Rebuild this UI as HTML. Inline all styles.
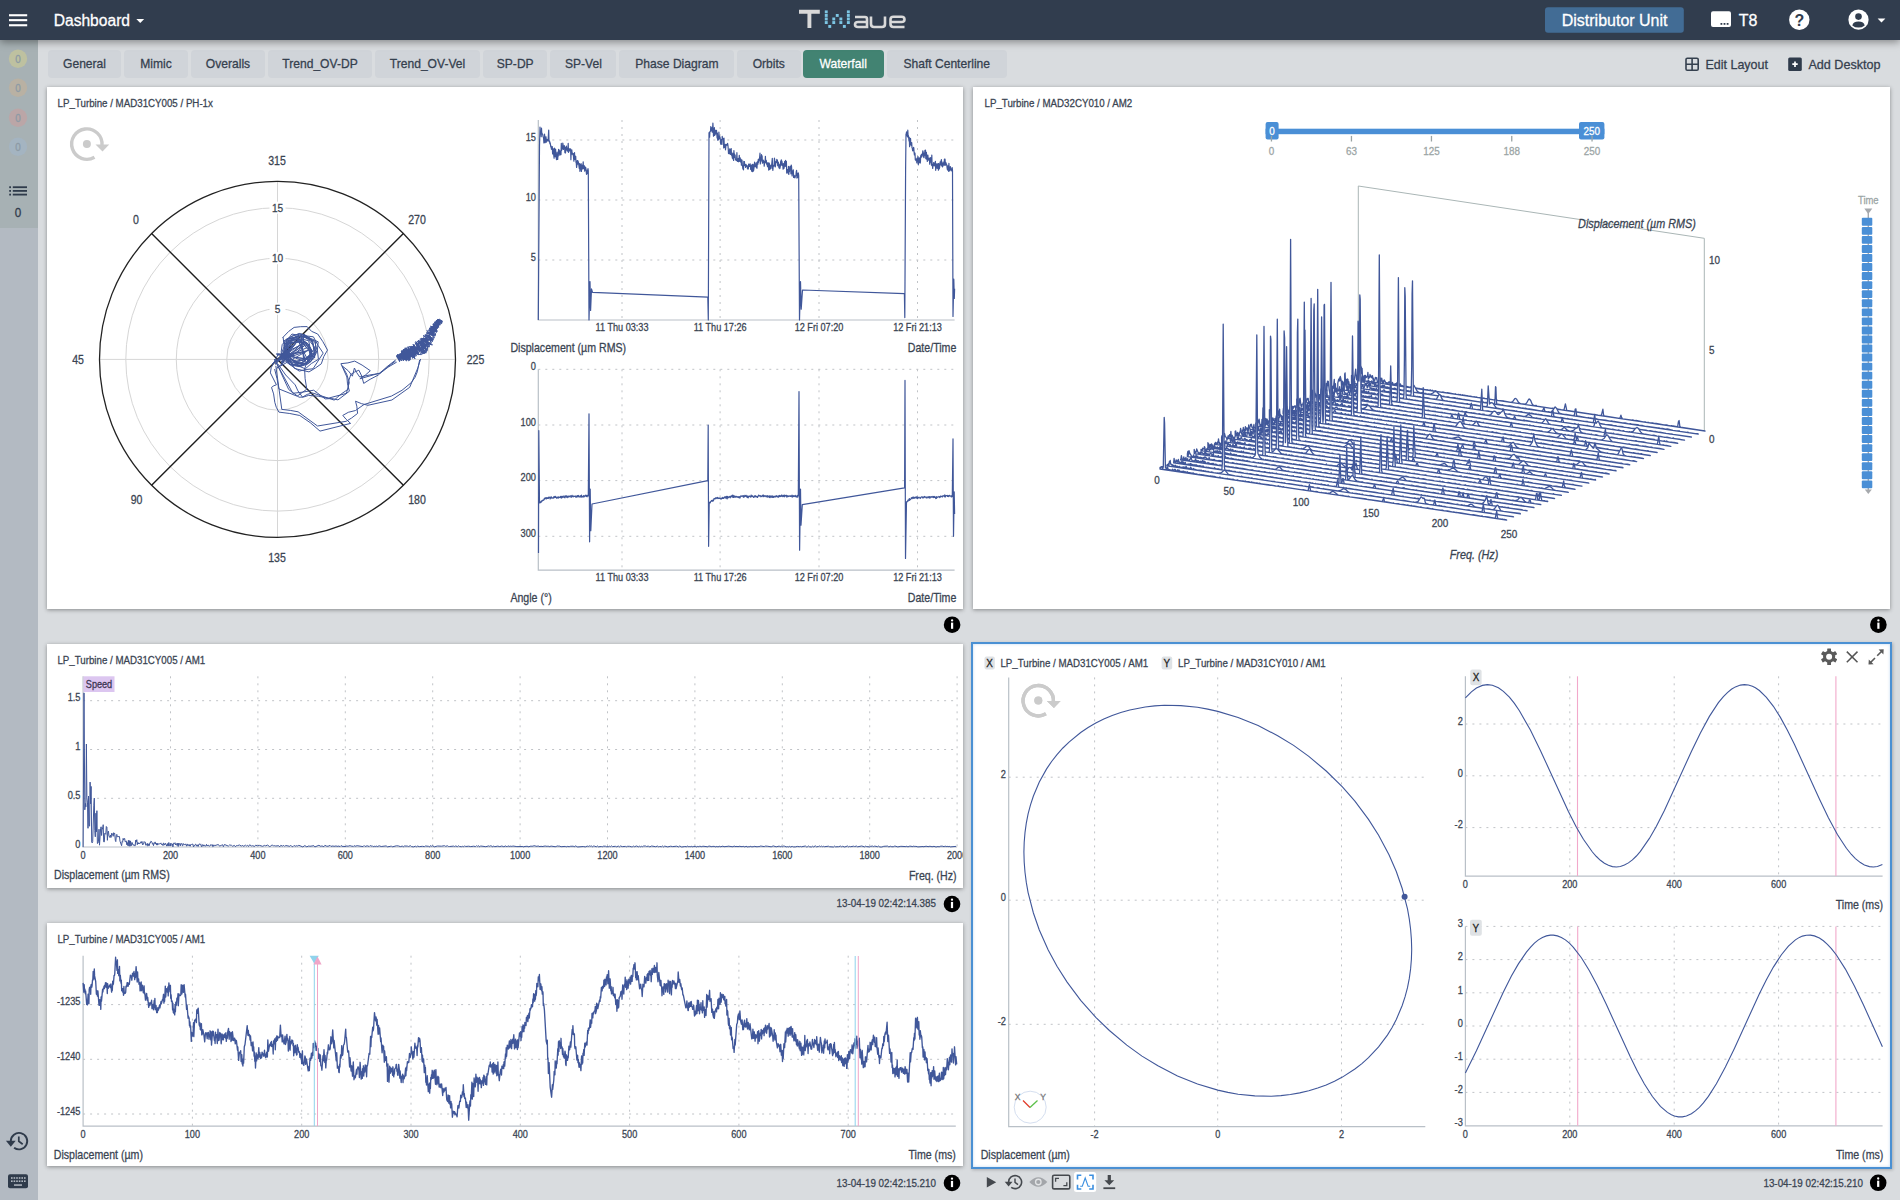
<!DOCTYPE html><html><head><meta charset="utf-8"><style>
html,body{margin:0;padding:0;}
body{width:1900px;height:1200px;overflow:hidden;position:relative;background:#d9dcdf;font-family:"Liberation Sans", sans-serif;}
.a{position:absolute;}
.hdr{left:0;top:0;width:1900px;height:40px;background:#313d4e;box-shadow:0 2px 8px rgba(0,0,0,.4);z-index:3}
.side{left:0;top:40px;width:38px;height:1160px;background:#b3bac2;z-index:2}
.sidetop{left:0;top:40px;width:38px;height:188px;background:#a7b1b4;z-index:2}
.tab{top:50px;height:27.5px;background:#d0d4d9;border-radius:4px;}
.panel{background:#fff;box-shadow:0 1px 4px rgba(0,0,0,.38);}
svg text{font-family:"Liberation Sans", sans-serif;}
</style></head><body>
<div class="a hdr"></div>
<div class="a side"></div>
<div class="a sidetop"></div>

<div class="a tab" style="left:48px;width:73.0px;background:#d0d4d9"></div>
<div class="a tab" style="left:124px;width:64.0px;background:#d0d4d9"></div>
<div class="a tab" style="left:191px;width:74.0px;background:#d0d4d9"></div>
<div class="a tab" style="left:268px;width:104.0px;background:#d0d4d9"></div>
<div class="a tab" style="left:375px;width:105.0px;background:#d0d4d9"></div>
<div class="a tab" style="left:483px;width:64.4px;background:#d0d4d9"></div>
<div class="a tab" style="left:550.2px;width:66.3px;background:#d0d4d9"></div>
<div class="a tab" style="left:619.2px;width:115.3px;background:#d0d4d9"></div>
<div class="a tab" style="left:737px;width:63.5px;background:#d0d4d9"></div>
<div class="a tab" style="left:803px;width:80.5px;background:#428372"></div>
<div class="a tab" style="left:886.7px;width:120.0px;background:#d0d4d9"></div>
<div class="a panel" style="left:47px;top:87px;width:916.0px;height:521.7px"></div>
<div class="a panel" style="left:973px;top:87px;width:917.4px;height:521.7px"></div>
<div class="a panel" style="left:47px;top:643.7px;width:916.0px;height:244.3px"></div>
<div class="a panel" style="left:47px;top:923px;width:916.0px;height:243.3px"></div>
<div class="a" style="left:971px;top:642px;width:917px;height:522.5px;background:#fff;border:2px solid #4a90d3;box-shadow:1px 1px 3px rgba(0,0,0,.22), inset 0 0 3px rgba(74,144,211,.35);"></div>
<svg class="a" style="left:0;top:0;z-index:4" width="1900" height="1200" viewBox="0 0 1900 1200">
<g fill="#fff">
<rect x="9" y="14.2" width="18.2" height="2.1"/>
<rect x="9" y="19.1" width="18.2" height="2.1"/>
<rect x="9" y="24.2" width="18.2" height="2.1"/>
</g>
<text transform="translate(53.7,26.1) scale(0.975,1)" font-size="16" text-anchor="start" fill="#fff" stroke="#fff" stroke-width="0.28" font-weight="normal" font-style="normal">Dashboard</text>
<path d="M136.3 19 L144.2 19 L140.25 23 Z" fill="#fff"/>
<g>
<path d="M799 11.8 H819.8 M809.4 11.8 V28" stroke="#d9d9d9" stroke-width="3.9" fill="none"/>
<rect x="824.8" y="10.4" width="2.9" height="2.9" fill="#7cc6e4"/>
<rect x="824.8" y="14.0" width="2.9" height="2.9" fill="#7cc6e4"/>
<rect x="824.8" y="17.5" width="2.9" height="2.9" fill="#7cc6e4"/>
<rect x="824.8" y="21.1" width="2.9" height="2.9" fill="#7cc6e4"/>
<rect x="828.3" y="25.0" width="2.9" height="2.9" fill="#7cc6e4"/>
<rect x="832.3" y="17.5" width="2.9" height="2.9" fill="#7cc6e4"/>
<rect x="832.3" y="21.1" width="2.9" height="2.9" fill="#7cc6e4"/>
<rect x="835.8" y="14.0" width="2.9" height="2.9" fill="#7cc6e4"/>
<rect x="839.4" y="17.5" width="2.9" height="2.9" fill="#7cc6e4"/>
<rect x="839.4" y="21.1" width="2.9" height="2.9" fill="#7cc6e4"/>
<rect x="842.9" y="25.0" width="2.9" height="2.9" fill="#7cc6e4"/>
<rect x="846.9" y="10.4" width="2.9" height="2.9" fill="#7cc6e4"/>
<rect x="846.9" y="14.0" width="2.9" height="2.9" fill="#7cc6e4"/>
<rect x="846.9" y="17.5" width="2.9" height="2.9" fill="#7cc6e4"/>
<rect x="846.9" y="21.1" width="2.9" height="2.9" fill="#7cc6e4"/>
<path d="M855 17 H865 Q867 17 867 19 V27 H858 Q855 27 855 24.5 Q855 22 858 22 H867" stroke="#d9d9d9" stroke-width="2.6" fill="none"/>
<path d="M871 16.5 V24 Q871 27 874 27 H882 Q885 27 885 24 V16.5" stroke="#d9d9d9" stroke-width="2.6" fill="none"/>
<path d="M904.5 27 H893.5 Q890.5 27 890.5 24 V19.5 Q890.5 16.8 893.5 16.8 H901.5 Q904.5 16.8 904.5 19.5 Q904.5 22 901.5 22 H891" stroke="#d9d9d9" stroke-width="2.6" fill="none"/>
</g>
<rect x="1545" y="7.2" width="138.8" height="25.5" rx="3" fill="#426c95"/>
<text transform="translate(1561.7,26.3) scale(1.0,1)" font-size="16" text-anchor="start" fill="#fff" stroke="#fff" stroke-width="0.28" font-weight="normal" font-style="normal">Distributor Unit</text>
<rect x="1711" y="11.3" width="20" height="15.6" rx="2" fill="#fff"/>
<g fill="#313d4e"><rect x="1720.5" y="23" width="1.8" height="1.8"/><rect x="1723.6" y="23" width="1.8" height="1.8"/><rect x="1726.7" y="23" width="1.8" height="1.8"/></g>
<text transform="translate(1738.8,26.3) scale(1.0,1)" font-size="16" text-anchor="start" fill="#fff" stroke="#fff" stroke-width="0.28" font-weight="normal" font-style="normal">T8</text>
<circle cx="1799.3" cy="19.7" r="10.2" fill="#fff"/>
<text x="1799.3" y="25.6" font-size="16" font-weight="bold" text-anchor="middle" fill="#313d4e">?</text>
<circle cx="1858.5" cy="19.7" r="10.1" fill="#fff"/>
<circle cx="1858.5" cy="16.6" r="3.3" fill="#313d4e"/>
<path d="M1852.3 25.4 Q1853 21.6 1858.5 21.6 Q1864 21.6 1864.7 25.4 Q1862 27.6 1858.5 27.6 Q1855 27.6 1852.3 25.4 Z" fill="#313d4e"/>
<path d="M1877.6 18.5 L1885.4 18.5 L1881.5 22.6 Z" fill="#fff"/>
<circle cx="18" cy="58.7" r="9.2" fill="#bec1a0"/>
<text transform="translate(18.0,62.7) scale(0.9,1)" font-size="11" text-anchor="middle" fill="#8c9aa5" stroke="#8c9aa5" stroke-width="0.28" font-weight="normal" font-style="normal">0</text>
<circle cx="18" cy="87.8" r="9.2" fill="#b9b1a3"/>
<text transform="translate(18.0,91.8) scale(0.9,1)" font-size="11" text-anchor="middle" fill="#8c9aa5" stroke="#8c9aa5" stroke-width="0.28" font-weight="normal" font-style="normal">0</text>
<circle cx="18" cy="117.8" r="9.2" fill="#bba6a7"/>
<text transform="translate(18.0,121.8) scale(0.9,1)" font-size="11" text-anchor="middle" fill="#8c9aa5" stroke="#8c9aa5" stroke-width="0.28" font-weight="normal" font-style="normal">0</text>
<circle cx="18" cy="146.7" r="9.2" fill="#a4b4c1"/>
<text transform="translate(18.0,150.7) scale(0.9,1)" font-size="11" text-anchor="middle" fill="#8c9aa5" stroke="#8c9aa5" stroke-width="0.28" font-weight="normal" font-style="normal">0</text>
<g fill="#2f3b4b">
<rect x="9.2" y="186.29999999999998" width="1.8" height="1.8"/><rect x="12.8" y="186.29999999999998" width="14.2" height="1.8"/>
<rect x="9.2" y="190.0" width="1.8" height="1.8"/><rect x="12.8" y="190.0" width="14.2" height="1.8"/>
<rect x="9.2" y="193.7" width="1.8" height="1.8"/><rect x="12.8" y="193.7" width="14.2" height="1.8"/>
</g>
<text transform="translate(18.0,217.2) scale(0.9,1)" font-size="13" text-anchor="middle" fill="#2f3b4b" stroke="#2f3b4b" stroke-width="0.28" font-weight="normal" font-style="normal">0</text>
<path d="M10.8 1141.0 A8.2 8.2 0 1 1 14.1 1147.7" stroke="#2f3b4b" stroke-width="1.9" fill="none"/><path d="M5.9 1140.8 L15.7 1140.8 L10.8 1146.7 Z" fill="#2f3b4b"/><path d="M18.8 1136.5 V1141.3 L22.7 1144.3" stroke="#2f3b4b" stroke-width="1.71" fill="none"/>
<rect x="8" y="1174.2" width="20" height="14" rx="2" fill="#2f3b4b"/>
<g fill="#b3bac2">
<rect x="11.0" y="1177.2" width="1.6" height="1.6"/>
<rect x="13.6" y="1177.2" width="1.6" height="1.6"/>
<rect x="16.2" y="1177.2" width="1.6" height="1.6"/>
<rect x="18.8" y="1177.2" width="1.6" height="1.6"/>
<rect x="21.4" y="1177.2" width="1.6" height="1.6"/>
<rect x="24.0" y="1177.2" width="1.6" height="1.6"/>
<rect x="11.0" y="1180.4" width="1.6" height="1.6"/>
<rect x="13.6" y="1180.4" width="1.6" height="1.6"/>
<rect x="16.2" y="1180.4" width="1.6" height="1.6"/>
<rect x="18.8" y="1180.4" width="1.6" height="1.6"/>
<rect x="21.4" y="1180.4" width="1.6" height="1.6"/>
<rect x="24.0" y="1180.4" width="1.6" height="1.6"/>
<rect x="14" y="1184.3" width="8" height="1.5"/>
</g>
<text transform="translate(84.5,67.9) scale(0.93,1)" font-size="13" text-anchor="middle" fill="#35404e" stroke="#35404e" stroke-width="0.28" font-weight="normal" font-style="normal">General</text>
<text transform="translate(156.0,67.9) scale(0.93,1)" font-size="13" text-anchor="middle" fill="#35404e" stroke="#35404e" stroke-width="0.28" font-weight="normal" font-style="normal">Mimic</text>
<text transform="translate(228.0,67.9) scale(0.93,1)" font-size="13" text-anchor="middle" fill="#35404e" stroke="#35404e" stroke-width="0.28" font-weight="normal" font-style="normal">Overalls</text>
<text transform="translate(320.0,67.9) scale(0.93,1)" font-size="13" text-anchor="middle" fill="#35404e" stroke="#35404e" stroke-width="0.28" font-weight="normal" font-style="normal">Trend_OV-DP</text>
<text transform="translate(427.5,67.9) scale(0.93,1)" font-size="13" text-anchor="middle" fill="#35404e" stroke="#35404e" stroke-width="0.28" font-weight="normal" font-style="normal">Trend_OV-Vel</text>
<text transform="translate(515.2,67.9) scale(0.93,1)" font-size="13" text-anchor="middle" fill="#35404e" stroke="#35404e" stroke-width="0.28" font-weight="normal" font-style="normal">SP-DP</text>
<text transform="translate(583.4,67.9) scale(0.93,1)" font-size="13" text-anchor="middle" fill="#35404e" stroke="#35404e" stroke-width="0.28" font-weight="normal" font-style="normal">SP-Vel</text>
<text transform="translate(676.9,67.9) scale(0.93,1)" font-size="13" text-anchor="middle" fill="#35404e" stroke="#35404e" stroke-width="0.28" font-weight="normal" font-style="normal">Phase Diagram</text>
<text transform="translate(768.8,67.9) scale(0.93,1)" font-size="13" text-anchor="middle" fill="#35404e" stroke="#35404e" stroke-width="0.28" font-weight="normal" font-style="normal">Orbits</text>
<text transform="translate(843.2,67.9) scale(0.93,1)" font-size="13" text-anchor="middle" fill="#fff" stroke="#fff" stroke-width="0.28" font-weight="normal" font-style="normal">Waterfall</text>
<text transform="translate(946.7,67.9) scale(0.93,1)" font-size="13" text-anchor="middle" fill="#35404e" stroke="#35404e" stroke-width="0.28" font-weight="normal" font-style="normal">Shaft Centerline</text>
<rect x="1686" y="58.3" width="12.2" height="12" rx="1.3" fill="none" stroke="#35404e" stroke-width="1.6"/>
<path d="M1692.1 58.3 V70.3 M1686 64.3 H1698.2" stroke="#35404e" stroke-width="1.6"/>
<text transform="translate(1705.5,68.9) scale(0.96,1)" font-size="13" text-anchor="start" fill="#35404e" stroke="#35404e" stroke-width="0.28" font-weight="normal" font-style="normal">Edit Layout</text>
<rect x="1788.2" y="57.6" width="13.6" height="13.3" rx="1.5" fill="#2f3b4b"/>
<path d="M1795 61.5 V67 M1792.3 64.2 H1797.7" stroke="#fff" stroke-width="1.7"/>
<text transform="translate(1808.4,68.9) scale(0.97,1)" font-size="13" text-anchor="start" fill="#35404e" stroke="#35404e" stroke-width="0.28" font-weight="normal" font-style="normal">Add Desktop</text>
<circle cx="952.1" cy="624.7" r="8.3" fill="#000"/><rect x="951.0" y="622.6" width="2.2" height="6.2" fill="#fff"/><circle cx="952.1" cy="620.4" r="1.15" fill="#fff"/>
<circle cx="1878.4" cy="624.7" r="8.3" fill="#000"/><rect x="1877.3" y="622.6" width="2.2" height="6.2" fill="#fff"/><circle cx="1878.4" cy="620.4" r="1.15" fill="#fff"/>
<circle cx="952" cy="904" r="8.3" fill="#000"/><rect x="950.9" y="901.9" width="2.2" height="6.2" fill="#fff"/><circle cx="952" cy="899.7" r="1.15" fill="#fff"/>
<circle cx="952" cy="1183" r="8.3" fill="#000"/><rect x="950.9" y="1180.9" width="2.2" height="6.2" fill="#fff"/><circle cx="952" cy="1178.7" r="1.15" fill="#fff"/>
<circle cx="1878.2" cy="1182.8" r="8.3" fill="#000"/><rect x="1877.1" y="1180.7" width="2.2" height="6.2" fill="#fff"/><circle cx="1878.2" cy="1178.5" r="1.15" fill="#fff"/>
<text transform="translate(936.0,907.4) scale(0.895,1)" font-size="11" text-anchor="end" fill="#3a4452" stroke="#3a4452" stroke-width="0.28" font-weight="normal" font-style="normal">13-04-19 02:42:14.385</text>
<text transform="translate(936.0,1186.8) scale(0.895,1)" font-size="11" text-anchor="end" fill="#3a4452" stroke="#3a4452" stroke-width="0.28" font-weight="normal" font-style="normal">13-04-19 02:42:15.210</text>
<text transform="translate(1862.9,1186.8) scale(0.895,1)" font-size="11" text-anchor="end" fill="#3a4452" stroke="#3a4452" stroke-width="0.28" font-weight="normal" font-style="normal">13-04-19 02:42:15.210</text>
<text transform="translate(57.6,107.0) scale(0.885,1)" font-size="11" text-anchor="start" fill="#3a4452" stroke="#3a4452" stroke-width="0.28" font-weight="normal" font-style="normal">LP_Turbine / MAD31CY005 / PH-1x</text>
<text transform="translate(984.5,107.0) scale(0.885,1)" font-size="11" text-anchor="start" fill="#3a4452" stroke="#3a4452" stroke-width="0.28" font-weight="normal" font-style="normal">LP_Turbine / MAD32CY010 / AM2</text>
<text transform="translate(57.4,664.4) scale(0.885,1)" font-size="11" text-anchor="start" fill="#3a4452" stroke="#3a4452" stroke-width="0.28" font-weight="normal" font-style="normal">LP_Turbine / MAD31CY005 / AM1</text>
<text transform="translate(57.4,942.7) scale(0.885,1)" font-size="11" text-anchor="start" fill="#3a4452" stroke="#3a4452" stroke-width="0.28" font-weight="normal" font-style="normal">LP_Turbine / MAD31CY005 / AM1</text>
<path d="M102.0 145.3 A15.2 15.2 0 1 0 94.5 157.2" stroke="#cbcbcb" stroke-width="3.4" fill="none"/><circle cx="86.9" cy="144" r="4" fill="#cbcbcb"/><path d="M95.5 144.4 L109.2 144.4 L102.5 151.5 Z" fill="#cbcbcb"/>
<path d="M1053.4 701.9 A15.2 15.2 0 1 0 1045.9 713.8" stroke="#cbcbcb" stroke-width="3.4" fill="none"/><circle cx="1038.3" cy="700.6" r="4" fill="#cbcbcb"/><path d="M1046.9 701.0 L1060.6 701.0 L1053.9 708.1 Z" fill="#cbcbcb"/>
<g fill="none" stroke="#d6d6d6" stroke-width="1">
<circle cx="277.5" cy="359.4" r="50.7"/>
<circle cx="277.5" cy="359.4" r="101.2"/>
<circle cx="277.5" cy="359.4" r="151.7"/>
<path d="M99.5 359.4 H455.5 M277.5 181.39999999999998 V537.4"/>
</g>
<circle cx="277.5" cy="359.4" r="178" fill="none" stroke="#222" stroke-width="1.3"/>
<path d="M151.6 233.5 L403.4 485.3 M403.4 233.5 L151.6 485.3" stroke="#1e1e1e" stroke-width="1.4"/>
<rect x="269.5" y="201.7" width="16" height="12" fill="#fff"/>
<text transform="translate(277.5,211.9) scale(0.88,1)" font-size="11.5" text-anchor="middle" fill="#3a4452" stroke="#3a4452" stroke-width="0.28" font-weight="normal" font-style="normal">15</text>
<rect x="269.5" y="252.2" width="16" height="12" fill="#fff"/>
<text transform="translate(277.5,262.4) scale(0.88,1)" font-size="11.5" text-anchor="middle" fill="#3a4452" stroke="#3a4452" stroke-width="0.28" font-weight="normal" font-style="normal">10</text>
<rect x="269.5" y="302.7" width="16" height="12" fill="#fff"/>
<text transform="translate(277.5,312.9) scale(0.88,1)" font-size="11.5" text-anchor="middle" fill="#3a4452" stroke="#3a4452" stroke-width="0.28" font-weight="normal" font-style="normal">5</text>
<text transform="translate(277.0,165.4) scale(0.88,1)" font-size="12" text-anchor="middle" fill="#3a4452" stroke="#3a4452" stroke-width="0.28" font-weight="normal" font-style="normal">315</text>
<text transform="translate(136.0,223.9) scale(0.88,1)" font-size="12" text-anchor="middle" fill="#3a4452" stroke="#3a4452" stroke-width="0.28" font-weight="normal" font-style="normal">0</text>
<text transform="translate(417.0,223.9) scale(0.88,1)" font-size="12" text-anchor="middle" fill="#3a4452" stroke="#3a4452" stroke-width="0.28" font-weight="normal" font-style="normal">270</text>
<text transform="translate(78.0,363.9) scale(0.88,1)" font-size="12" text-anchor="middle" fill="#3a4452" stroke="#3a4452" stroke-width="0.28" font-weight="normal" font-style="normal">45</text>
<text transform="translate(475.5,363.9) scale(0.88,1)" font-size="12" text-anchor="middle" fill="#3a4452" stroke="#3a4452" stroke-width="0.28" font-weight="normal" font-style="normal">225</text>
<text transform="translate(136.5,504.4) scale(0.88,1)" font-size="12" text-anchor="middle" fill="#3a4452" stroke="#3a4452" stroke-width="0.28" font-weight="normal" font-style="normal">90</text>
<text transform="translate(417.0,504.4) scale(0.88,1)" font-size="12" text-anchor="middle" fill="#3a4452" stroke="#3a4452" stroke-width="0.28" font-weight="normal" font-style="normal">180</text>
<text transform="translate(277.0,562.4) scale(0.88,1)" font-size="12" text-anchor="middle" fill="#3a4452" stroke="#3a4452" stroke-width="0.28" font-weight="normal" font-style="normal">135</text>
<g fill="none" stroke="#40579a" stroke-width="1" stroke-linejoin="round">
<path d="M301.4 342.6 308.1 346.6 310.1 354.8 303.1 359.8 296 361.1 288.7 359.1 286.2 352.2 287.1 344.7 294.5 342 302.2 340.9 284.2 343.5 292 334 304.2 336.8 315.4 341.4 315.9 353.2 310.3 362.3 300.1 366.2 289.2 363.6 281 354.9 285 343.9 296 336.6 303 336.4 308.9 339.9 312.9 345.2 314.7 351.8 311 357.6 306.8 363.4 299.4 363 293.3 361.1 288.8 357 284.2 351.7 290.5 340.4 296.1 336.9 307.2 358.7 300.2 363.5 292.7 359.7 287 354.6 289 347.4 292.6 340.4 301.3 339 308.3 344 312.1 351.7 306.9 358.4 311.6 356.4 307.5 362.1 300.7 366.2 293.6 362.7 286 359.9 284.8 352.3 285.1 344.8 290 338.6 297.8 336.8 306 337.1 312.9 341.8 314.7 357.8 300.5 340.5 306.9 342.7 310.8 348.4 311.8 356 298 361.9 290.9 359.3 285.9 353.2 287 345.3 292.6 339.3 300.6 339.9 304.7 361.4 298 363.6 291.1 361.5 286 356.2 285.6 348.6 291.2 343.5 298.1 342.3 305.4 343 309.7 349 310.4 356.4 306.5 363.8 297.8 337 305.1 336.5 311.4 340.3 314.1 346.9 314.1 353.5 311 359.2 306.1 363.4 299.8 365.6 293.3 364.3 288.5 360.2 282.4 355.9 284 349 291.1 338.3 297.9 338.3 314.3 355.2 310.6 361.2 304.4 363.8 298.4 365.3 292.2 364 287.5 359.8 284.7 347.1 288.8 341.1 296.1 339.9 302.8 340.1 307.5 344.3 310.8 349.1 312.2 354.9 304.1 361 296 358.3 289.5 354 287.7 346 293.1 339.4 301.1 338.9 308.7 340.7 310.1 347.9 311 355.7 303.6 359.4 301 333.8 307.9 337.2 314.8 342 317.1 350.3 313.9 358.4 307.6 364.2 299.2 366.7 290.6 365 285.4 358.7 281.1 352.2 282.2 344.6 287.2 339 293.5 335.4 300.9 334 304.1 342.1 308 346.5 312.8 350.9 305.9 360.1 301.5 363.4 295.9 362.4 291 359.7 286.6 354.9 288.7 348.9 293.8 346 297.7 340.7 303.5 343.4 303.6 334 310.2 338.3 313.2 344.7 316 351.7 311 357.6 305.5 363.1 297.1 364.2 290.9 359 286.8 353.1 284.2 345.6 288.7 338.9 296.1 336.6 303.1 336.3"/>
<path d="M282.6 337.7 288.8 331.3 294.1 327.4 300.6 326.7 307.2 326.6 311.5 331.3 317.7 334 322.9 341.7 327.5 350.1 323.8 356.5 321.3 363.8 315.6 367.9 309 371.9 294.5 368.5 290.5 362 285.9 355.8 284.2 346.5 283.1 337.1"/>
<path d="M283.4 341.2 291 336.8 299.2 333.4 306 335.9 313.4 336.8 318.1 345.5 323.2 353.1 313 368.8 306.1 369.5 299.2 371.1 286.3 362.1 285.5 351.6 284.2 341.2"/>
<path d="M286.3 339.1 304.6 335.7 318.2 341.8 317.4 350 318.4 359.3 311.4 363.5 305.3 368.8 297.8 365.7 289.7 364.4 287.2 352.3 286.2 339.2"/>
<path d="M281.7 357 308.1 350.4 276.7 368.2 305.3 345 276.2 361.3 294 345.7 275 364.3 286.7 353.9 276.3 354 293.8 355.5 277 354.7 308.8 359.3 281.8 355.3 292.3 342.2 279.8 357.7 289.2 350.9 281.2 365.7 292.2 344.7 281.2 362.1 302.3 343.3 272.3 363.8 296 342.9 281.4 363 304.6 343.2 280.6 354.7 306 351.6 275.2 361.8 307.5 347.4"/>
<path d="M278.4 353.8 271.2 367.7 270.4 372.9 276.4 384.8 273.9 385.7 271.5 387.4 273.6 393.9 274.8 402.3 276.3 407.3 278.9 412.1 289.8 413.5 299.8 415.5 310.4 422.8 320 431.1 350.6 423.4 346.1 419.3 342.8 415.4 348.3 412.3 355.5 410.5 364 404.5 391.4 396.1 402 390.3 411.3 382.6 415 377.4 417.3 371.8 419.6 360"/>
<path d="M275.8 365.8 281.8 409.4 290.3 410.4 298.1 411.8 317.5 426 346.2 421.3 351.6 418 357.6 413.4 356.8 406.2 355.5 401.2 361.4 403.6 367.9 405.3 391.9 400 409.7 387.3 417.9 367.8 420.6 359"/>
<path d="M274.2 359 292.8 393.3 302.2 392.2 313.7 390.2 325.2 398.9 331.7 398.5 338 399.9 349.4 391.2 347.5 383.9 346.9 377 340.9 363.7 347.9 362.9 354.7 361.1 362.1 365.1 370.3 370.7 365.7 374.8 359.9 378.8 379.5 373.1 395.6 361"/>
<path d="M277.5 363.5 285.7 375 295.2 384.9 297.9 390.8 302.5 397.1 307.2 394.4 312.3 392.9 334.2 400.1 341.2 394 348.3 389.1 348.6 381.2 350.8 374.5 354.7 372 358.9 370.2 361.7 376 363.7 383.4 370.1 379.3 378.2 375.1 386.5 367.1 395.6 360"/>
<path d="M274.6 369 277 378.6 278.9 388.9 297.1 396.2 306.8 389.2 305.1 378.6 304.6 368.9 309.2 355.8"/>
<path d="M276.4 362.7 288.7 389.5 299 397.2 303.3 397.1 308.6 395.4 318.3 396.2 328.3 398.2 346.4 393.4 349.3 382.5 346.7 374.1 342.1 365.8 348.4 370.9 352.4 376.2 354.4 368 356.7 372.6 359.7 377 369.5 375 380 373.4 388.1 367.2 396.7 362.1"/>
<path d="M398.3 358.5 398.4 355.8 399.6 361.7 398.8 359.8 399.6 358.1 396 356 398.8 355 401.1 360.3 399 359.4 400.6 358.1 400.1 356.5 397 358.1 398.3 354.9 397.3 357.1 398.3 358.5 399.7 357.4 399.6 356.8 399.5 360.6 397.5 354.3 398.7 359.9 397.5 356.2 401.5 358.1 399.2 356.3 400.4 359.4 398.8 354.4 401.1 357.1 399.1 357.5 400.7 360 400.2 358.2 400.1 358.8 398.6 356.7 399.2 355.8 401.8 358.2 399.6 354.5 398.6 355 399.5 357.5 401.8 360.9 401.7 357.5 402.6 358.8 400.4 356 401 358.5 401.3 357.7 400.2 357.5 403 356.5 399.4 354.2 399.8 354.7 399.8 356.9 400.3 353.7 402.8 356.4 402.3 357 402.6 359.4 403.5 355.9 402.9 358.3 401.3 353.2 401.5 356.9 403.3 358.7 402.2 359.1 403.3 357 406 360 402.5 354 400.5 355.8 402.5 357 403.6 355.1 404.5 355.7 403.6 353 400.3 353.8 403.5 357.1 403.3 359.4 404.5 358.8 403.4 360.9 402.8 356.9 401.4 351.7 405.4 360.2 400.5 353.8 403.1 358.3 401.9 351.2 405.2 359.8 405.9 357.2 406.9 359.8 402.7 351.7 402.4 355.5 404.1 360 403.4 356.1 401.6 350.6 403.6 356.5 404 355.4 403.5 351.4 406.4 359.1 405.2 359.8 402.4 350.9 406.8 359.8 404.8 352.6 402.5 350.6 402.6 352.7 405.7 354.7 403.6 349.1 404.4 358.8 407.2 360.2 406.3 361 404.2 352.4 406.9 360.1 405.4 353 405.7 355.7 406 355.8 407.1 358.4 407.2 359.8 408.8 356.7 406.1 357.2 404.1 352 404.5 350.8 406.3 356.6 402.9 350.6 405.3 349.3 403.7 349.5 405.7 356.2 409.1 358.7 405.4 352.4 406.6 358.1 405.9 356.2 409.1 359.8 403.4 349.5 407.6 357.6 408.6 360.8 410.4 359.6 408.4 358 409.8 359.6 408.1 355.2 410.3 359.2 405.1 351.4 408.1 351.8 407 355.2 409.3 360.1 409.9 358.4 405.7 350.3 410.4 356.1 407.1 349.7 404.9 347.9 405.5 351.3 406 350.7 409.3 355.8 406.5 350.7 409 359 405.2 348.4 408.8 351 406 350.2 409.8 356.6 406.6 355.6 408.8 354.2 406.7 348.9 408.6 353.7 410.2 354 407.7 349.8 410.1 355.5 408.7 349.1 410.3 358.2 409.3 350.2 407.9 349.5 408.6 348.5 409.8 356.7 412.6 354.7 406.2 347.6 409.5 356.2 410.9 352 411.5 356.6 410.6 354.9 408.4 353.1 409.3 354.2 412 353.6 412.4 358.4 413.2 357.2 408.1 346.5 408.3 348.4 407.8 352.5 412.3 357.4 410.2 352 410.5 348 410.6 350.5 410.2 347.3 410.4 353.3 411.2 352 407.8 347.1 413.8 357.3 408.3 348.2 409.4 349.1 410 352.4 410.5 350.5 413.8 357.3 411.1 351.5 415 358.6 412.2 354.7 411.5 349 414.3 358.2 414.5 351.9 411.5 346.2 414.5 358.4 410.8 346.6 412.4 349 413.3 348.4 410.5 349.6 410.7 348.7 413.3 353 409.8 346.4 415.9 352.5 409.8 346.2 415 356.7 414.3 352.6 415.6 354.9 413.6 350.1 415.3 352.7 416.3 356.1 410.8 348.3 412.7 349.1 410.3 347.5 413 351 414.4 357.4 411.8 346.8 413.6 346.4 414.3 353.7 413.3 347 412.7 347.5 415.8 353.2 419 354.9 413.8 348.3 416.3 354.4 414.1 347.4 413.5 348.6 418.3 354.8 414.8 348.9 415.6 348.6 414.4 347.4 415.9 349.4 411.9 346.5 415.5 349.5 415.7 352.1 415.3 348.4 415.5 352.8 414.5 350.8 414.5 345.2 414.3 347 414.6 345 412.8 346 418.2 352.7 418.1 350.7 416.8 348.2 415.6 349.4 413.8 344.5 417.9 350.3 415.5 346.8 419.3 354.9 412.9 346 418.1 354.2 413.1 344.4 419.1 354.5 421.5 354.6 416.4 347 416.7 349.6 420.1 349.7 418.6 348 420 351.6 415.3 342.6 418.1 349.8 415.9 343.1 418.5 348.5 419.5 347 417.5 349.2 417.3 346.8 420.9 350 415.8 341.5 421.5 352.5 422.3 351.7 418.1 347.4 422.4 351.1 422.3 354.2 418.1 343 420.6 349.9 423.5 352.6 424.7 352 416.9 344.9 421.3 348.4 422.8 347.3 420.6 350.7 421.4 349.8 418.3 345.9 423.3 353.2 422.8 350.5 424 353.8 416.2 342.2 417.8 346.5 416.7 343.7 419.9 345 424.2 350.6 422.9 349.2 423.6 353.5 425.5 353 419.8 343.3 422.6 350.2 423.8 350.4 421.2 347 423.6 349.6 421.2 343.8 419.3 342.6 419.7 342.4 418.5 343 420.6 341.3 417.2 341.4 420.3 343.8 423.6 347.4 424.5 349.1 418.3 340.2 423.1 347.2 420 343.9 426.1 353.1 425.1 347.4 420.8 341.5 424 352.6 426.8 351.4 425.2 345.7 428.2 347 421 340 422.3 344.1 424.7 345 426.2 345 417.7 342.4 421.6 343 425.5 350.2 426.5 349.3 424.4 343.8 419.4 342.5 426.4 349.9 424.4 347.7 419.9 340.5 427.3 350.6 427.7 345.5 423.8 345 424.3 344.9 422.2 341.6 423.7 346.7 423 343.3 423.2 343.7 419.7 343 425.3 346.1 423.9 343.1 420.5 343.5 426.1 345.4 426.7 343.1 429.6 345.1 424.3 342.1 423.6 340.8 423.1 343.9 428.8 345.3 429.5 346.9 419.5 342.8 425 340.8 421.9 339.1 426.1 346.4 428.1 342.8 420.1 339.7 420.2 338.7 423.9 340.6 428.2 344.3 428.6 344.8 425.4 343.4 424.1 339.8 424.9 341.1 422.7 339.4 424.8 342 427.2 341.6 429.4 345.4 429.2 344.4 427.4 341.5 427.8 344.4 427.5 342.7 430.9 344.3 421.8 338.1 421.4 338.7 423 339.2 424.1 338.7 422.1 339 432.5 344.8 431 344.8 427.4 342.1 424.6 340.6 428.3 343.6 422.6 338.9 428.4 339.8 423.4 337.7 431.2 344.1 421.2 338.9 425.2 339.3 428 341.7 424.6 341.4 426.4 337 427.2 339 422.9 339.2 428.2 340 427.9 341 426.4 340.1 430.6 340 432.7 341.5 430.5 340.1 431.2 343.2 428.6 337.1 425 338 430.5 339.8 427.2 339.8 426.6 337.6 423 335.7 426.4 336.6 426.2 334.7 430 339.5 431.8 340 425.3 335.2 430.2 337.8 426.7 335.1 429.8 336.1 431.3 338.4 427.6 339.2 432.9 339 428.8 335.5 427.7 335.7 431.3 339.9 427.2 335.2 428.5 335.5 424.8 335.1 429.1 335.2 431.9 339.3 427.9 335.3 431.7 338.3 428.8 337.1 431.6 339.2 432.9 339.6 428.3 335 429.4 337.9 431.2 338.3 434.4 337 432.6 340.9 429.1 335.6 429.3 334.8 430.9 334.8 429.5 334.8 433.5 333.4 433.2 335.3 434 336.3 428.6 333 434 334.9 427.9 333.5 429.6 333.1 433.1 336.7 430.9 332.1 434.5 335.6 433.4 333.5 430.1 333.3 430.4 334.8 430 331 434.3 336.1 426.2 333 431.8 332.5 434.8 334.4 431.5 331.7 427.4 332.6 431.9 333 435.4 335.7 435.6 333.3 434.4 333.4 430.4 332.6 430.1 333.6 426.8 330.7 427.1 331.1 429.9 330.5 434.8 331.7 432.6 331.7 432 332.5 429.7 330.9 435 331.9 434.7 332.3 431.7 332.9 432.8 332.7 429.8 327.8 428.9 330.2 434.6 330.3 433.8 330.2 431.8 331.3 436.9 330.8 435.7 331.5 431 328.8 432.6 328.4 431.5 328.5 433.7 329.2 436.9 332.3 429.9 329.2 434.3 329.8 431.2 327.4 429.5 328.9 437.5 331.2 432 330.8 432.3 329.9 429.4 328.9 436.3 329.2 435.2 330 431.1 328.8 434.2 330.2 430.8 329.6 432.3 327.9 435.5 328 436.8 330.6 434.8 328.8 431.6 330.1 431.5 327.6 435.5 330.7 430.8 328.3 437 331 435.7 329.4 433.6 328.8 437.9 327.8 431.2 326.6 432.6 329.4 430.9 329.7 436.6 330.4 432.2 326.2 435.5 329.1 434.9 327.8 435.6 330.9 432.4 328.2 434.9 327 430.3 327 434.1 327.3 431.7 328.3 433.5 326.5 435.8 330.3 433.1 326.4 432.8 328.2 436.6 329.5 432.8 327 435.9 326.4 434.3 327.9 432 327.3 430.7 326.2 436.5 328.6 435.4 326.6 436.9 327.6 432.9 324.1 434 327.6 436.6 327.6 435.1 324.4 436.9 327.9 436.8 327.2 435.7 325.6 435.4 327 435.3 325 436.2 326.4 436.3 327.3 437.7 327.7 433.6 325.7 437.3 326.7 434 325.1 434 324.5 439 326.8 435.8 327.6 438 327.2 436.8 325.6 434.6 326.7 433.9 323.4 434.1 324.6 437.4 328.5 436 325.2 437.3 327.2 435 323.8 435.4 323.7 436.3 327.1 433.2 325 434.6 322.6 437.6 328 436.8 326.9 437.8 326.7 435.6 325.4 436.6 324.9 437 325.9 436 324.5 439.1 325.8 436.4 326.6 436.9 326.3 438.8 327.2 435.5 322.5 438 325.7 435.9 321.9 436.1 322.2 436.5 321.6 438.8 324.8 435.3 323.3 436.7 324.3 436.8 324.9 435 322.3 436.3 322.4 435.6 323.5 438.1 325.9 434.4 322 435.3 322 438.2 326.7 437.4 325 438.2 324.6 435.7 323.3 436.7 324.3 438.5 324 437.2 322 438.4 322.7 438 321.2 439.6 325.3 436.5 321.6 437.2 322.2 438.2 324.9 437.6 321.9 436 321.3 440 324.3 437.8 322.8 438.4 323.3 436.4 320.4 436 321.9 440.2 324.6 438.6 322.8 439.5 322.5 435.9 321.9 436.5 320.4 438.1 323.7 438.9 321.8 437.5 321.6 438.8 322.7 441.3 322.4 438.9 321 441.8 322.7 440.5 324.3 437.1 320.5 439.4 324.1 439.4 322.6 438 319.2 438.1 320.6 440.1 324 439.6 322.2 438.5 320.6 439 321.9 439.2 321.5 440.4 321.7 437 320.1 441.6 323.4 438.5 319.6 439.4 319.1 438.3 321.4 440.8 321.5 438.4 319.4 438.9 320.9 439.7 320.3 437.4 321.5 440.6 320.9 442.7 321.4 439.8 319.6 440.4 320 439.9 321.9 438.8 319.8 440.5 320.9 441.5 321.1 439.1 321.2 441.9 321.4 437.7 319.9 437.4 319.4 439.2 320.6 438.7 322.1 442.1 322.8 440.9 321"/>
</g>
<g stroke="#c0c3c7" stroke-width="1" stroke-dasharray="2 5" fill="none"><path d="M538.3 140.0 H954.6"/><path d="M538.3 200.0 H954.6"/><path d="M538.3 260.0 H954.6"/><path d="M622.0 120.0 V320.0"/><path d="M720.1 120.0 V320.0"/><path d="M819.0 120.0 V320.0"/><path d="M917.5 120.0 V320.0"/></g>
<path d="M538.3 120.0 V320.0 H954.6" stroke="#b9c0c7" stroke-width="1.2" fill="none"/>
<text transform="translate(536.0,140.5) scale(0.88,1)" font-size="10.5" text-anchor="end" fill="#3a4452" stroke="#3a4452" stroke-width="0.28" font-weight="normal" font-style="normal">15</text>
<text transform="translate(536.0,200.5) scale(0.88,1)" font-size="10.5" text-anchor="end" fill="#3a4452" stroke="#3a4452" stroke-width="0.28" font-weight="normal" font-style="normal">10</text>
<text transform="translate(536.0,260.5) scale(0.88,1)" font-size="10.5" text-anchor="end" fill="#3a4452" stroke="#3a4452" stroke-width="0.28" font-weight="normal" font-style="normal">5</text>
<text transform="translate(622.0,331.0) scale(0.87,1)" font-size="10.5" text-anchor="middle" fill="#3a4452" stroke="#3a4452" stroke-width="0.28" font-weight="normal" font-style="normal">11 Thu 03:33</text>
<text transform="translate(720.1,331.0) scale(0.87,1)" font-size="10.5" text-anchor="middle" fill="#3a4452" stroke="#3a4452" stroke-width="0.28" font-weight="normal" font-style="normal">11 Thu 17:26</text>
<text transform="translate(819.0,331.0) scale(0.87,1)" font-size="10.5" text-anchor="middle" fill="#3a4452" stroke="#3a4452" stroke-width="0.28" font-weight="normal" font-style="normal">12 Fri 07:20</text>
<text transform="translate(917.5,331.0) scale(0.87,1)" font-size="10.5" text-anchor="middle" fill="#3a4452" stroke="#3a4452" stroke-width="0.28" font-weight="normal" font-style="normal">12 Fri 21:13</text>
<text transform="translate(510.4,351.9) scale(0.87,1)" font-size="12.2" text-anchor="start" fill="#3a4452" stroke="#3a4452" stroke-width="0.28" font-weight="normal" font-style="normal">Displacement (µm RMS)</text>
<text transform="translate(956.3,351.9) scale(0.87,1)" font-size="12.2" text-anchor="end" fill="#3a4452" stroke="#3a4452" stroke-width="0.28" font-weight="normal" font-style="normal">Date/Time</text>
<path d="M538.3 320 539.5 146 540 127 540.3 133.2 540.6 132.4 540.9 132.4 541.2 136.7 541.5 128.2 541.8 133.9 542.1 133.1 542.4 133.9 542.7 134.5 543 136.4 543.3 137 543.6 138.5 543.9 142.9 544.2 142.3 544.5 134 544.8 136.3 545.1 142.6 545.4 138 545.7 137.6 546 136.8 546.3 142.1 546.6 139.4 546.9 139.4 547.5 139.9 547.8 141.1 548.1 140 548.7 130.1 549 140.7 549.3 141.9 549.6 141.1 549.9 143.7 550.2 142.9 550.8 146.8 551.1 146 551.4 149.2 551.7 147.2 552 149.3 552.3 146.7 552.6 153.9 552.9 150.8 553.2 148.8 553.8 155.8 554.1 158.2 554.4 148 554.7 154.8 555 156.5 555.3 155.1 555.6 149.1 555.9 157.3 556.2 157.5 556.5 159.6 557.1 152.2 557.4 159.4 557.7 159.4 558 154.2 558.3 156 558.6 149.3 558.9 150.6 559.2 150.1 559.8 155.2 560.1 151.2 560.4 151.5 560.7 150.8 561 154.6 561.3 143.4 561.6 150.5 561.9 146.6 562.2 146.3 562.5 148.8 562.8 143.1 563.1 145.1 563.4 149.5 563.7 146.3 564 147.4 564.3 145.7 564.6 147.6 564.9 152.7 565.2 151.2 565.5 152.9 565.8 147 566.1 148.2 566.4 146.2 567 150.4 567.3 151.1 567.6 148.2 567.9 150.2 568.2 143.3 568.5 152.4 568.8 151.3 569.1 148.5 569.4 151 569.7 149.2 570 149.7 570.3 150.6 570.6 148.9 570.9 159.7 571.2 152.2 571.5 154.2 571.8 149.9 572.1 153.5 572.4 153.1 572.7 154.4 573 154.8 573.3 153.5 573.6 158.4 573.9 161.1 574.2 155.5 574.5 152.6 574.8 159.5 575.1 155.9 575.4 157.8 575.7 156.3 576 162.4 576.3 163.1 576.6 167.5 576.9 165.1 577.2 160.7 577.5 164.2 577.8 160.6 578.4 162.1 579.3 168.3 579.6 163.5 579.9 171.3 580.2 168.7 580.5 164.6 580.8 166.7 581.1 163.7 581.4 171.5 582 165.2 582.3 168.5 582.6 168.8 582.9 166.5 583.2 161.9 583.5 168.7 583.8 165.7 584.1 168.2 584.4 165.8 584.7 171.2 585 169.6 585.3 168.9 585.6 167 585.9 168.5 586.5 174.3 586.8 171.2 587.1 173.7 587.4 169.8 587.7 173.6 588 168.5 588.3 170.9 589 320 590 281.6 590.6 310.4 591.5 288.8 592.5 292.4 707.8 297.2 708.3 320 709 132.9 709.3 132.3 709.6 137.2 709.9 131.9 710.2 131.3 710.5 131.4 710.8 126.5 711.1 129.2 711.4 128.5 711.7 130.9 712 127.7 712.3 132.1 712.6 128.7 712.9 123 713.5 136.1 713.8 132 714.1 130.8 714.4 127.7 714.7 135.5 715 130.2 715.6 134.1 715.9 130.4 716.2 133.4 716.5 130.3 717.1 137.9 717.4 133.1 717.7 140.2 718 136.2 718.3 140 718.6 139.3 718.9 132.1 719.2 138.8 719.5 135.9 720.1 137.5 720.4 140 720.7 144.1 721 142.3 721.3 142 721.6 139.3 721.9 144.5 722.2 136.4 722.5 138.3 722.8 139.2 723.1 138.5 723.4 139.7 723.7 147.9 724 138.1 724.3 147.4 724.6 144.7 724.9 146.4 725.2 144.4 725.5 149.8 726.1 144.5 726.4 144.8 726.7 144.8 727 145.1 727.3 143.9 727.6 143.4 727.9 145 728.2 148.4 728.5 153.4 728.8 150.1 729.1 153.8 729.4 153.7 729.7 148.8 730 153.8 730.3 151.8 730.6 154.4 730.9 149.6 731.2 148.5 731.5 155.2 731.8 154.4 732.4 158.1 732.7 153.2 733 159 733.3 154 733.6 160.5 733.9 150.5 734.2 155.7 734.5 153.9 734.8 157.4 735.1 155 735.4 159.3 735.7 159.6 736 160.4 736.3 159.7 736.6 159.9 736.9 152.7 737.2 161 737.5 161.3 737.8 160.3 738.1 158.6 738.4 161.8 738.7 159.2 739 159.5 739.3 155.3 739.6 161.3 739.9 161 740.2 157.8 740.5 161.9 740.8 161.9 741.1 159.4 741.4 165.2 741.7 160.4 742 160.2 742.3 164.4 742.9 169 743.2 167.3 743.5 169.8 743.8 161.4 744.1 163.8 744.4 161.5 744.7 165.5 745 164.6 745.3 165.3 745.6 167.5 745.9 164.3 746.8 166.5 747.1 165.5 747.4 168.4 747.7 168.9 748 169.2 748.3 168.9 748.6 164.2 748.9 166 749.2 164.6 749.5 166.4 749.8 164.2 750.1 163.8 750.7 169.4 751 165.3 751.6 171.1 751.9 165.7 752.2 164.3 752.5 171.6 753.1 164.3 753.4 171.1 753.7 170 754.3 166.1 754.6 162.1 754.9 166.4 755.2 163.1 755.5 165.8 756.1 166.9 756.4 167.7 756.7 162.7 757 168.1 757.3 161.8 757.6 162.4 757.9 164.2 758.2 159.5 758.5 162.3 759.1 158.6 759.4 160.1 760 153.2 760.3 164 760.6 159.2 760.9 159 761.2 159.7 761.5 154.7 761.8 161.2 762.1 155.8 762.4 163.2 762.7 160.4 763 160.4 763.3 160.1 763.6 162.8 763.9 161.1 764.2 166.2 764.5 163.7 764.8 163.1 765.1 162.1 765.4 156.3 765.7 162.7 766 161.1 766.3 160.5 766.6 163.7 766.9 164.8 767.2 162.8 767.5 166.7 767.8 163.2 768.1 166.8 768.4 162.8 768.7 170.1 769.3 163.2 769.6 165.7 769.9 169.5 770.2 165.2 770.5 167.6 770.8 168.4 771.1 168.2 771.4 165.5 771.7 164.7 772.3 158.3 772.6 168.3 772.9 170.3 773.2 165.6 773.5 165.7 773.8 165.1 774.1 166.1 774.4 158.2 774.7 159.9 775 164.6 775.3 166.8 775.6 164.8 775.9 161.8 776.2 161.4 776.5 162.3 776.8 159.3 777.1 162.7 777.4 160.2 777.7 165.8 778 165.9 778.3 162.1 778.6 163.6 778.9 167.8 779.2 164.3 779.5 167.7 779.8 168.6 780.4 165.8 780.7 161.3 781 160.9 781.3 159.9 781.6 165.1 781.9 161 782.5 165.4 782.8 165.1 783.1 169.2 783.4 163.7 783.7 164.9 784 168.4 784.3 166.5 784.6 161.6 785.2 166.2 785.5 160.4 785.8 166.3 786.1 161.3 786.4 161.4 786.7 173.1 787 172.1 787.6 169.5 788.2 173.3 788.5 166.3 788.8 174.5 789.1 168.9 789.4 171.7 789.7 168.1 790 166.3 790.3 169.3 790.6 167.7 790.9 173.8 791.2 165 791.5 166.1 792.1 175.9 792.4 171 792.7 172.7 793 171.9 793.3 169.8 793.6 177.5 793.9 177.4 794.2 175.4 794.5 176.9 794.8 177.9 795.1 177.5 795.4 176 795.7 175.5 796 174.4 796.3 171.5 796.6 170.4 796.9 178.1 797.2 176.6 797.5 177.6 797.8 174 798.1 172.8 798.4 173.3 798.7 175.8 799.5 320 800.5 281.6 801.2 309.2 802.5 290 904.4 293.6 904.8 317.6 905.6 170 906 134.1 906.3 133.2 906.6 131.9 906.9 135.2 907.2 135.3 907.5 136.9 907.8 130.2 908.1 135.7 908.4 135.5 909 141 909.3 137.4 909.6 146.7 909.9 140.1 910.2 144.2 910.5 138.3 910.8 144.4 911.1 145.3 911.4 143.7 911.7 142.6 912 147.8 912.3 148.3 912.6 150.8 912.9 150.9 913.2 150 913.5 147.4 913.8 147.8 914.1 152.5 914.4 154.8 914.7 152.8 915 153.4 915.3 159.7 915.6 159.2 915.9 160.6 916.2 159.1 916.5 158.9 916.8 162.8 917.1 158.1 917.4 161.5 918 156.5 918.3 164.8 918.9 158 919.2 162.8 919.5 162 919.8 161.5 920.1 157.4 920.4 162.9 920.7 155.5 921 157.8 921.3 154.6 921.6 156.8 921.9 155.9 922.2 153.6 922.5 154.9 922.8 150.8 923.1 151.7 923.4 156.9 923.7 153 924 157.7 924.3 155.3 924.6 155.1 924.9 150.4 925.2 155.3 925.5 150.1 925.8 158.7 926.1 153.3 926.4 152.4 926.7 159.3 927 156.3 927.3 161.4 927.6 155.2 927.9 155.2 928.2 159.3 928.5 160 928.8 160.2 929.1 158.3 929.4 158.1 929.7 164.1 930 160.7 930.3 162.3 930.6 157.6 930.9 160.1 931.2 159.3 931.5 165.2 931.8 155 932.1 165.6 932.4 165.9 932.7 168.4 933 164.4 933.3 164.8 933.6 162.5 933.9 165.7 934.2 163.1 934.5 165.8 935.4 161.3 935.7 170.3 936 166.4 936.3 166.7 936.6 164 936.9 163.8 937.2 168.4 937.5 167.4 938.1 163.7 938.4 170.1 938.7 163.7 939 169 939.3 168.9 939.6 167.6 939.9 164 940.2 161.8 940.5 164.9 940.8 164.2 941.1 160.9 941.4 159.6 941.7 165.9 942 161.9 942.6 166.9 942.9 165.5 943.2 163 943.5 164.1 943.8 161.9 944.1 165.2 944.4 159.2 944.7 165.1 945 159 945.3 162.9 945.6 165.2 945.9 162.6 946.2 164.5 946.5 164.1 946.8 165.2 947.1 168 947.4 169.6 947.7 166 948 170.3 948.3 165.7 948.6 171.3 948.9 163.4 949.2 168.7 949.5 166.8 949.8 170.9 950.4 166.5 951 170 951.3 169.1 951.6 170.4 951.9 171 952.2 167.6 952.5 170.7 953 316.4 953.8 279.2 954.3 298.4 954.6 288.8" stroke="#40579a" stroke-width="1.2" fill="none" stroke-linejoin="round"/>
<g stroke="#c0c3c7" stroke-width="1" stroke-dasharray="2 5" fill="none"><path d="M538.3 369.3 H954.6"/><path d="M538.3 425.0 H954.6"/><path d="M538.3 480.6 H954.6"/><path d="M538.3 536.3 H954.6"/><path d="M622.0 369.3 V570.2"/><path d="M720.1 369.3 V570.2"/><path d="M819.0 369.3 V570.2"/><path d="M917.5 369.3 V570.2"/></g>
<path d="M538.3 369.3 V570.2 H954.6" stroke="#b9c0c7" stroke-width="1.2" fill="none"/>
<text transform="translate(536.0,369.8) scale(0.88,1)" font-size="10.5" text-anchor="end" fill="#3a4452" stroke="#3a4452" stroke-width="0.28" font-weight="normal" font-style="normal">0</text>
<text transform="translate(536.0,425.5) scale(0.88,1)" font-size="10.5" text-anchor="end" fill="#3a4452" stroke="#3a4452" stroke-width="0.28" font-weight="normal" font-style="normal">100</text>
<text transform="translate(536.0,481.2) scale(0.88,1)" font-size="10.5" text-anchor="end" fill="#3a4452" stroke="#3a4452" stroke-width="0.28" font-weight="normal" font-style="normal">200</text>
<text transform="translate(536.0,536.8) scale(0.88,1)" font-size="10.5" text-anchor="end" fill="#3a4452" stroke="#3a4452" stroke-width="0.28" font-weight="normal" font-style="normal">300</text>
<text transform="translate(622.0,580.8) scale(0.87,1)" font-size="10.5" text-anchor="middle" fill="#3a4452" stroke="#3a4452" stroke-width="0.28" font-weight="normal" font-style="normal">11 Thu 03:33</text>
<text transform="translate(720.1,580.8) scale(0.87,1)" font-size="10.5" text-anchor="middle" fill="#3a4452" stroke="#3a4452" stroke-width="0.28" font-weight="normal" font-style="normal">11 Thu 17:26</text>
<text transform="translate(819.0,580.8) scale(0.87,1)" font-size="10.5" text-anchor="middle" fill="#3a4452" stroke="#3a4452" stroke-width="0.28" font-weight="normal" font-style="normal">12 Fri 07:20</text>
<text transform="translate(917.5,580.8) scale(0.87,1)" font-size="10.5" text-anchor="middle" fill="#3a4452" stroke="#3a4452" stroke-width="0.28" font-weight="normal" font-style="normal">12 Fri 21:13</text>
<text transform="translate(510.4,602.4) scale(0.87,1)" font-size="12.2" text-anchor="start" fill="#3a4452" stroke="#3a4452" stroke-width="0.28" font-weight="normal" font-style="normal">Angle (°)</text>
<text transform="translate(956.3,602.4) scale(0.87,1)" font-size="12.2" text-anchor="end" fill="#3a4452" stroke="#3a4452" stroke-width="0.28" font-weight="normal" font-style="normal">Date/Time</text>
<path d="M538.5 553 538.8 430.5 539.5 502.9 540 502.3 540.3 502.7 540.6 502.6 540.9 501.3 541.2 501.2 541.5 501.9 541.8 501.4 542.1 500.4 542.4 500.7 543 500.2 543.3 500.3 543.6 499.8 543.9 500 544.2 498.5 544.5 499.1 544.8 498.2 545.1 497.8 545.4 497.8 545.7 498.7 546 497.8 546.3 498.9 546.6 498.4 546.9 497.5 547.2 498.4 547.5 497.7 547.8 498.4 548.1 498.1 548.4 498.4 548.7 497.2 549 497.8 549.3 497.1 549.9 497.6 550.2 499 550.5 497 550.8 497.5 551.1 497.8 551.4 496.8 551.7 498.1 552 498 552.3 498.1 552.9 498 553.2 497.3 553.5 498.1 553.8 497 554.1 496.5 554.4 497.7 554.7 496.7 555 496.8 555.3 497.3 555.6 496.3 555.9 497.5 556.2 497.6 556.5 497.4 556.8 498.4 557.1 498.3 557.4 497.4 558 496.8 558.3 496.9 558.6 498.2 558.9 497.2 559.2 497.1 559.5 497.4 559.8 497.3 560.1 497.4 560.4 496.7 560.7 496.3 561 497.5 561.3 498.2 561.6 496.3 561.9 497.3 562.2 496.9 562.5 496.3 562.8 497.6 563.1 497 563.7 496.6 564 495.8 564.3 497.5 564.6 496.9 564.9 497.9 565.2 497 565.5 496.6 565.8 495.7 566.4 497.1 566.7 495.9 567.3 497.6 567.6 496.6 567.9 496.2 568.2 496.1 568.5 496.3 568.8 497.2 569.1 496.4 569.4 496.2 569.7 496.4 570 496 570.3 495.9 570.6 495.9 570.9 497.1 571.2 497.4 571.5 495.8 571.8 496 572.1 495.3 572.4 496.6 573 496.6 573.3 496.1 573.6 496.8 573.9 496.3 574.5 496.4 574.8 496.1 575.1 496.1 575.4 496.7 575.7 496.1 576 497.3 576.6 497 576.9 495.9 577.2 496.3 577.5 495.5 577.8 496.8 578.1 496 578.4 495.5 578.7 496.6 579.3 496.9 579.6 497 579.9 496.6 580.2 495.7 580.5 496.8 580.8 496.7 581.1 497.2 581.4 495.2 581.7 496.9 582 496.2 582.6 496.9 582.9 496.6 583.2 496.8 583.5 495.7 583.8 496.5 584.1 496.8 584.4 496.5 584.7 495.8 585 495.7 585.3 495.4 585.6 496.1 585.9 495.2 586.2 496.4 586.5 495.4 587.1 496.8 587.4 495.7 587.7 495.4 588 495.9 588.3 496 589 413.8 589.6 541.8 590.2 489 590.8 530.7 592 504 707.8 480.6 708.2 425 708.6 546.3 709.2 502.9 709.5 502.2 709.8 502.9 710.1 502.9 710.4 502.4 710.7 501.4 711 501.2 711.3 501.1 711.6 500.5 711.9 501.2 712.2 500.4 712.5 500.7 712.8 501.2 713.1 500 713.4 500.8 714 498.6 714.3 498.5 714.6 498.8 714.9 498.5 715.2 498.7 715.5 497.8 715.8 498.8 716.1 498.5 716.4 497.8 716.7 497.7 717 498.2 717.6 497.5 717.9 498.6 718.2 498.5 718.5 498.1 718.8 498.3 719.1 498 719.4 498.3 719.7 498.1 720 498.6 720.3 498.8 720.6 498.2 720.9 498.9 721.2 498.3 721.5 499 722.1 497.8 722.4 498.4 722.7 497.4 723 498.4 723.3 498.3 723.6 498.3 723.9 498 724.2 497.3 724.5 497 724.8 497.7 725.4 496.8 726 498.3 726.3 496.3 726.6 497.1 726.9 496.6 727.2 499 727.5 496.4 727.8 497 728.1 496.8 728.4 497.7 728.7 497.6 729 496.8 729.3 496.7 729.6 496.8 729.9 496.5 730.2 497.9 730.5 497 730.8 497.1 731.1 495.8 731.4 496.8 731.7 496.3 732 496.3 732.3 495.2 732.6 496.7 732.9 497.4 733.2 495.4 733.5 495.8 733.8 497.5 734.1 496.6 734.4 497.1 734.7 495.8 735 496.3 735.3 497.2 735.6 497.1 735.9 496.9 736.2 496.4 736.8 496.5 737.1 497.3 737.4 497 737.7 496.9 738 496.6 738.3 497.2 738.6 497.6 738.9 497.2 739.2 496.5 739.5 497 739.8 498.1 740.1 497.7 740.4 496.5 740.7 496.6 741 495.7 741.6 496.3 741.9 496.4 742.2 496.6 742.5 495.8 742.8 495.8 743.1 495.6 743.4 495.8 743.7 497.3 744 496.4 744.3 496.9 744.9 495.3 745.5 496.3 745.8 496.4 746.1 495.4 746.4 496.9 746.7 496 747 496.8 747.3 497.3 747.6 496.4 747.9 495.8 748.2 497.8 748.5 496.8 748.8 496.6 749.4 496.5 749.7 496 750 496.5 750.3 497.1 750.6 496.9 750.9 496.3 751.2 495 751.5 496.6 751.8 496.2 752.1 496.6 752.4 495.8 752.7 496.5 753 496.2 753.6 497.4 753.9 497 754.2 497.1 754.5 496.7 754.8 495.7 755.1 496.4 755.4 495.7 756 497.1 756.3 496.4 756.6 496.4 756.9 496.7 757.2 496.6 757.5 497.5 757.8 496.3 758.4 495.6 758.7 495.1 759 496.1 759.3 495.6 759.6 495.9 759.9 496 760.2 495.6 760.5 495.9 760.8 496.8 761.1 496.4 761.4 496.5 761.7 496 762 496.6 762.3 495.7 762.6 495.9 763.2 494.9 763.5 496.7 763.8 496.4 764.1 495.8 764.4 495.7 764.7 496 765 496.6 765.3 496.1 765.9 495.7 766.2 496.3 766.5 496.4 766.8 496.9 767.1 496 767.4 495.7 767.7 497.1 768 496.1 768.3 496.3 768.6 496.6 768.9 496.1 769.2 497.4 769.5 496.2 769.8 495.8 770.1 497.7 770.4 496.7 770.7 496.1 771 496.3 771.3 497.1 771.9 496 772.2 497.5 772.5 496.5 772.8 495.9 773.1 496.9 773.4 497.4 773.7 496.5 774 496.6 774.3 497.1 774.6 496.4 774.9 496.1 775.2 496.1 775.5 497 775.8 496 776.1 496.4 776.4 496.6 776.7 495.6 777.3 496.1 777.9 497.1 778.2 496.7 778.5 497.2 778.8 495.7 779.1 496.7 779.4 495.9 779.7 495.5 780 496.3 780.3 496.5 780.6 495.9 780.9 496.4 781.5 495 781.8 496.1 782.1 495.2 782.4 495.7 782.7 496.6 783 496.5 783.6 495.4 783.9 495.9 784.2 496.9 784.5 495.1 784.8 496.4 785.4 495.5 785.7 495.7 786 495.5 786.3 496.2 786.6 495.3 786.9 497.2 787.5 496.6 787.8 495.7 788.1 496 788.4 496.5 788.7 496.2 789 496.4 789.3 496.1 789.9 495.8 790.2 495.8 790.5 496.4 790.8 495.9 791.1 496 791.7 496.5 792 495.2 792.3 497.1 792.6 496.3 792.9 496 793.2 496.5 793.5 495.7 793.8 496 794.1 496.5 794.4 495.9 794.7 496.3 795 496.2 795.3 495.4 795.6 496.7 795.9 496.5 796.2 497.1 796.5 496.3 796.8 496.7 797.1 495.4 797.7 497.2 798 495.3 798.3 495.7 799 391.6 799.6 550.2 800.5 489 801 525.1 802.3 504.6 904.6 487.9 905 380.4 905.5 558.5 906.5 501.8 907 502 907.3 501.4 907.6 501.4 907.9 500.1 908.2 501 908.5 500 909.1 499.3 909.4 498.5 909.7 500.4 910 499.5 910.6 499.5 910.9 499 911.2 497.9 911.5 497.7 911.8 498.4 912.1 498.6 912.4 498.1 912.7 497.2 913 497.4 913.3 497.1 913.6 498.4 913.9 497.2 914.2 498.1 914.5 497.8 914.8 498.2 915.1 497.3 915.7 497.2 916 497.7 916.6 496.8 916.9 498.4 917.2 496.9 917.5 498.7 917.8 497.5 918.1 497.8 918.4 497.9 918.7 497.4 919 497.1 919.3 497.8 919.6 498 919.9 498 920.2 497.9 920.5 498.3 921.1 497.1 921.4 496.8 921.7 497 922 497 922.3 497.4 922.6 496.9 922.9 498.2 923.2 497.4 923.5 497.1 923.8 496.9 924.1 497.5 924.4 496.7 924.7 496.5 925 496.9 925.3 496.8 926.2 497.9 926.5 497.6 926.8 497 927.1 498 927.4 497.1 927.7 497.2 928 496.8 928.3 496.9 928.6 497.7 929.2 496.5 929.5 496.5 929.8 498.1 930.1 498 930.4 496.9 930.7 496.8 931 497 931.3 497.1 931.6 496.7 931.9 496.8 932.2 497.1 932.5 497 932.8 496.5 933.1 497.4 933.4 496.6 933.7 497.6 934 496.4 934.3 497.4 934.6 497.3 934.9 496.7 935.2 497.5 935.5 497.4 935.8 498.7 936.1 497 936.4 498.3 936.7 496.7 937 497.6 937.3 497.2 937.6 497.2 938.2 497 938.5 497 938.8 496.5 939.1 496.9 939.4 496.6 939.7 497.6 940 496.9 940.3 497.2 940.6 496 940.9 496.3 941.2 496.1 941.8 496.6 942.4 496.9 942.7 496.4 943 495.5 943.3 495.9 943.6 495.9 944.2 495.9 944.5 496.8 944.8 494.9 945.1 496.5 945.4 496.9 945.7 495.7 946 495.8 946.3 495.7 946.6 495.5 946.9 495.6 947.2 495.3 947.5 496.5 947.8 496.3 948.1 495.7 948.7 496.6 949 495.8 949.3 495.3 949.6 495.8 950.2 496 950.5 495.9 950.8 496.1 951.1 496.6 951.4 495.9 951.7 497 952 495.7 952.3 496.4 953 438.9 953.5 536.3 954.2 491.8 954.6 514" stroke="#40579a" stroke-width="1.2" fill="none" stroke-linejoin="round"/>
<rect x="1265.6" y="128.7" width="338.8" height="5.5" fill="#4a8fd6"/>
<rect x="1265.6" y="122" width="13" height="17.6" rx="2" fill="#4a8fd6"/>
<rect x="1579" y="122" width="25.4" height="17.6" rx="2" fill="#4a8fd6"/>
<text transform="translate(1272.1,134.8) scale(0.9,1)" font-size="11" text-anchor="middle" fill="#fff" stroke="#fff" stroke-width="0.28" font-weight="normal" font-style="normal">0</text>
<text transform="translate(1591.7,134.8) scale(0.9,1)" font-size="11" text-anchor="middle" fill="#fff" stroke="#fff" stroke-width="0.28" font-weight="normal" font-style="normal">250</text>
<rect x="1270.8000000000002" y="135.9" width="1.3" height="5.6" fill="#9aa4a4"/>
<text transform="translate(1271.4,154.5) scale(0.9,1)" font-size="11" text-anchor="middle" fill="#9ba5a5" stroke="#9ba5a5" stroke-width="0.28" font-weight="normal" font-style="normal">0</text>
<rect x="1350.8000000000002" y="135.9" width="1.3" height="5.6" fill="#9aa4a4"/>
<text transform="translate(1351.4,154.5) scale(0.9,1)" font-size="11" text-anchor="middle" fill="#9ba5a5" stroke="#9ba5a5" stroke-width="0.28" font-weight="normal" font-style="normal">63</text>
<rect x="1430.8000000000002" y="135.9" width="1.3" height="5.6" fill="#9aa4a4"/>
<text transform="translate(1431.4,154.5) scale(0.9,1)" font-size="11" text-anchor="middle" fill="#9ba5a5" stroke="#9ba5a5" stroke-width="0.28" font-weight="normal" font-style="normal">125</text>
<rect x="1511.1000000000001" y="135.9" width="1.3" height="5.6" fill="#9aa4a4"/>
<text transform="translate(1511.7,154.5) scale(0.9,1)" font-size="11" text-anchor="middle" fill="#9ba5a5" stroke="#9ba5a5" stroke-width="0.28" font-weight="normal" font-style="normal">188</text>
<rect x="1591.4" y="135.9" width="1.3" height="5.6" fill="#9aa4a4"/>
<text transform="translate(1592.0,154.5) scale(0.9,1)" font-size="11" text-anchor="middle" fill="#9ba5a5" stroke="#9ba5a5" stroke-width="0.28" font-weight="normal" font-style="normal">250</text>
<text transform="translate(1868.3,203.8) scale(0.9,1)" font-size="10.5" text-anchor="middle" fill="#9ba5a5" stroke="#9ba5a5" stroke-width="0.28" font-weight="normal" font-style="normal">Time</text>
<path d="M1864.3 208.6 L1872.3 208.6 L1868.3 213.9 Z" fill="#a6a9ad"/>
<rect x="1867.6" y="212" width="1.4" height="280" fill="#a6a9ad"/>
<rect x="1861.8" y="217.8" width="10.5" height="7.9" rx="1" fill="#4a8fd6"/>
<rect x="1861.8" y="226.9" width="10.5" height="7.9" rx="1" fill="#4a8fd6"/>
<rect x="1861.8" y="235.9" width="10.5" height="7.9" rx="1" fill="#4a8fd6"/>
<rect x="1861.8" y="245.0" width="10.5" height="7.9" rx="1" fill="#4a8fd6"/>
<rect x="1861.8" y="254.0" width="10.5" height="7.9" rx="1" fill="#4a8fd6"/>
<rect x="1861.8" y="263.1" width="10.5" height="7.9" rx="1" fill="#4a8fd6"/>
<rect x="1861.8" y="272.1" width="10.5" height="7.9" rx="1" fill="#4a8fd6"/>
<rect x="1861.8" y="281.2" width="10.5" height="7.9" rx="1" fill="#4a8fd6"/>
<rect x="1861.8" y="290.2" width="10.5" height="7.9" rx="1" fill="#4a8fd6"/>
<rect x="1861.8" y="299.3" width="10.5" height="7.9" rx="1" fill="#4a8fd6"/>
<rect x="1861.8" y="308.4" width="10.5" height="7.9" rx="1" fill="#4a8fd6"/>
<rect x="1861.8" y="317.4" width="10.5" height="7.9" rx="1" fill="#4a8fd6"/>
<rect x="1861.8" y="326.5" width="10.5" height="7.9" rx="1" fill="#4a8fd6"/>
<rect x="1861.8" y="335.5" width="10.5" height="7.9" rx="1" fill="#4a8fd6"/>
<rect x="1861.8" y="344.6" width="10.5" height="7.9" rx="1" fill="#4a8fd6"/>
<rect x="1861.8" y="353.6" width="10.5" height="7.9" rx="1" fill="#4a8fd6"/>
<rect x="1861.8" y="362.7" width="10.5" height="7.9" rx="1" fill="#4a8fd6"/>
<rect x="1861.8" y="371.7" width="10.5" height="7.9" rx="1" fill="#4a8fd6"/>
<rect x="1861.8" y="380.8" width="10.5" height="7.9" rx="1" fill="#4a8fd6"/>
<rect x="1861.8" y="389.8" width="10.5" height="7.9" rx="1" fill="#4a8fd6"/>
<rect x="1861.8" y="398.9" width="10.5" height="7.9" rx="1" fill="#4a8fd6"/>
<rect x="1861.8" y="408.0" width="10.5" height="7.9" rx="1" fill="#4a8fd6"/>
<rect x="1861.8" y="417.0" width="10.5" height="7.9" rx="1" fill="#4a8fd6"/>
<rect x="1861.8" y="426.1" width="10.5" height="7.9" rx="1" fill="#4a8fd6"/>
<rect x="1861.8" y="435.1" width="10.5" height="7.9" rx="1" fill="#4a8fd6"/>
<rect x="1861.8" y="444.2" width="10.5" height="7.9" rx="1" fill="#4a8fd6"/>
<rect x="1861.8" y="453.2" width="10.5" height="7.9" rx="1" fill="#4a8fd6"/>
<rect x="1861.8" y="462.3" width="10.5" height="7.9" rx="1" fill="#4a8fd6"/>
<rect x="1861.8" y="471.3" width="10.5" height="7.9" rx="1" fill="#4a8fd6"/>
<rect x="1861.8" y="480.4" width="10.5" height="7.9" rx="1" fill="#4a8fd6"/>
<path d="M1864.8 489.5 L1871.8 489.5 L1868.3 494 Z" fill="#a6a9ad"/>
<g stroke="#aab6b6" stroke-width="1" fill="none">
<path d="M1358.3 380 V186 L1704.3 238.3 V430.7"/>
</g>
<text transform="translate(1637.0,228.4) scale(0.9,1)" font-size="12" text-anchor="middle" fill="#3a4452" stroke="#3a4452" stroke-width="0.28" font-weight="normal" font-style="italic">Displacement (µm RMS)</text>
<text transform="translate(1709.0,264.0) scale(0.9,1)" font-size="11" text-anchor="start" fill="#3a4452" stroke="#3a4452" stroke-width="0.28" font-weight="normal" font-style="normal">10</text>
<text transform="translate(1709.0,353.5) scale(0.9,1)" font-size="11" text-anchor="start" fill="#3a4452" stroke="#3a4452" stroke-width="0.28" font-weight="normal" font-style="normal">5</text>
<text transform="translate(1709.0,443.0) scale(0.9,1)" font-size="11" text-anchor="start" fill="#3a4452" stroke="#3a4452" stroke-width="0.28" font-weight="normal" font-style="normal">0</text>
<text transform="translate(1157.0,484.0) scale(0.9,1)" font-size="11" text-anchor="middle" fill="#3a4452" stroke="#3a4452" stroke-width="0.28" font-weight="normal" font-style="normal">0</text>
<text transform="translate(1229.0,495.0) scale(0.9,1)" font-size="11" text-anchor="middle" fill="#3a4452" stroke="#3a4452" stroke-width="0.28" font-weight="normal" font-style="normal">50</text>
<text transform="translate(1301.0,506.0) scale(0.9,1)" font-size="11" text-anchor="middle" fill="#3a4452" stroke="#3a4452" stroke-width="0.28" font-weight="normal" font-style="normal">100</text>
<text transform="translate(1371.0,516.5) scale(0.9,1)" font-size="11" text-anchor="middle" fill="#3a4452" stroke="#3a4452" stroke-width="0.28" font-weight="normal" font-style="normal">150</text>
<text transform="translate(1440.0,527.0) scale(0.9,1)" font-size="11" text-anchor="middle" fill="#3a4452" stroke="#3a4452" stroke-width="0.28" font-weight="normal" font-style="normal">200</text>
<text transform="translate(1509.0,537.5) scale(0.9,1)" font-size="11" text-anchor="middle" fill="#3a4452" stroke="#3a4452" stroke-width="0.28" font-weight="normal" font-style="normal">250</text>
<text transform="translate(1474.0,559.4) scale(0.9,1)" font-size="12" text-anchor="middle" fill="#3a4452" stroke="#3a4452" stroke-width="0.28" font-weight="normal" font-style="italic">Freq. (Hz)</text>
<g stroke="#40579a" stroke-width="1.3" fill="#fff" stroke-linejoin="round">
<path d="M1358.4 377.3 1359.2 365.7 1359.6 373.6 1360 358.4 1360.4 365.6 1360.9 367.3 1361.3 367.1 1361.7 373.5 1362.1 368.3 1362.5 377.7 1362.9 376.7 1363.4 380.2 1363.8 380.3 1364.2 375.3 1365 380 1365.4 375.5 1365.8 377.7 1366.7 377.1 1367.1 375.8 1367.5 376.5 1367.9 372.4 1368.3 378.9 1368.8 376.3 1369.2 377.9 1369.6 377.3 1370 374.5 1371.3 377.5 1371.7 377.7 1372.1 375.6 1372.5 375.8 1372.9 379.1 1373.3 378.2 1373.8 381.1 1374.6 380.9 1375.4 377.4 1376.2 378.7 1376.7 377.6 1377.5 382.6 1377.9 382.2 1378.3 382.7 1379.2 377.5 1379.6 377.3 1380 380.6 1380.4 378.3 1380.8 382 1381.7 378.2 1382.5 382.2 1382.9 382.5 1383.3 380.8 1383.7 382.6 1384.2 379.8 1386.2 383.4 1386.7 382.7 1387.5 382.9 1387.9 383.7 1389.1 381.7 1389.6 383.1 1390 381.8 1390.8 384.4 1391.6 383.2 1392.1 384.1 1392.5 382.5 1393.3 384.6 1394.1 384.5 1394.6 385 1395 383.6 1396.2 384.4 1396.6 382.9 1397.1 385 1397.5 384.9 1398.3 383.1 1398.7 383.3 1399.5 385.4 1400 385.5 1400.4 383.9 1400.8 386.1 1401.2 385.3 1401.6 385.3 1402.5 386.3 1402.9 385.7 1403.3 386.3 1406.6 386.4 1410.4 387.4 1410.8 386.7 1412 387.6 1412.9 387.5 1414.9 388.2 1415.4 387.9 1415.8 388.4 1416.2 387.9 1416.6 388.4 1417 388.1 1417.9 388.6 1418.7 388.4 1419.5 388.9 1419.9 388.5 1421.2 389.1 1421.6 388.8 1426.6 389.9 1427 389.6 1429.1 390.3 1430.3 389.9 1431.6 390.7 1432.4 390.2 1432.8 390.9 1433.7 391 1434.9 391 1435.3 390.6 1435.7 391.3 1436.2 391.1 1437.4 391.6 1442 392.3 1443.2 392 1444.1 392.5 1447 392.9 1447.4 392.6 1454.9 394.2 1455.3 393.8 1455.7 394.3 1458.2 394.6 1458.6 394.3 1459.9 394.9 1460.3 394.5 1461.5 395.1 1462.4 395.2 1462.8 394.7 1463.2 395.4 1464.5 395.2 1464.9 395.6 1465.7 395.4 1466.9 395.9 1467.8 395.7 1468.6 396.2 1470.3 396.1 1472.4 396.7 1473.6 396.9 1474 396.6 1474.9 397.1 1476.1 397 1476.5 397.3 1476.9 397.1 1477.3 397.4 1481.1 398 1482.8 398.3 1483.2 398 1483.6 398.4 1484 398.1 1485.3 398.6 1486.9 398.6 1493.6 399.9 1494.8 399.7 1495.2 400.1 1495.7 399.7 1498.1 400.6 1501.1 400.6 1502.3 401.1 1503.1 400.7 1504 401.4 1504.4 401.2 1511 402.3 1512.7 401.7 1514.8 398.6 1515.6 398.5 1516.5 399 1518.5 402.4 1520.6 403.7 1522.3 404.1 1522.7 403.8 1525.2 404.2 1526.6 403 1528.7 399.2 1529.4 399 1530.7 400.5 1532.1 403.9 1532.8 404.8 1534.2 405.6 1536.3 405.5 1537 406.2 1551.5 408.3 1552.2 408.1 1561.2 409.7 1564 409.9 1565.4 403.8 1566.8 410.4 1593.1 414.5 1594.5 414.3 1598 415.2 1600.8 415.4 1601.5 414.8 1602.9 409.2 1603.5 414.5 1604.2 416 1619.5 418.3 1620.2 417.4 1620.9 415.1 1621.6 417.4 1622.3 418.6 1623 418.9 1632 420.2 1632.7 419.9 1634.7 420.6 1636.1 420.5 1643.1 421.8 1645.2 421.8 1645.8 422.3 1648.6 422.4 1649.3 422.8 1652.8 422.9 1654.2 423.5 1656.2 423.5 1663.9 424.9 1666.6 424.9 1668.7 425.6 1670.8 426 1671.5 425.6 1672.2 426.1 1672.9 425.9 1677 426.6 1677.7 426.4 1678.4 421.9 1679.1 420.5 1679.8 426.2 1680.5 427.2 1704.8 430.9 1705.1 431.0 1358.4 380.0Z"/>
<path d="M1351.5 375.4 1351.9 377.3 1352.4 377.1 1352.8 375.6 1353.2 381.7 1353.6 380 1354 382.5 1355.7 369.1 1356.5 379.2 1356.9 380.1 1357.3 378.9 1358.2 364.9 1359 377.7 1359.4 377.5 1360.3 384.3 1360.7 383.6 1361.1 383.6 1361.9 376.9 1362.3 377.2 1362.8 382 1363.2 382.5 1364 378.3 1364.8 383 1365.7 384.7 1366.5 382.9 1366.9 383.4 1367.3 382.9 1367.7 383.4 1368.2 380.2 1369 381.1 1369.4 385.6 1369.8 383 1370.7 384.6 1371.9 380.6 1372.7 383.8 1373.6 382.3 1374 384.1 1374.4 383.5 1374.8 386.1 1375.7 383.4 1376.1 385.2 1376.5 385.2 1376.9 386.4 1377.7 384.9 1378.6 385.1 1379.4 386.8 1379.8 386.1 1380.6 386.9 1381.5 386.2 1381.9 386.7 1382.3 385.1 1382.7 387 1383.6 385.5 1384 387.3 1384.4 385.5 1386.1 388 1386.5 387.9 1386.9 386.7 1387.7 387.9 1388.1 387.4 1389 387.5 1391.9 388.9 1392.3 388.5 1393.1 388.8 1393.5 388.5 1394 388.9 1394.4 388.1 1394.8 389.2 1395.2 388.4 1396.9 389.5 1397.7 389 1398.1 389.7 1399.8 389.3 1400.2 389.8 1401 389.7 1402.3 390.4 1402.7 390.1 1403.1 390.5 1403.5 390 1405.6 390.9 1406.9 390.6 1407.7 391.1 1408.1 390.5 1408.5 391.1 1409.8 391.1 1411 390.5 1413.9 385.2 1417.3 391.4 1420.2 393 1422.7 392.7 1423.1 393.5 1426 393.4 1426.4 394 1427.7 394.2 1428.1 393.8 1430.6 394.2 1433.1 393 1433.9 392 1435.1 391.7 1435.6 391.2 1437.2 392.3 1439.7 395 1443 396.5 1443.9 396.2 1444.3 396.6 1446.8 397 1447.2 396.7 1447.6 397.1 1448.9 397 1449.3 397.4 1452.6 397.9 1453 397.5 1453.4 398 1454.7 397.7 1456.4 398.4 1457.2 398.2 1459.3 398.8 1459.7 398.5 1462.6 399.4 1463.9 399.3 1480.9 402.1 1483 401.9 1484.2 402.6 1485.5 402.4 1485.9 402.8 1486.3 402.4 1487.1 402.9 1488.8 402.9 1489.6 403.4 1490.5 403.4 1490.9 403 1491.3 403.6 1493 403.5 1494.2 404 1494.6 403.3 1495.1 398.3 1495.5 386.7 1495.9 387.1 1496.3 398.5 1496.7 403.8 1497.1 404.5 1498 404 1498.4 404.6 1499.2 404.3 1501.7 405.2 1502.1 404.8 1502.5 405.3 1503 405 1505 405.6 1510 406 1516.7 407.3 1517.9 407.1 1521.8 408.1 1523.2 408 1524.6 408.5 1525.3 408.2 1527.4 408.9 1529.4 408.9 1540.5 410.8 1542.6 410.7 1544 407.6 1544.7 410.7 1545.4 411.5 1547.5 411.9 1548.2 411.6 1550.2 412.2 1550.9 412.2 1552.3 411.1 1555.1 406.9 1556.5 408.2 1558.6 412.3 1559.3 413 1562.7 414.1 1566.2 414.3 1573.1 415.6 1574.5 414.9 1575.2 409 1575.9 408.8 1576.6 415.1 1577.3 416.2 1578.7 416.1 1587.7 417.8 1588.4 417.5 1589.8 418.1 1590.5 417.9 1595.3 418.9 1596 418.7 1598.1 419.3 1605.7 420.2 1609.9 421.1 1612 421 1612.7 421.4 1614 421.4 1622.4 422.9 1625.1 422.9 1628.6 423.8 1630.7 423.7 1631.4 424.2 1637.6 424.7 1639 425.2 1642.5 425.5 1644.6 426.2 1647.3 426.3 1657.7 428 1659.1 427.8 1659.8 428.4 1662.6 428.5 1665.4 429.2 1667.4 429 1673 430.3 1676.4 430.8 1679.2 430.8 1679.9 431.3 1686.8 432.3 1687.5 432.1 1688.9 432.7 1695.2 433.6 1697.9 433.6 1698.2 434.1 1351.5 383.1Z"/>
<path d="M1344.7 374 1345.1 372.9 1345.5 384.1 1345.9 379.1 1346.8 385.5 1347.2 379.5 1347.6 379 1348 379.6 1348.4 385.1 1348.8 381.6 1349.3 385.2 1349.7 385.4 1350.5 384.5 1350.9 386.9 1351.8 384.1 1352.2 378.8 1353 386 1353.4 385.6 1353.8 386.2 1354.2 382 1354.7 381 1355.1 387.3 1355.5 386.4 1355.9 387.2 1356.7 384.1 1357.2 385.3 1358 383.2 1358.8 386 1359.2 383.7 1359.7 388.1 1360.5 385.8 1361.3 388.4 1362.2 385 1362.6 386.2 1363 385.1 1363.4 388.4 1364.2 387.6 1365.5 383.7 1365.9 385.2 1366.3 384.3 1366.7 384.6 1367.1 387.5 1367.6 387.6 1368 385.6 1368.4 386.1 1368.8 384.1 1369.2 385.2 1369.6 385.3 1370.1 388.8 1370.5 387.9 1371.3 387.8 1371.7 389.1 1372.6 389.3 1373 388 1373.8 390.4 1374.2 388.5 1374.6 390.3 1375.1 390.5 1376.3 388.1 1377.1 390.1 1378 390.9 1378.4 389.1 1378.8 389.1 1379.2 391.2 1380 389.4 1380.5 391 1382.1 391.1 1382.5 391.5 1383 390.4 1383.8 389.8 1384.6 390.3 1385.5 391.8 1387.1 391.5 1387.5 392.1 1387.9 391.7 1388.4 392 1388.8 391.5 1390 392.4 1392.1 392.4 1392.5 393 1393.8 392.7 1394.6 393.1 1395 392.7 1396.7 393.6 1397.9 393 1398.8 393.9 1399.2 393 1400 394.1 1400.8 393.6 1401.7 394.4 1403.3 394.2 1404.2 394.6 1404.6 394.2 1405 394.9 1407.9 394.8 1408.3 395.4 1409.2 395 1410.8 395.5 1411.2 392.9 1411.7 366.7 1412.1 294.3 1412.5 280.8 1413.3 390.9 1413.7 396 1414.2 396.3 1415 396.1 1416.7 396.7 1417.9 396.3 1418.3 396.9 1419.6 396.6 1420.8 397.2 1427.9 397.8 1428.3 398.3 1428.7 398 1430.4 398.7 1433.3 399.1 1434.1 398.9 1435 399.3 1436.6 398.8 1438.7 395.2 1439.5 394.5 1440.4 395.1 1441.6 398.2 1442.9 400 1445.4 400.9 1447 400.8 1447.4 401.2 1453.7 401.8 1454.5 402.2 1455.3 402 1456.6 402.6 1462.4 403.1 1465.7 403.9 1466.2 403.6 1466.6 404 1467.4 403.7 1468.7 404.3 1469.9 404.2 1473.7 405.1 1474.1 404.7 1474.5 405.2 1475.3 405 1479.9 406 1480.3 405.6 1481.1 406.2 1485.7 406.7 1487 406.2 1487.4 405.1 1488.2 385.9 1489.5 404 1491.1 402.6 1492.8 403.1 1496.1 407.6 1498.2 408.6 1498.6 408.4 1501.5 409.2 1502.4 409 1505.3 409.8 1514.3 410.7 1515.7 411.3 1516.4 411 1518.4 411.7 1521.2 411.7 1522.6 412.2 1528.8 413.2 1529.5 412.9 1530.2 413.3 1531.6 413.2 1535.1 414.1 1535.8 413.8 1537.9 414.5 1541.3 414.6 1542.7 415.2 1549 415.8 1550.3 416.4 1551 416.4 1551.7 415.4 1552.4 410.7 1553.1 411 1553.8 416 1555.2 417 1559.4 417.6 1560.7 417.4 1566.3 418.7 1567 418.5 1569.8 419.2 1572.5 419.2 1573.2 419.7 1574.6 419.6 1582.9 421.2 1587.1 421.3 1587.8 421.8 1592.6 422.6 1593.3 422.4 1594.7 414.8 1595.4 420.9 1596.1 422.9 1596.8 423.1 1597.5 422.9 1605.1 424.4 1611.4 424.9 1613.4 425.6 1615.5 425.6 1616.9 426.2 1620.4 426.3 1621.1 426.8 1621.8 426.4 1624.5 427.3 1628.7 427.6 1631.5 428.3 1634.9 428.4 1635.6 428.9 1639.1 429.1 1639.8 429.5 1646 430.1 1648.1 430.8 1650.2 430.6 1654.4 431.6 1655 431.3 1659.2 432.4 1659.9 432.1 1666.1 433.4 1670.3 434 1671 433.8 1673.1 434.4 1691.1 436.9 1691.4 437.1 1344.7 386.1Z"/>
<path d="M1337.8 383.1 1338.7 379.2 1339.1 380.9 1339.5 378 1339.9 380.8 1340.3 376.4 1341.2 380.5 1341.6 388.1 1342.4 381.2 1343.2 382.9 1343.7 389.6 1344.1 389.5 1344.5 381.2 1344.9 379.8 1345.3 384.5 1345.7 384.6 1346.2 387.2 1346.6 386.9 1347 389.4 1347.4 386 1348.2 390.6 1349.1 385.5 1349.5 384.8 1350.3 390.2 1350.7 387.6 1351.6 390.8 1352 386.8 1352.8 388.1 1353.2 387.1 1354.1 388.2 1354.9 391.4 1355.3 390.5 1355.7 391.5 1356.1 389.8 1356.6 391.7 1357 387.9 1357.4 390.8 1357.8 389.4 1358.2 390.8 1359.1 386.8 1359.5 390.5 1360.3 392 1360.7 390.9 1361.1 392.3 1361.6 390.9 1362 390.7 1362.4 392 1363.2 390.8 1363.6 392.7 1364.1 389.4 1364.5 391.4 1365.7 393 1366.1 391.1 1366.5 393.2 1367.4 392 1368.2 393 1368.6 391.4 1369.5 393.6 1370.3 393 1370.7 393.7 1371.1 392.8 1372 392.9 1372.4 393.4 1373.2 393 1373.6 394.2 1374.5 393.1 1375.3 393.7 1375.7 394.6 1376.5 394.3 1376.9 394.9 1377.4 393.8 1377.8 394.3 1378.2 393.8 1378.6 392.7 1379 393.8 1379.4 393.8 1379.9 394.6 1380.3 394.4 1380.7 394.8 1381.5 394.1 1381.9 395.4 1382.4 394.4 1384 395.7 1384.4 395.8 1384.9 395.4 1385.7 396.1 1386.5 395.9 1388.2 396.4 1388.6 396.1 1389.4 396.6 1391.1 396.2 1391.5 396.9 1392.8 397.1 1393.6 396.6 1394 397.2 1395.3 397.6 1396.1 396.9 1396.5 397.4 1398.2 398 1398.6 397.6 1399 398.1 1400.7 397.9 1401.5 398.3 1402.3 398 1402.7 398.5 1403.6 398.2 1404 393.9 1404.4 359.4 1404.8 287.7 1405.2 296.2 1406.1 396 1406.5 398.7 1406.9 399.1 1407.3 398.9 1407.7 399.4 1409.4 399.2 1410.2 399.6 1411.9 399.7 1413.1 400.2 1415.6 400.1 1416.1 400.6 1416.9 400.4 1419.8 401.1 1421.5 401.1 1422.7 401.6 1426.5 402 1427.7 401.8 1428.1 402.3 1438.9 404.1 1439.4 403.7 1441.8 404.4 1442.7 403.9 1443.1 404.6 1451.4 405.5 1451.8 405.9 1453.9 405.9 1459.3 407 1460.2 406.8 1462.2 407.5 1464.3 407.4 1464.7 407.9 1466.4 407.8 1466.8 408.2 1470.1 408.2 1471 403.8 1471.4 403.3 1472.6 408.8 1476.8 409.6 1478.5 409.5 1478.9 409.9 1480.5 409.5 1481.8 389.2 1482.6 409.2 1483 410.4 1483.5 410.6 1488 411 1488.4 411.4 1488.9 411.1 1489.7 411.5 1494.3 411.9 1497.2 412.6 1499.3 412.5 1499.7 412.9 1502.2 413 1503.4 413.5 1503.8 413.3 1507.4 414.1 1510.2 414 1511.6 414.7 1517.2 415.6 1518.5 415.4 1523.4 416.5 1526.2 416 1528.2 414.2 1530.3 415.3 1532.4 417.4 1535.9 418.1 1536.6 417.8 1538 418.6 1538.6 418.4 1539.3 418.8 1540 418.4 1541.4 419.1 1549.7 420.1 1552.5 420.7 1553.2 420.5 1553.9 420.8 1556 420.7 1556.7 421.2 1560.8 421.9 1561.5 421 1562.2 417.9 1563.6 422.1 1564.3 422.3 1574 423.9 1574.7 423.5 1576.1 424.2 1586.5 425.6 1587.2 425.3 1588.6 426 1592 426.6 1593.4 426.4 1594.1 425.6 1594.8 422.8 1595.5 422.3 1596.2 423.3 1597.6 421.3 1598.3 421.1 1600.4 425.9 1601.7 427.7 1602.4 428 1605.2 428.1 1611.5 429.4 1612.8 429.1 1613.5 429.5 1617.7 430.3 1618.4 429.8 1621.9 431 1623.2 430.6 1624.6 431.3 1628.8 432 1629.5 431.6 1630.2 432.1 1633 431.5 1635.7 428.2 1637.1 427.4 1638.5 428.6 1640.6 431.9 1642 433.3 1644 434.2 1645.4 434.1 1651.7 435.4 1653.8 435.2 1657.2 436.2 1660.7 436.4 1664.8 437.3 1666.9 437.2 1671.1 438.2 1672.5 438.3 1673.2 437.9 1674.6 438.7 1679.4 439.1 1680.1 439.5 1684.3 440.1 1684.5 440.2 1337.8 389.2Z"/>
<path d="M1331 391.3 1331.8 388.1 1332.2 390.9 1332.7 386.1 1333.1 388.9 1333.5 387.5 1334.3 379.4 1334.7 392.6 1336 388.1 1336.8 391.3 1337.2 389.7 1337.7 391 1338.1 390.3 1338.9 391 1339.7 386.7 1340.2 393 1340.6 390.6 1341 392.3 1341.4 391.6 1341.8 384.9 1342.6 392.9 1343.5 387.5 1343.9 387.2 1344.3 391.2 1345.1 394.2 1346 393 1346.4 393.9 1347.6 393.5 1348.5 391.4 1349.3 392.6 1349.7 394.6 1351 388.7 1351.8 393.2 1352.6 394.6 1353.1 394 1353.9 395.4 1354.3 394.2 1354.7 394.6 1355.1 393.4 1355.5 394.6 1356.4 392.7 1357.2 392.1 1357.6 395.5 1358.5 394 1358.9 394.5 1359.3 393.6 1359.7 395.6 1360.5 393.4 1361 394.5 1361.4 394.3 1361.8 395.6 1363 395.9 1363.5 395.6 1363.9 396.7 1364.7 396.2 1365.1 396.7 1365.9 395.9 1366.4 397.1 1366.8 396.7 1367.6 396.8 1368 396.4 1368.9 396.6 1369.3 396.1 1370.1 397.1 1371.4 395.4 1371.8 397.5 1373 398.2 1373.4 397.9 1374.7 398.3 1375.5 397.1 1375.9 397.2 1376.3 398.4 1376.8 398.1 1377.2 399 1378 398.4 1378.4 398.9 1379.7 398.5 1380.1 399.3 1380.5 398.6 1381.3 399.5 1383 399.1 1385.5 400.1 1385.9 399.6 1388.4 400.7 1388.8 400.3 1389.2 400.7 1389.7 400 1390.9 400.9 1391.7 400.6 1392.6 401.2 1395.9 401.3 1396.7 401.8 1397.2 400.3 1397.6 383.2 1398.4 277.6 1399.2 392.9 1399.6 401.7 1400.1 402.3 1401.3 402.2 1406.7 403.4 1408 403.2 1414.6 404.6 1418.8 404.8 1419.2 405.2 1422.1 405.6 1424.2 405.5 1425.4 406 1430 406.5 1430.4 406.9 1435.4 407.2 1436.7 407.8 1437.5 407.5 1440.4 408.3 1440.8 407.9 1441.3 408.4 1443.7 408.8 1445 408.6 1446.2 409.2 1446.7 408.8 1447.1 409.2 1447.9 409 1449.6 409.7 1451.7 410 1452.1 409.7 1460.4 411.3 1462.1 411.2 1463.7 411.8 1466.2 411.7 1467.5 412.3 1470.4 412.8 1471.2 412.6 1472.9 413.1 1473.7 412.9 1474.1 413.3 1474.5 413.1 1476.6 413.7 1478.7 413.9 1479.1 413.6 1481.2 414.3 1482.9 414.2 1483.3 414.6 1484.1 414.2 1484.5 414.8 1488.3 415.3 1490.8 414.5 1492.8 412 1494.1 411.1 1495.3 411.4 1497.8 414.4 1498.5 414.6 1499.9 413.5 1501.3 411.8 1502 411.6 1503.4 409.3 1504.8 414 1506.2 416.4 1508.2 418.1 1508.9 417.8 1510.3 418.4 1513.1 418.7 1513.8 418.2 1514.5 416.1 1515.9 419.2 1516.6 419.5 1522.8 420.4 1524.2 419.9 1524.9 420.7 1525.6 420.5 1536 422.3 1536.7 422 1538 422.7 1540.8 423 1542.2 422.8 1545.7 418.6 1548.5 423.1 1549.1 423.8 1551.2 424.6 1560.9 425.9 1561.6 425.7 1563 426.3 1567.2 427 1567.9 426.5 1572.7 427.8 1574.1 427.5 1574.8 427.9 1576.2 427.8 1577.6 428.3 1579 428.1 1581 428.9 1585.2 429.3 1585.9 429.7 1589.4 429.9 1591.4 430.5 1599.8 431.5 1601.8 432.1 1609.5 433.2 1611.5 433.2 1612.2 433.6 1613.6 433.2 1614.3 433.9 1617.8 434.1 1619.9 434.7 1620.6 434.5 1622.6 435.2 1631 436.1 1632.4 436.6 1633 436.2 1634.4 436.4 1635.1 437 1635.8 436.8 1642.1 438 1644.1 437.9 1645.5 438.5 1654.5 439.5 1655.2 439.9 1662.9 441.1 1663.6 441.2 1664.2 440.6 1664.9 441.4 1665.6 441.5 1666.3 441 1667 441.6 1667.7 441.5 1668.4 441.9 1671.9 442.1 1672.6 442.5 1674 442.3 1677.4 443.1 1677.7 443.3 1331.0 392.3Z"/>
<path d="M1324.2 394.5 1324.6 389.4 1325 393.6 1325.4 393.3 1326.2 383.4 1326.7 390.9 1327.5 381.1 1327.9 385.6 1328.3 381.3 1329.2 390 1330.4 395.6 1330.8 393.3 1331.6 394.5 1332.1 394.1 1332.5 389.6 1333.7 396.2 1334.1 396.3 1334.6 390.1 1335 391.4 1335.4 383.7 1335.8 392 1336.6 388.4 1337.1 393.6 1337.9 394.5 1338.3 396.9 1338.7 396.6 1339.1 397.1 1339.6 396 1340 392.2 1341.2 396.6 1342 395.3 1343.3 397 1343.7 396.9 1344.1 397.2 1344.5 396.2 1345.4 397.1 1346.2 396.4 1346.6 398.5 1347.5 395 1348.3 398.4 1348.7 397.2 1349.5 398.7 1350 398.1 1350.8 399.1 1351.6 397.4 1352.5 399.4 1352.9 399.5 1353.7 397.9 1354.5 399.4 1354.9 398.1 1355.8 399.6 1356.2 399.7 1357 396.6 1357.4 399 1357.9 399.5 1358.7 399.2 1359.5 400.4 1360.4 397.3 1361.2 400.5 1362.4 400.3 1362.9 398.9 1364.9 400.5 1365.3 401.3 1366.2 400.5 1367 401.4 1367.4 400.3 1367.8 401.3 1368.3 400.7 1368.7 401.7 1369.1 401.5 1369.5 401.9 1370.3 401.4 1370.8 401.6 1371.2 401.1 1371.6 402 1372.4 401.7 1373.7 402.2 1374.9 401.9 1376.6 402.7 1377 402.1 1377.8 403 1381.6 403.6 1382.8 403.4 1383.2 404 1386.1 403.9 1387 404.5 1388.2 404.2 1388.6 404.6 1389.5 404.4 1389.9 399.3 1390.7 365.9 1391.6 402 1392 404.6 1393.2 405.3 1397.4 405.6 1397.8 406.1 1398.6 405.7 1399 406.2 1400.7 406.2 1401.1 406.6 1403.6 406.6 1404 406.9 1414 408.5 1414.4 408.2 1416.1 408.8 1417.8 408.7 1419.8 409.4 1420.7 409.2 1424.8 410.1 1427.8 410.4 1428.2 410.1 1429.8 410.8 1435.7 411.3 1436.1 411.8 1439.4 412.3 1440.7 412.4 1441.1 412.1 1441.5 412.5 1442.3 412.4 1443.1 412.8 1444.4 413 1444.8 412.7 1445.2 413.1 1449.8 413.8 1450.2 413.5 1451.1 414 1454 414.4 1455.6 414.2 1456.5 414.8 1456.9 414.4 1457.3 414.8 1460.6 415 1461 415.4 1461.5 415.2 1463.5 415.8 1464.4 415 1465.2 412.1 1466.4 416.1 1467.3 415.8 1467.7 416.3 1472.3 417 1472.7 416.7 1473.1 417.1 1475.2 417.2 1476 417.7 1479.8 417.8 1481.4 418.5 1485.2 418.7 1489.7 419.7 1491 419.5 1491.7 419.9 1501.4 421.1 1504.2 421.8 1505.6 421.6 1506.2 422.1 1506.9 421.8 1516 423.6 1518.7 423.6 1520.1 424.1 1527.7 425 1529.1 425.5 1529.8 425.2 1531.9 425.9 1533.3 425.7 1534.7 426.3 1538.8 426.6 1539.5 427 1540.9 426.7 1541.6 427.3 1546.5 427.7 1549.2 428.4 1550.6 428.1 1552 428.7 1553.4 428.5 1554.1 429.1 1560.3 429.9 1561.7 429.4 1563.8 427.5 1564.5 427.5 1567.3 430.2 1570 431.4 1573.5 430.5 1575.6 428.4 1577 428.1 1577.7 427 1578.4 424.1 1579.7 430.2 1581.1 432 1582.5 432.8 1586 433.7 1590.8 434.4 1591.5 434.1 1592.2 434.7 1595 435.1 1595.7 434.7 1598.5 435.7 1603.3 436.4 1604 436 1605.4 429.3 1606.1 435.4 1606.8 436.7 1608.2 436.7 1608.9 437.2 1611 437.4 1611.6 437.2 1617.9 438.5 1622 438.7 1625.5 439.6 1626.2 439.2 1626.9 439.8 1629 440.2 1634.5 440.9 1635.9 440.7 1638 441.5 1643.5 442 1647 442.8 1656.7 444.1 1657.4 444 1658.8 436.2 1659.5 442.6 1660.2 444.7 1663.6 444.8 1664.3 445.4 1666.4 445.3 1670.6 446.3 1670.9 446.3 1324.2 395.3Z"/>
<path d="M1317.3 397.1 1317.7 391.3 1318.6 396.4 1319.4 394.6 1320.2 397.8 1321.1 389 1321.5 396.1 1321.9 395.5 1322.3 396.7 1322.7 393.5 1323.1 398.9 1323.6 398.4 1324 394.2 1324.4 396.4 1324.8 393 1325.2 399.2 1325.6 395.6 1326.5 397.3 1326.9 390 1327.3 396.6 1327.7 397.5 1328.6 397.2 1329 399.2 1329.4 397.2 1329.8 397.2 1330.2 399.8 1331 396.2 1331.5 399.5 1331.9 399.5 1332.3 394.9 1332.7 399.5 1333.5 396.9 1334 400.6 1334.4 400.3 1334.8 398.6 1335.2 400.1 1336 400.9 1337.3 399.7 1339 400.7 1339.8 399.4 1340.2 395.6 1341 400.9 1341.5 401.5 1342.3 400.3 1342.7 401.5 1343.1 398.9 1343.5 399.3 1343.9 401.7 1344.4 401.3 1344.8 401.9 1345.2 400.3 1345.6 402.2 1346 401 1346.9 402.3 1347.7 400.9 1348.5 402.6 1349.4 402.4 1349.8 402.9 1350.2 401.9 1350.6 402 1351 403.2 1351.4 402.6 1351.9 403 1352.3 401.8 1352.7 401.8 1353.1 401.9 1353.5 403.4 1354.8 402.6 1355.6 403.9 1356.4 403.7 1357.3 403 1358.5 404.1 1358.9 403.4 1359.3 403.8 1359.8 403.4 1360.2 404.5 1360.6 403.9 1362.3 404.9 1363.9 404.3 1364.7 405.2 1365.2 404.6 1366.4 404.4 1366.8 404.8 1367.2 404.3 1368.1 405.4 1368.9 405.3 1369.3 405.8 1373.5 406.1 1374.7 406.8 1376 406 1377.2 407.1 1378.1 406.3 1378.5 392.6 1379.3 255 1380.1 389 1380.6 406.2 1381 407.3 1381.8 407.7 1382.2 407.2 1382.6 407.9 1385.1 407.9 1387.6 408.7 1390.1 408.5 1390.5 409.1 1392.6 409.3 1393 409.1 1394.3 409.5 1394.7 409.1 1395.1 409.7 1398.9 410.3 1399.7 409.9 1400.9 410.7 1401.4 410.4 1403.9 411.1 1404.7 410.8 1408.4 411.8 1411.8 411.9 1413.4 412.4 1414.7 412.2 1415.1 412.6 1415.9 412.5 1417.2 413 1418.4 412.9 1421.3 413.7 1421.7 413.4 1427.2 414.6 1428 414.3 1431.3 415.1 1433.8 415.1 1434.2 415.5 1435.5 415.2 1435.9 415.8 1437.1 415.7 1439.2 416.3 1440.9 416.6 1441.3 416.1 1442.5 416.8 1447.1 417.1 1449.6 417.9 1450.9 417.5 1451.7 414.6 1453.4 418.2 1457.1 418.9 1457.5 418.3 1458.4 413.2 1458.8 413.4 1459.6 418.7 1460.4 419.3 1462.9 419.8 1465.8 419.9 1466.7 420.4 1470 420.9 1471.3 420.6 1472.1 421.1 1480 422 1482.1 422.6 1483.3 422.4 1484.2 422.9 1490.4 423.6 1491.8 424.1 1492.5 423.8 1496.6 424.8 1497.3 424.4 1498 424.8 1509.1 426.6 1509.8 426.4 1510.5 425.6 1511.2 422.5 1512.6 427 1513.3 427.2 1527.1 429 1531.3 429.9 1532 429.7 1536.9 430.7 1539.6 430.7 1540.3 431.1 1541 430.8 1543.1 431.6 1547.3 432.1 1548.6 431.7 1550.7 429.9 1551.4 428.7 1552.8 428.8 1556.3 432.9 1557 432.9 1557.7 433.5 1563.9 434.7 1565.3 434.4 1566 435 1567.4 435.1 1568.1 434.8 1570.8 435.6 1571.5 435.4 1573.6 436.1 1574.3 435.9 1576.4 436.5 1578.5 436.4 1579.8 437 1580.5 436.7 1581.2 437.2 1586.1 437.6 1586.8 438 1589.5 438.4 1590.2 438.1 1590.9 438.6 1595.1 438.9 1597.9 439.6 1602 439.8 1604.1 438.5 1606.2 435.5 1606.9 435 1607.6 435.1 1610.4 439.7 1612.4 441.6 1627.7 444.1 1629.1 443.9 1630.5 444.5 1633.9 445 1636.7 444.9 1637.4 445.4 1638.1 445.1 1639.5 445.8 1642.2 446.1 1642.9 445.9 1643.6 446.3 1645 446.2 1649.2 447.2 1652 447.2 1652.6 447.7 1659.6 448.4 1663.7 449.4 1664.0 449.4 1317.3 398.4Z"/>
<path d="M1310.5 395.5 1311.3 400.5 1311.7 399.5 1312.1 390.1 1312.6 391.1 1313 400.1 1313.4 401.2 1313.8 397.4 1314.2 398.2 1314.6 391.9 1315.1 397.3 1315.5 393.9 1315.9 394.4 1316.7 396.3 1317.1 400 1317.6 396.9 1318 400.7 1318.4 398.4 1318.8 400 1319.2 395.1 1319.6 398 1320 396.7 1320.5 401.5 1320.9 399.6 1321.3 401.1 1321.7 398 1322.5 400.6 1323 395.9 1324.2 401.8 1325 402.9 1325.5 402.1 1325.9 403.4 1326.3 400.5 1327.1 402.3 1327.5 401.2 1328 403.2 1328.4 403.1 1330 404.2 1330.4 401.3 1330.9 401.4 1331.3 404.2 1332.1 404.5 1332.5 402.5 1332.9 404.4 1333.8 401.4 1334.6 400 1335.4 404.3 1335.9 403.3 1336.7 404.6 1337.5 403.7 1338.4 404.9 1339.2 405.4 1340.4 404.7 1340.9 405.4 1341.3 403.9 1342.1 403.2 1342.5 405.3 1342.9 405.1 1344.2 405.7 1344.6 405.1 1345 405.9 1346.7 406.6 1347.9 406.7 1348.3 405.6 1348.8 406.1 1350 406 1351.3 407.4 1351.7 406.4 1353.7 407.6 1354.2 406.7 1354.6 407.4 1355 407.1 1355.4 407.6 1356.2 407.5 1356.7 406.9 1357.1 407.6 1358.3 408.3 1359.2 408.1 1359.6 408.5 1360.4 408.1 1360.8 408.8 1361.2 408.2 1362.1 408.9 1363.3 408.3 1363.7 408.7 1364.1 408 1365 408 1366.2 407 1367.1 405.7 1367.9 405.4 1370 406.4 1370.4 407.3 1372.1 409.2 1372.5 409.1 1372.9 409.9 1376.6 411.2 1377 410.9 1378.7 411.4 1379.5 411.1 1382 412 1383.3 411.7 1385 412.3 1385.8 412.1 1386.2 412.5 1389.1 413 1389.5 412.7 1390.4 413.2 1390.8 412.9 1391.2 413.3 1391.6 412.9 1394.5 413.8 1396.2 413.7 1402 414.9 1403.7 414.6 1404.1 415.2 1405.8 415 1409.1 415.9 1410.3 415.7 1410.7 416.2 1414.9 416.5 1417.8 417.2 1418.2 416.9 1418.7 417.3 1420.7 417.7 1422 417.4 1422.4 415.8 1423.2 387.7 1424.5 417.6 1426.1 418.5 1429.1 418.9 1429.5 418.5 1430.3 419.1 1430.7 418.7 1433.2 419.5 1435.3 419.4 1437.4 420.1 1443.2 420.6 1443.6 421 1447.4 421.6 1449.4 421.4 1451.5 422.2 1461.1 423.6 1461.9 423.2 1463.2 417.3 1464 422.9 1464.4 423.8 1466.1 424.3 1469 424.7 1469.8 424.5 1470.2 424.9 1471.9 425.2 1472.7 424.9 1474.4 423.5 1476.1 421.1 1476.5 421.1 1478.7 424.9 1480.1 426.1 1483.6 426.9 1485.6 426.8 1487 427.4 1488.4 427.2 1489.1 427.7 1500.9 429.5 1509.2 430.7 1509.9 430.5 1514.1 431.4 1514.8 431.1 1515.4 431.6 1516.1 431.3 1518.2 431.9 1520.3 431.9 1521 432.4 1525.2 432.8 1530.7 433.8 1531.4 433.4 1532.1 434 1533.5 433.9 1534.2 434.4 1543.2 435.4 1546.7 436.2 1549.4 436.2 1555.7 437.3 1557.1 437.3 1558.4 436.7 1561.2 434 1562.6 434.6 1566.1 438.6 1568.1 439.2 1571.6 439.3 1573 440.1 1574.4 438.5 1575.1 433.2 1576.5 439.3 1577.2 436.2 1578.5 440.6 1579.9 441 1581.3 441.3 1582 440.9 1585.5 441.9 1610.4 445.3 1612.5 445.9 1613.2 445.6 1615.3 446.3 1619.5 446.6 1622.2 447.3 1622.9 447 1632.6 448.9 1634.7 449.1 1635.4 448.8 1641 450.1 1647.2 450.9 1647.9 450.6 1648.6 451.2 1656.9 452.3 1657.2 452.5 1310.5 401.5Z"/>
<path d="M1303.6 402.7 1304.1 402.2 1304.5 403.6 1304.9 395.9 1305.3 400 1306.1 402.5 1307 398.4 1307.4 399.6 1307.8 398.4 1308.2 398.4 1308.6 403.4 1309.5 401.8 1309.9 404.8 1310.7 401 1311.1 404.5 1311.5 404.8 1312.4 402.8 1312.8 403.5 1313.2 400.3 1314.5 405.8 1314.9 404.9 1315.3 405.6 1315.7 403.6 1316.1 404.5 1316.5 404 1317.4 405.8 1317.8 402.1 1318.2 401.3 1319 405.7 1319.4 403.5 1319.9 405.5 1320.3 405.8 1321.9 404.3 1322.4 405.6 1322.8 404.8 1323.2 405.1 1323.6 407.3 1324 405.6 1324.9 405 1325.3 407.2 1325.7 406.3 1326.1 407.2 1326.5 405.4 1326.9 406.9 1327.4 406.5 1328.2 407.8 1329.9 407.3 1330.3 406 1330.7 407.9 1331.1 407.2 1331.9 408.3 1332.3 407.6 1332.8 408.3 1333.6 407.9 1334 408.6 1334.4 408.6 1335.7 407.2 1336.5 407.5 1336.9 407 1337.3 408.3 1338.6 409.6 1339 408.4 1340.3 409.7 1341.5 408.6 1342.3 409.6 1343.2 410 1343.6 409.6 1344 410.5 1344.8 409.6 1345.2 410.1 1346.1 409.9 1346.5 410.5 1349.4 411 1349.8 410.7 1350.7 410.7 1351.1 410.2 1353.6 411.7 1354 411.3 1354.4 411.8 1355.6 411.6 1356.1 412.1 1356.9 412.1 1357.3 408.6 1357.7 381.5 1358.1 321.2 1358.6 325.1 1359 381 1359.4 370.3 1359.8 294.9 1360.2 299.2 1361.1 409.1 1361.5 412.4 1361.9 413 1363.5 412.7 1364.8 413.3 1366.9 413.2 1367.3 413.8 1368.1 413.7 1370.2 414.3 1372.3 414.2 1372.7 414.6 1374 414.3 1374.4 414.9 1376 414.8 1378.9 415.5 1379.4 415.2 1379.8 415.6 1381 415.8 1383.5 415.8 1383.9 416.2 1387.7 416.5 1388.9 417 1391 417.2 1391.4 416.8 1392.7 417.6 1395.2 417.9 1395.6 417.6 1396.4 418.1 1396.8 417.8 1406 419.6 1406.4 419.3 1408.5 420 1410.6 420.2 1411 419.9 1412.6 420.6 1415.1 420.6 1416 421.1 1418.1 421 1419.3 421.5 1423 421.8 1423.5 422.2 1423.9 421.8 1425.1 422.3 1425.5 422 1426 422.5 1426.8 422.3 1430.5 423.1 1431.8 423 1432.2 423.4 1435.9 423.6 1437.2 424.2 1441.8 424.9 1442.6 424.6 1443 425 1446.3 425.5 1446.8 425 1447.6 425.7 1448 425.4 1449.3 425.9 1449.7 425.6 1450.9 426.2 1451.3 425.8 1451.8 426.2 1452.2 425.9 1452.6 426.3 1453.4 426.1 1454.2 426.5 1455.9 426 1458.8 422.2 1460.1 421.4 1460.9 422 1463.8 426.8 1465.1 427.9 1468 428.7 1473.2 429.1 1475.3 429.8 1486.4 431.4 1487.1 431 1487.8 431.6 1491.3 432.1 1492 431.7 1494.7 432.7 1496.8 432.5 1497.5 433 1501 433.6 1504.4 434 1505.1 433.7 1505.8 434.2 1510.7 434.9 1511.4 434.7 1512.1 435.1 1514.2 435.1 1515.5 435.7 1518.3 436.1 1519 435.8 1519.7 436.2 1520.4 436 1523.2 436.8 1532.9 437.9 1536.3 438.8 1537 438.3 1538.4 439.1 1548.8 440.5 1549.5 440.3 1551.6 441 1553 440.7 1553.7 441.2 1554.4 441 1555.8 441.6 1556.5 441.3 1557.8 441.8 1558.5 441.6 1559.9 442.2 1560.6 441.8 1562 442.5 1566.2 442.8 1566.9 443.2 1567.5 443.3 1568.2 442.9 1568.9 443.4 1571 443.6 1571.7 444 1573.8 443.3 1574.5 440 1575.9 444.3 1582.1 445.5 1583.5 445.3 1584.2 445.7 1584.9 444.6 1585.6 440.6 1587 445.6 1588.4 446.3 1595.3 447.4 1596 447.2 1605.7 449 1607.8 448.9 1608.5 449.3 1616.1 450.5 1618.2 450.3 1619.6 451 1620.9 450.9 1632.7 452.9 1633.4 452.7 1636.2 453.4 1638.3 453.3 1639 453.8 1641.7 453.7 1643.1 454.5 1650.1 455.5 1650.3 455.6 1303.6 404.6Z"/>
<path d="M1296.8 399.1 1297.2 406.2 1297.6 399.6 1298 405.6 1298.5 405.4 1298.9 406.7 1299.7 398.9 1300.1 398.3 1301 406.2 1301.4 404.5 1301.8 406.8 1302.2 404.3 1303 404 1303.5 402.1 1303.9 406.6 1304.3 407.6 1304.7 404.8 1305.1 408.4 1305.5 405.9 1306 405.7 1306.8 408.3 1307.6 402.7 1308.4 408.4 1309.3 405.7 1309.7 406.1 1310.1 405.4 1310.5 403.1 1310.9 409.3 1311.4 407.8 1311.8 409.5 1312.2 408.2 1312.6 409.6 1313.4 406.4 1313.9 406 1314.7 409.7 1315.1 409.8 1315.5 407.8 1315.9 409 1316.4 407.6 1316.8 409.5 1317.6 408.3 1318 406.9 1318.4 407.2 1319.3 410.8 1320.1 410 1320.9 410.6 1321.3 408.9 1322.2 411.3 1322.6 408.9 1324.3 411.6 1324.7 411.7 1325.1 410.8 1325.9 411.8 1326.3 410.6 1326.8 411.5 1327.2 410.9 1327.6 411.1 1328 412 1328.8 410.2 1329.3 411.6 1329.7 411.8 1330.5 410.5 1331.3 412.2 1332.2 412.8 1333 412.3 1333.4 412.7 1334.2 410.7 1334.7 411 1335.1 410.7 1336.3 413 1336.7 413.3 1337.6 412.9 1338 413.6 1338.8 413.1 1339.2 413.5 1340.1 413.1 1340.5 413.6 1341.3 412.6 1342.6 414.2 1343 414 1344.2 414.5 1344.6 414 1345.1 414.5 1345.5 413.7 1346.3 414.7 1348 414.5 1348.4 414.9 1348.8 414.3 1349.6 415.3 1350.1 414.9 1350.5 415.3 1351.3 415.4 1351.7 410.9 1352.5 335.9 1353.4 400 1353.8 414.3 1354.6 415.8 1355.9 415.6 1356.3 416.2 1357.1 415.7 1357.5 416.5 1360 416.6 1360.5 415.8 1360.9 416.7 1361.3 416.5 1362.1 417 1365 417 1365.4 417.6 1367.1 417.5 1370.9 418.5 1371.7 418.5 1372.1 418.1 1372.5 418.6 1375.4 418.8 1375.8 419.2 1377.1 419.3 1377.5 418.9 1377.9 419.5 1381.3 419.5 1382.1 420.1 1387.9 420.9 1388.7 420.6 1389.2 421.1 1391.2 421.2 1392.1 421.6 1393.7 421.3 1394.6 421.9 1395.8 421.9 1396.2 421.5 1397.5 422.3 1399.6 422.7 1400 422.3 1401.2 422.9 1405 423 1405.8 423.6 1409.1 423.7 1410.4 424.1 1410.8 423.9 1412 424.4 1412.5 424.2 1413.3 424.7 1416.6 425.2 1417 424.9 1417.9 425.3 1421.6 425.9 1422 425.6 1422.4 425.9 1422.9 425.6 1423.7 422.3 1424.1 422.5 1424.9 425.9 1425.8 426.6 1427 426.5 1427.9 426.9 1428.3 426.4 1429.1 427.1 1433.7 427.7 1434.1 427.5 1434.5 427.8 1435.8 427.8 1438.7 428.5 1439.5 428.1 1440.7 428.7 1452.4 430.2 1455.3 430.9 1456.6 431 1457 430.7 1457.4 431.2 1458.2 431 1459.9 431.6 1462 431.5 1462.4 431.9 1475.4 433.9 1477.5 433.7 1478.2 434.2 1479.6 434.1 1481 434.7 1486.5 435.5 1487.2 435.3 1492.1 436.3 1492.8 436 1493.4 436.5 1502.5 437.6 1505.2 438.2 1505.9 438 1506.6 438.5 1508.7 438.8 1510.1 438.9 1510.8 438.5 1512.2 439.3 1518.4 439.9 1524 441 1524.7 440.7 1526 441.3 1528.1 441.2 1528.8 441.7 1530.2 441.4 1532.3 442.2 1535.1 442.7 1535.7 442.3 1536.4 442.8 1539.9 443.3 1541.3 443 1542 443.6 1543.4 443.5 1550.3 444.9 1551.7 445 1552.4 444.7 1553.8 445.3 1557.9 446 1560.7 446 1564.9 447 1573.2 447.9 1573.9 448.3 1574.6 448 1575.3 448.5 1578 448.6 1583.6 449.8 1585.7 449.7 1587.8 447.8 1589.1 442.3 1589.8 444.4 1593.3 448.2 1594 447.7 1594.7 443.2 1595.4 443.3 1596.1 448.1 1600.9 452 1606.5 453.1 1607.2 452.9 1607.9 453.3 1613.4 453.8 1614.1 454.2 1616.9 454.6 1618.3 453.8 1621 448.3 1621.7 447.7 1623.1 453.8 1624.5 455.4 1626.6 456.1 1630.7 456.6 1631.4 456.4 1632.8 457 1634.9 456.9 1636.3 457.5 1637.7 457.4 1643.2 458.5 1643.5 458.6 1296.8 407.6Z"/>
<path d="M1290 406.9 1290.4 407.8 1290.8 404.9 1291.2 408.7 1291.6 405.7 1292 410 1292.5 409.9 1292.9 406.5 1293.3 408.3 1294.1 406.3 1294.5 406.8 1295 405.7 1295.4 406.3 1295.8 411.2 1296.2 410.5 1297 411.5 1297.4 410.8 1297.9 407.8 1299.1 410.8 1299.5 407.3 1300.8 411.7 1301.6 409.5 1302 410.3 1302.9 408.5 1303.3 409.2 1303.7 412.2 1304.1 409.7 1304.5 412.3 1304.9 410.8 1306.2 412.7 1306.6 411.1 1307.4 412.4 1307.8 408 1308.7 410.8 1309.1 408 1309.5 410 1310.3 410.2 1310.8 412.6 1311.2 412.9 1311.6 410.5 1312.4 413 1312.8 412.5 1313.3 412.9 1314.1 412.4 1314.9 413.6 1315.3 412.8 1316.2 414.3 1317.4 413.5 1317.8 412.2 1318.3 414.7 1318.7 413.1 1319.5 413 1319.9 412.5 1320.3 413.5 1320.7 412.9 1321.2 413.1 1322 414.2 1322.4 414.5 1322.8 414.3 1323.2 415.2 1323.7 415 1324.1 413.8 1324.9 415.7 1327 414.9 1327.8 416 1328.2 415.5 1329.1 415.3 1329.5 416.2 1330.3 415.7 1332 416.8 1333.2 416.3 1334.5 417.1 1335.3 416.6 1335.7 417.3 1336.6 416.8 1337.8 417.2 1338.2 417.7 1339.1 417.5 1339.5 418 1339.9 417.3 1340.7 417.1 1341.1 417.9 1342 417.4 1342.4 418 1343.2 418.3 1345.3 418.7 1346.1 418.1 1348.6 419.2 1349.5 419 1351.5 419.4 1351.9 419.1 1354.4 420.2 1356.1 420.1 1358.6 420.7 1359 420.4 1361.1 421.1 1361.9 420.6 1363.2 421.3 1364.8 421.3 1365.7 421.7 1366.5 421.6 1366.9 422 1368.2 421.8 1368.6 422.2 1371.1 422.3 1372.3 422.8 1374.8 422.5 1375.2 423.2 1377.7 423.2 1384.4 424.5 1386.1 424.6 1386.5 424.1 1386.9 424.8 1387.3 424.6 1389.4 425.3 1390.6 425.1 1392.3 425.7 1400.2 426.5 1400.6 426.9 1403.1 427 1406 427.7 1406.5 427.4 1406.9 427.9 1408.9 427.8 1413.1 428.7 1413.5 428.4 1414.4 429 1419.3 429.4 1422.7 430.2 1423.5 429.9 1423.9 430.3 1425.6 430.3 1426.8 430.8 1427.3 430.5 1427.7 430.9 1431.8 431.5 1432.7 431.4 1433.1 430.8 1433.9 424.1 1434.3 423.9 1435.2 431.1 1435.6 431.9 1436.4 431.8 1436.8 432.2 1442.2 432.8 1443.1 433.2 1443.9 433 1447.6 433.9 1450.6 434 1453.5 434.7 1453.9 434.4 1456 435.1 1456.8 434.8 1457.5 435.3 1458.9 435 1459.6 435.6 1461.6 435.9 1463 435.7 1465.8 436.5 1472 437.1 1472.7 437.5 1473.4 437.2 1476.9 438.2 1482.4 438.5 1483.8 439.1 1490.1 440 1490.8 439.8 1492.2 440.4 1492.8 440.1 1493.5 440.6 1496.3 440.8 1499.8 441.5 1501.2 441.5 1501.9 440.6 1502.6 437.5 1503.2 436.9 1503.9 441.3 1504.6 442.2 1508.8 442.9 1510.2 442.6 1510.9 443.2 1512.3 443.1 1513.7 443.6 1517.8 443.9 1520.6 444.6 1523.4 444.7 1525.4 445.3 1528.9 445.6 1530.3 445.1 1532.4 442 1533.8 434.2 1535.1 441.3 1536.5 444.3 1537.9 446.3 1541.4 447.6 1542.8 447.7 1543.5 447.2 1544.2 448.1 1544.9 447.9 1546.9 448.5 1549 448.3 1551.8 449.2 1557.3 449.6 1558 450.1 1558.7 449.9 1570.5 451.9 1572.6 451.9 1573.3 452.4 1576.1 452.3 1576.8 452.8 1577.4 452.5 1578.8 453.1 1580.2 452.8 1581.6 453.4 1590.6 454.9 1592.7 454.9 1598.9 456.1 1600.3 455.9 1603.1 456.7 1604.5 456.6 1606.6 457.3 1607.3 457 1608.6 457.5 1609.3 457.3 1611.4 457.9 1617 458.4 1618.4 459 1622.5 459.2 1631.5 460.9 1633.6 460.7 1636.4 461.5 1636.7 461.7 1290.0 410.7Z"/>
<path d="M1283.1 411.6 1283.5 408.1 1284 413.6 1284.4 399.6 1285.2 409.2 1285.6 408.7 1286 410.1 1286.9 406.6 1287.3 413.2 1287.7 409.2 1288.1 412.4 1288.5 410.5 1288.9 414.1 1289.4 414 1289.8 409.1 1290.2 411.7 1290.6 408.3 1291 410.2 1291.4 410.9 1291.9 410.6 1292.3 414.4 1292.7 413.1 1293.1 413 1293.5 410.4 1293.9 414.8 1294.4 410.5 1294.8 414.3 1295.6 411.3 1296 414.5 1296.4 412.8 1296.8 415.4 1297.7 412.2 1298.1 415 1298.5 415.6 1299.3 414.3 1299.8 415.2 1300.2 414.9 1300.6 412.5 1301.4 416 1301.8 416 1302.3 414.3 1302.7 415 1303.5 415 1303.9 416.2 1304.3 416.3 1304.8 414.6 1305.2 414.8 1305.6 416.5 1306.4 414.7 1307.3 415.7 1308.1 413.9 1308.5 417.1 1308.9 417.4 1309.7 416.5 1310.2 417.4 1311 416.3 1311.4 417.2 1311.8 415.8 1313.1 417.9 1313.9 417.7 1314.3 417.2 1316 418.4 1316.4 417.3 1316.8 417.9 1318.5 418.4 1319.3 417.8 1319.7 418.6 1321 417.1 1321.8 419 1322.6 418.5 1324.3 419.4 1326 419.3 1326.4 419.9 1326.8 419.6 1328.5 420.3 1329.3 420.3 1329.7 419.9 1330.1 408.6 1331 282.3 1331.8 402.6 1332.2 419.2 1332.6 420.6 1335.1 421.2 1336.4 421 1337.2 421.6 1338 421.4 1338.9 421.7 1339.3 421.5 1340.5 422.1 1340.9 421.7 1342.6 422.4 1344.3 422.2 1344.7 422.6 1345.5 422.4 1346.8 423 1348 422.7 1350.5 423.6 1352.2 423.5 1353.4 424.1 1353.8 423.4 1354.3 424 1356.8 424.1 1357.6 424.5 1358 424.3 1358.8 424.8 1363.8 425.6 1366.3 425.5 1373.8 427.1 1374.2 426.6 1375.1 427.2 1375.9 427.3 1376.3 427 1376.7 427.4 1381.3 428.2 1383.4 428.4 1384.2 428.1 1386.3 428.9 1388.8 429 1389.2 429.3 1389.6 429.1 1393.4 430 1397.1 430.2 1397.9 430.6 1398.8 430.3 1399.2 430.8 1400.9 430.6 1401.3 431 1402.1 431.2 1402.5 430.9 1403.8 431.5 1405.9 431.7 1406.3 431.3 1407.5 432 1413.8 432.6 1414.6 433.1 1415 432.7 1418.7 433.7 1420 433.4 1420.8 434 1422.9 434 1423.7 434.4 1424.6 434 1425 434.6 1425.8 434.7 1428.3 434.8 1429.2 435.2 1430.8 435.2 1432.9 435.7 1433.3 435.4 1434.6 436 1436.2 435.7 1436.6 436.3 1437.1 436 1440.8 436.9 1441.2 436.6 1445.4 437.6 1446.2 437.3 1446.6 437.8 1447 437.3 1447.9 438 1452 438.5 1458.3 436.9 1462.4 439.7 1465.9 440.5 1467.3 440.5 1468 440.9 1473.5 441.4 1474.2 441.8 1480.5 442.5 1483.2 443.1 1484.6 443.1 1486 439.2 1486.7 442.6 1488.1 443.9 1495.7 445 1496.4 444.7 1498.5 445.3 1499.2 445.1 1500.6 445.7 1505.4 446.4 1506.8 446.1 1508.2 446.4 1509.6 445.5 1511.7 443.1 1513.1 442.3 1513.7 442.6 1515.8 446 1517.2 447.4 1519.3 448.4 1532.5 450.3 1533.2 450 1536.6 451 1538 450.9 1540.1 451.5 1549.8 453 1551.2 452.9 1551.9 453.3 1560.9 454.3 1567.1 455.5 1567.8 455.2 1569.9 455.8 1571.3 449.9 1572.7 456 1573.4 456.4 1579.6 457 1582.4 457.7 1583.1 457.6 1594.9 459.5 1597 459.4 1598.3 452.8 1599 458.4 1599.7 460.1 1609.4 461.7 1610.1 461.5 1611.5 462 1619.1 463.2 1621.2 463.1 1623.3 463.8 1627.5 464.1 1629.5 464.7 1629.8 464.8 1283.1 413.8Z"/>
<path d="M1276.3 415.8 1276.7 416.5 1277.1 414 1277.9 415.8 1278.4 411 1278.8 415.4 1279.2 415.1 1279.6 409.1 1280 415.7 1280.4 416.1 1280.9 415.6 1281.3 416.9 1282.1 416 1282.5 417.6 1283.4 417.2 1283.8 414.5 1284.2 416.6 1284.6 414.4 1285 416.2 1285.4 416.5 1285.8 416.3 1286.3 413.9 1286.7 415.2 1287.1 411.9 1287.9 416.5 1288.3 417.5 1289.2 416.5 1290 418.6 1290.4 417.6 1290.8 417.8 1291.3 415.4 1292.1 418.4 1292.9 416.9 1293.3 417.1 1293.8 418.7 1294.2 417 1295 419.1 1295.4 416.1 1296.2 419 1296.7 417.8 1297.9 419.1 1298.3 416.4 1299.2 419.4 1300 420.1 1300.4 417.8 1300.8 418.9 1301.2 418.6 1301.7 419.7 1302.1 419.3 1302.5 420.5 1302.9 419.2 1303.7 419.6 1304.2 420.3 1304.6 419.9 1305 420.4 1306.2 419 1307.1 421 1307.5 420.9 1307.9 421.2 1308.3 420.5 1308.7 421.1 1309.1 420.6 1309.6 421.5 1310 421 1310.4 421.4 1311.6 421.1 1312.9 422.1 1313.7 421.1 1314.6 422.2 1315 421.8 1315.4 422.5 1316.6 421.4 1317.5 422.5 1318.7 422.6 1319.5 422.1 1320 422.9 1320.4 422.6 1320.8 413.7 1321.6 316.9 1322.5 409.4 1322.9 422.3 1323.3 419.5 1323.7 385 1324.1 305 1324.5 304.4 1325 384.7 1325.4 419.3 1325.8 423.6 1327.5 424.1 1328.3 423.6 1330.4 424.7 1330.8 424.1 1332.9 425.1 1334.1 425.2 1334.9 424.7 1336.2 425.5 1336.6 425.2 1338.3 425.9 1339.1 425.7 1342.4 426.4 1343.3 426.1 1343.7 426.6 1344.5 426.4 1348.7 427.3 1349.1 426.9 1349.5 427.4 1350.3 427.6 1350.8 427.3 1351.6 427.8 1357.4 428.2 1357.8 428.8 1358.2 428.4 1359.9 429.1 1363.2 429.3 1369.9 430.6 1371.6 430.3 1373.6 431.1 1374 430.8 1375.3 431.4 1376.1 431.2 1377.4 431.6 1377.8 431.2 1379 431.9 1379.5 431.7 1382.4 432.1 1383.2 432.5 1384.5 432.5 1386.5 433 1388.2 432.9 1392.8 434 1393.2 433.5 1394 434.1 1394.4 433.8 1394.9 434.2 1396.5 434.5 1397.3 434.3 1413.2 436.9 1414.8 436.8 1416.1 437.4 1417.7 437.2 1418.1 437.6 1420.6 437.7 1421.5 438.2 1421.9 437.8 1424.4 438.4 1426.1 438.1 1429 434.5 1429.8 434.1 1431 435.1 1431.5 436.4 1433.1 438.9 1434.8 439.9 1436.5 440 1437.3 440.5 1440.2 440.9 1440.6 440.6 1441.9 441.2 1443.1 441 1446.6 441.9 1454.9 442.8 1459.1 443.7 1463.2 444 1467.4 444.9 1468.1 444.7 1472.2 445.6 1472.9 445.5 1474.3 441.4 1475 444.9 1476.4 446.1 1482.6 447.1 1483.3 446.9 1485.4 447.5 1487.5 447.5 1490.3 448.3 1495.8 448.8 1502.7 450.1 1503.4 449.9 1509.7 451.1 1510.4 450.2 1511.1 445.2 1511.8 445.3 1512.5 450.6 1513.1 451.5 1513.8 451.6 1531.9 454.3 1532.6 454.1 1538.8 455.4 1540.2 455.2 1541.6 455.8 1546.4 456.3 1547.1 456.7 1551.3 457 1559.6 458.5 1564.5 458.8 1565.2 459.3 1567.2 459.6 1569.3 459.5 1570.7 460.1 1579.7 461 1580.4 461.6 1588.7 462.5 1595.7 463.8 1596.4 463.5 1597 464 1601.2 464.3 1602.6 464.8 1606.1 465 1607.4 465.5 1609.5 465.3 1610.2 465.9 1622.7 467.5 1623.0 467.8 1276.3 416.8Z"/>
<path d="M1269.4 409.7 1270.7 418.7 1271.1 419.2 1271.5 417.5 1271.9 418.8 1272.4 418.8 1272.8 417.9 1273.2 420 1274 419 1274.8 418.9 1275.3 419.4 1275.7 418 1276.1 419.7 1276.5 416 1277.3 420.7 1277.8 417.7 1278.6 420.9 1279 417.6 1279.4 417.5 1280.3 414.5 1280.7 415.9 1281.1 415.5 1281.5 419.9 1281.9 417.1 1282.3 417 1282.8 421 1283.6 419.5 1284 420.6 1284.4 420.5 1284.8 421.8 1285.2 420.1 1286.1 419.6 1287.3 422.1 1287.7 421.9 1288.2 422.5 1288.6 422.2 1289 420.9 1289.4 421.9 1290.2 418.8 1291.1 420.9 1291.5 418 1292.3 422.8 1292.7 423.2 1293.2 421.9 1293.6 423.1 1294 423.3 1294.4 422.5 1294.8 423.3 1296.5 420.7 1296.9 422 1297.3 420.5 1297.7 422.6 1298.1 422.6 1298.6 424 1299.8 423.4 1300.2 422.9 1300.6 424.2 1301.5 423.4 1302.3 424.3 1303.1 424.5 1303.6 424.1 1304.4 424.9 1305.2 425 1305.6 424.4 1306.1 425.2 1306.9 424.5 1308.1 425.3 1308.5 425.1 1309.8 425.4 1310.6 425 1311.5 426 1312.7 425.7 1313.1 426.1 1313.5 425.4 1314 426.3 1315.2 426.2 1316 426.1 1316.5 425.3 1316.9 408.9 1317.7 289.3 1318.5 414.7 1318.9 426.4 1321 427.4 1321.9 427.2 1322.7 427.5 1323.5 427.1 1325.6 427.9 1326.4 427.8 1328.1 428.3 1328.9 427.8 1329.3 428.4 1334.8 429.4 1338.1 429.6 1341 430.4 1341.4 430 1341.8 430.5 1342.2 430.2 1344.3 430.8 1344.7 430.5 1346.4 431.2 1347.2 431 1350.6 431.8 1354.7 432 1361 433.3 1364.3 433.2 1365.1 433.9 1369.7 434.5 1370.1 434.3 1370.5 434.6 1371 434.3 1371.4 434.7 1373.4 434.8 1373.9 435.2 1375.5 435 1376.4 435.6 1379.3 435.7 1388 437.3 1388.4 436.9 1390.1 437.6 1394.7 438 1400.1 439.1 1402.2 439.3 1402.6 438.8 1403 439.5 1403.4 439.3 1408.4 440.3 1409.6 440 1410.5 440.6 1415.5 441.4 1416.7 441 1417.1 441.6 1418 441.7 1420.5 441.7 1421.3 442.1 1422.1 442 1422.5 442.4 1427.1 443.1 1428.4 442.8 1438.4 444.7 1441.1 444.6 1443.9 445.5 1448.1 445.8 1448.8 446.2 1454.3 447 1455 446.8 1455.7 447.3 1456.4 446.9 1458.5 447.6 1461.2 447.8 1462.6 444.6 1464 448.4 1470.2 449.4 1473 449.3 1473.7 446.5 1474.4 446 1475.1 449.4 1477.2 450.4 1480 450.3 1481.3 451 1482 450.9 1483.4 451.4 1489 451.9 1491.1 452.5 1491.7 452.3 1495.2 453.1 1496.6 452.9 1497.3 453.4 1507 454.5 1513.2 455.7 1516.7 455.9 1518.1 456.5 1520.9 456.3 1524.3 457.4 1525.7 457.2 1526.4 457.6 1529.2 457.7 1529.9 458.2 1536.1 459.1 1537.5 458.9 1538.9 459.5 1540.3 459.3 1550.7 461.2 1554.8 461.7 1556.9 461.4 1557.6 456.8 1558.3 456.8 1559 461.6 1560.4 462.6 1563.9 462.9 1566.6 463.6 1568 463.5 1570.8 464.2 1571.5 463.8 1572.2 464.2 1572.9 464 1575 464.7 1575.6 464.3 1576.3 464.7 1579.8 462.1 1581.2 461.6 1582.6 462.4 1584.7 465.2 1585.4 465.3 1586.7 466.4 1588.1 466.3 1590.2 467 1592.3 467 1595.1 467.7 1595.8 467.5 1606.2 469.4 1610.3 469.7 1613.1 470.4 1615.2 470.3 1615.9 470.6 1616.1 470.9 1269.4 419.9Z"/>
<path d="M1262.6 422.6 1263 407.9 1263.4 411.6 1263.8 410.9 1264.3 420 1265.1 418.5 1265.5 418.6 1265.9 423.2 1266.8 418.8 1267.2 419.4 1267.6 423.4 1268 422.4 1268.4 423 1268.8 420.6 1269.3 422.2 1269.7 420.7 1270.5 422.9 1270.9 421.5 1271.3 421.9 1271.8 423.6 1272.2 420.2 1272.6 423.2 1273 422.3 1273.4 424.3 1273.8 423.8 1274.2 424.4 1274.7 421.4 1275.1 421.3 1275.9 422.7 1276.3 424.3 1277.2 422.9 1278 422.6 1279.7 424.5 1280.5 422.2 1280.9 424.5 1281.3 423.4 1282.2 424.1 1282.6 423.7 1283 425 1283.8 425.1 1284.2 425.8 1285.1 423.6 1285.5 426.2 1286.3 424.6 1286.7 426.1 1287.1 425.5 1288 426 1288.4 424.8 1288.8 425.8 1290.1 425.8 1290.5 426.7 1290.9 426.5 1291.7 427.1 1292.1 426.3 1294.6 427 1295.5 426.9 1295.9 427.7 1296.3 426.6 1297.1 427.9 1297.5 427.9 1298.4 426.6 1298.8 427.5 1299.6 428 1300.5 427.3 1300.9 427.8 1301.7 427.7 1302.1 428.4 1303.4 428.3 1303.8 428.8 1304.2 428.5 1305 429 1305.5 428.3 1306.7 428.9 1307.1 428.2 1307.5 429.3 1309.2 429 1310.4 429.6 1312.5 429.9 1312.9 426.3 1313.8 310.1 1314.2 303.9 1315 425.5 1315.4 430.1 1315.9 430.5 1316.3 430.3 1317.5 430.9 1318.8 430.6 1320 431.1 1320.4 430.5 1320.8 430.9 1322.5 431.2 1322.9 431.7 1327.5 432.3 1327.9 432 1329.2 432.7 1332.5 432.8 1333.3 433.3 1334.6 433.1 1336.7 433.8 1337.1 433.5 1337.9 433.9 1340.8 434.1 1345 435 1350 435.5 1350.8 435.9 1352.9 436.1 1353.3 435.7 1353.7 436.2 1356.2 436.3 1357.5 436.8 1357.9 436.4 1358.7 437 1359.1 436.8 1360 437.2 1360.4 436.9 1362 437.6 1364.1 437.6 1367.4 438.3 1367.9 438 1368.3 438.5 1369.1 438.2 1369.9 438.7 1375.3 439.5 1377.8 439.4 1378.3 439.9 1382.8 440.2 1384.1 440.8 1387.4 440.9 1389.9 441.7 1391.6 438.6 1392.4 441.5 1394.9 442.4 1395.7 442.2 1398.2 442.9 1399.9 442.7 1400.3 443.1 1402.8 443.2 1403.2 443.6 1404.1 443.4 1405.3 443.9 1406.5 444.1 1407 443.8 1407.4 444.3 1412 444.6 1412.4 445 1416.5 445.3 1417.4 445.7 1418.6 445.5 1420.7 446.2 1424 446.6 1424.4 446.4 1425.3 446.8 1426.5 447 1426.9 446.5 1427.4 447.2 1427.8 446.9 1428.2 447.2 1435 448 1437.8 448.7 1441.2 448.8 1443.3 449.5 1444.7 449.4 1449.5 450.4 1450.9 450.2 1454.4 451.2 1456.5 451.2 1457.2 449.6 1457.9 443.8 1459.2 451.4 1460.6 452 1462.7 452 1464.8 452.7 1466.2 452.5 1466.9 453 1471 453.1 1471.7 453.7 1472.4 453.5 1473.8 454 1474.5 453.6 1480.7 455 1483.5 455.1 1487.7 456.1 1496 456.9 1496.7 457.4 1499.5 457.7 1500.2 457.5 1502.2 458.1 1505 458.5 1505.7 458.2 1507.1 458.9 1507.8 458.2 1508.5 458.7 1509.9 458.2 1512.6 454.8 1514 454.4 1514.7 454.8 1516.8 458 1517.5 458.2 1518.2 456.3 1519.6 460.2 1521 460.9 1521.7 460.7 1522.3 461.2 1530.7 462.1 1555.6 466 1558.4 466.1 1562.6 467.1 1563.3 466.8 1564.6 467.4 1572.3 468.4 1573 467.7 1573.7 463.4 1574.4 464.1 1575 468.3 1575.7 469 1577.8 469 1580.6 469.7 1582 469.6 1582.7 470 1587.5 470.4 1588.2 470.8 1593.8 471.3 1594.5 471.8 1595.8 471.6 1597.2 472.2 1601.4 472.8 1602.1 472.6 1604.9 473.3 1605.6 473 1609 473.8 1609.3 474.0 1262.6 423.0Z"/>
<path d="M1255.8 423.6 1256.2 422.7 1256.6 423.9 1257.4 419.4 1257.8 424.4 1258.3 420.8 1258.7 422.2 1259.1 419.2 1259.9 424.9 1260.3 425.8 1260.8 424.5 1261.2 426.5 1261.6 426.3 1262 419.3 1262.4 425.4 1263.7 426.9 1264.9 426.4 1265.3 424 1265.7 425.2 1266.2 422 1266.6 423.7 1267.4 424.8 1267.8 424 1268.2 426.1 1268.7 425.6 1269.1 427.8 1269.5 428 1270.3 423.1 1271.6 426.7 1272 426.3 1272.4 427.9 1272.8 426 1273.2 427.8 1273.6 426.1 1274.1 428.4 1274.9 426.6 1275.3 428.1 1275.7 427 1277 428.9 1277.4 427.7 1277.8 428.9 1278.6 425.7 1279.1 428.2 1279.5 427.9 1280.3 428.3 1280.7 429.3 1281.1 429.4 1281.6 429.1 1282 429.4 1282.4 428.3 1282.8 429.5 1283.2 428.7 1283.6 429.4 1284.1 427.7 1284.9 430 1285.3 429.4 1286.1 429.8 1286.5 429.3 1287 430.3 1287.4 429.7 1287.8 430.7 1288.2 430 1288.6 430.6 1289.5 430.1 1289.9 430.6 1290.3 429.9 1292 431 1292.4 430.3 1292.8 431.2 1293.6 431.2 1294.5 430.2 1294.9 431.3 1295.7 431.2 1296.5 431.8 1296.9 431.4 1297.8 431.9 1298.2 431.5 1299.9 432.4 1300.7 432.4 1301.5 431.6 1302.8 432.8 1303.2 432.3 1303.6 432.5 1304 428.1 1304.9 330.1 1306.1 431 1306.5 433 1307.3 433.5 1309.4 433.6 1309.8 431.9 1310.3 410.2 1311.1 298.4 1311.9 425.2 1312.3 433.6 1313.2 434.4 1314.8 434.1 1315.7 434.8 1316.1 434.5 1320.7 435.5 1322.3 435.3 1324.8 435.9 1325.2 435.6 1326.1 436.3 1326.9 436 1333.1 437.4 1336.1 437.8 1336.5 437.4 1337.7 438 1341.5 438.1 1342.7 438.7 1343.1 438.3 1344 438.9 1346 438.8 1346.5 439.3 1349.8 439.8 1351.9 439.5 1353.5 440.3 1356 440.5 1356.4 440.8 1357.7 440.6 1358.5 441.1 1360.6 441.1 1361 441.4 1362.7 441.4 1364.3 442 1366.8 442.1 1374.3 443.4 1374.7 443.1 1376.4 443.8 1378.1 443.6 1381 444.5 1382.7 444.5 1383.5 444.1 1383.9 444.7 1385.1 444.7 1387.6 445.4 1388.1 445.1 1393.1 446.1 1393.5 445.7 1395.5 446.6 1400.5 446.9 1402.6 447.6 1403.9 447.4 1407.6 448.3 1413 448.7 1413.9 449.2 1414.3 448.9 1414.7 449.3 1415.9 449.2 1416.4 449.6 1417.6 449.5 1419.3 450 1420.5 449.9 1420.9 450.3 1426.8 451.2 1427.4 450.9 1430.2 451.7 1432.3 451.9 1433 451.6 1433.7 452.1 1437.2 452.7 1442.7 453.4 1443.4 453.2 1446.9 454.1 1451.7 454.8 1452.4 454.6 1458 455.7 1458.6 455.7 1460 448.3 1461.4 456.1 1462.1 455.9 1462.8 456.4 1472.5 457.9 1477.4 458.2 1478.1 456.1 1478.8 451.4 1480.1 458.7 1481.5 459.2 1492.6 460.7 1493.3 460 1494 455.9 1494.7 456.2 1495.4 460.5 1496.1 461.4 1503.7 462.4 1504.4 462.2 1505.1 462.7 1506.5 462.6 1516.9 464.4 1519 464.1 1522.4 461.2 1523.8 460.8 1528 465.3 1530.8 466.4 1537 466.9 1538.4 467.6 1540.5 467.5 1541.2 467.9 1543.2 467.9 1546 468.6 1546.7 468.4 1548.8 469.1 1553.6 469.8 1555 469.3 1555.7 470.1 1556.4 470.2 1559.9 470.8 1562 470.6 1565.4 471.6 1568.2 471.7 1568.9 472.1 1569.6 471.8 1570.3 472.3 1571.7 472.1 1577.2 473.3 1580 473.3 1585.5 474.5 1602.2 476.8 1602.5 477.0 1255.8 426.0Z"/>
<path d="M1248.9 428.8 1250.2 426.5 1250.6 424.4 1251 424.9 1251.4 424.2 1251.8 426.7 1252.2 427.8 1252.7 427.3 1253.1 429 1253.9 424.5 1254.3 428 1255.2 428.3 1255.6 426.9 1256.4 429.9 1257.2 424.6 1257.7 429.5 1258.1 426.8 1258.5 427 1258.9 429.9 1260.2 430.1 1260.6 428.1 1261.4 430.3 1261.8 429.6 1262.2 426.9 1262.6 429.3 1263.5 430.7 1264.3 430.3 1264.7 431 1265.1 430.3 1265.6 431.3 1266 430 1266.4 430 1266.8 431.4 1267.2 429.1 1267.6 431.7 1268.5 429.1 1268.9 430.5 1269.3 428.9 1269.7 431.2 1270.6 431.7 1271.4 430.4 1271.8 428.4 1272.6 432.4 1273.9 431.8 1274.7 432.4 1275.1 431.2 1276 432.8 1276.4 432.9 1276.8 432.2 1278 433 1278.5 432.1 1278.9 433.2 1279.7 431.5 1280.1 432.8 1281 430.8 1281.8 433.6 1283.5 433 1284.7 434.1 1285.9 432.8 1287.2 433.7 1287.6 434.7 1288 434.2 1288.9 434.6 1290.1 434.4 1290.9 434.9 1291.4 434.6 1292.6 435.3 1293 435.1 1293.4 435.6 1293.9 434.9 1294.3 435.4 1295.1 435.4 1295.5 435.8 1295.9 435.4 1296.8 435.4 1298 436.2 1300.5 436 1302.6 436.6 1303 436.4 1303.4 427.5 1304.3 302.1 1305.1 415.3 1305.5 435.3 1306.3 437.3 1308.4 437.3 1308.8 437.7 1312.6 438.4 1316.3 438.5 1317.6 439.1 1318 438.8 1318.4 439.3 1319.6 439.1 1322.1 439.8 1322.6 439.5 1330.9 441.1 1331.3 440.8 1335.9 441.9 1337.1 441.7 1337.5 442.1 1339.2 442.3 1339.6 442 1340 442.3 1340.4 442.1 1344.6 443.1 1347.5 442.5 1350 439.8 1352.9 443.5 1354.6 444.5 1356.7 444.9 1357.9 444.8 1358.3 445.2 1360.4 445.4 1360.8 445.2 1362.1 445.7 1362.9 445.5 1363.3 445.9 1364.2 445.7 1365 446.2 1366.7 446.1 1367.5 446.5 1367.9 446.2 1369.2 446.7 1374.1 447.1 1378.3 448.1 1380.4 447.8 1380.8 448.5 1382.1 448.3 1387.5 449.5 1388.3 449.2 1391.2 450 1391.6 449.7 1392 450.1 1392.5 449.9 1397.4 450.9 1397.9 450.6 1398.3 451 1400.4 451 1401.2 451.5 1401.6 450.8 1402 451.6 1404.1 451.4 1405.8 452 1406.6 450.8 1407.4 444.2 1407.8 443.6 1408.7 449.6 1409.1 449.8 1409.9 448.9 1411.2 448.3 1412 448.8 1414.5 452.2 1416.4 453.5 1417.8 453.6 1418.5 454 1419.9 453.7 1420.6 454.3 1424.1 454.5 1428.9 455.5 1431 455.3 1432.4 456 1434.5 456.3 1435.2 456 1435.9 456.4 1437.2 453 1437.9 455.7 1438.6 456.8 1439.3 457 1440.7 456.9 1442.8 457.6 1444.2 457.2 1444.9 457.8 1446.3 458.1 1447.6 457.9 1449 458.5 1451.1 458.4 1453.9 459.2 1457.4 459.7 1458 459.5 1460.1 460.1 1464.3 460.7 1465 460.4 1465.7 460.9 1468.5 461 1469.8 461.6 1471.2 461.4 1473.3 462 1486.5 463.7 1487.2 464.1 1487.9 463.9 1496.9 465.6 1500.3 465.7 1509.4 467.4 1510.7 467.5 1512.1 466.9 1512.8 463.3 1513.5 463 1514.2 467.3 1515.6 468.3 1517.7 468.2 1518.4 468.6 1521.1 469.1 1521.8 468.9 1525.3 469.4 1526.7 469.9 1532.9 470.5 1538.5 471.7 1540.6 471.6 1541.3 472.1 1542 471.8 1543.3 472.4 1546.1 472.4 1547.5 473 1562.8 475 1564.8 475.6 1566.9 475.4 1567.6 475.9 1569.7 476.3 1570.4 475.8 1571.8 476.6 1573.8 476.5 1576.6 477.3 1580.1 477.4 1581.5 472.3 1582.2 476.9 1582.9 478.2 1588.4 478.7 1589.1 479.1 1590.5 478.9 1594.6 479.9 1595.3 479.4 1595.6 480.1 1248.9 429.1Z"/>
<path d="M1242.1 430.2 1242.9 431.8 1243.3 427.5 1243.7 430.3 1244.2 429.7 1244.6 431.8 1245.4 426.6 1245.8 430.8 1246.2 428 1246.7 428.8 1247.1 427.8 1247.9 431.7 1248.3 430.7 1248.7 425 1249.2 427.4 1249.6 427.6 1250 429.1 1250.4 433.2 1250.8 430.9 1251.2 432.8 1251.6 431.6 1252.5 432.5 1252.9 432 1253.3 429.2 1253.7 428.7 1254.1 433.1 1255 430.3 1256.2 432.8 1257.1 432.3 1258.3 434.3 1258.7 434.3 1259.1 433.5 1259.6 434.4 1260 431.4 1260.4 433.1 1260.8 433.8 1261.2 433.8 1261.6 430.7 1262.5 432.1 1262.9 431.3 1263.3 434.4 1264.1 433.8 1264.5 435.2 1265 433 1265.4 434.9 1265.8 434.9 1266.2 434.3 1267 435.5 1267.9 433.4 1268.3 433.4 1268.7 434.4 1270 434.8 1270.8 436.1 1271.2 435.9 1271.6 436.3 1272 435.9 1272.9 436.3 1274.1 435.7 1274.9 436.9 1275.8 436.5 1276.2 436.8 1276.6 435.7 1277.4 436.4 1277.9 435.8 1278.7 437.4 1279.1 437 1279.5 437.2 1279.9 436.7 1280.4 437.3 1281.6 437.8 1282.4 437.5 1283.7 438.1 1284.9 437.6 1285.3 438.3 1285.8 438.1 1286.6 438.4 1287.4 437.5 1288.7 438.9 1289.1 438.5 1291.2 439.3 1291.6 439 1292 439.2 1292.4 438.7 1293.3 439.4 1294.5 439.4 1294.9 439.9 1296.2 439.5 1296.6 436.8 1297 409.2 1297.4 332.9 1297.8 319.1 1298.2 395.9 1298.7 435 1299.1 440 1299.9 440.5 1300.3 440.3 1300.7 440.8 1304.5 441.3 1305.7 441 1306.6 441.5 1310.7 441.9 1312.4 442.5 1313.2 442.2 1315.3 442.8 1315.7 442.4 1316.6 443.1 1317 442.8 1320.7 443.7 1321.5 443.5 1322.4 443.9 1325.7 444.1 1328.6 444.9 1330.3 444.7 1331.9 445.4 1333.6 445.3 1334.4 445.7 1334.9 445.4 1335.3 445.8 1336.9 445.6 1337.8 446.2 1338.6 446 1342.8 446.8 1344.8 446.3 1348.2 443.9 1349.8 444.7 1352.7 447.8 1355.2 448.8 1355.7 448.4 1356.5 449 1359 449.1 1363.1 449.9 1364.8 449.7 1365.6 450.3 1368.6 450.3 1369 450.7 1374.4 451.6 1375.2 451.4 1376.9 452 1377.3 451.7 1379 452.2 1379.4 451.9 1381.5 452.6 1382.7 452.5 1385.2 453.1 1386 452.8 1386.9 453.5 1388.5 453.6 1388.9 453.2 1389.4 453.8 1391.4 454.1 1391.9 453.6 1392.7 454.3 1394.8 454.6 1395.2 454.2 1397.3 455 1398.1 454.6 1398.5 455.1 1398.9 454.7 1399.3 455.3 1402.7 455.8 1404.3 455.6 1405.2 456.1 1407.7 456.1 1411 457 1411.7 456.7 1412.4 457.2 1413.1 454.8 1413.8 425.8 1415.2 456.9 1416.5 457.7 1422.8 458.3 1424.2 458.9 1425.6 458.6 1426.2 459.2 1432.5 459.8 1435.3 460.5 1440.8 461.4 1441.5 461.2 1449.1 462.6 1454 462.9 1457.5 463.8 1458.1 463.4 1458.8 464.1 1460.9 464 1461.6 464.4 1465.8 465 1466.5 464.7 1467.2 463.1 1467.9 462.6 1468.5 463.1 1469.2 459.4 1470.6 465.4 1471.3 465.8 1489.3 468.2 1494.9 469.4 1496.3 469.2 1501.1 470.2 1501.8 469.7 1503.2 470.5 1503.9 470.2 1506 471 1506.7 470.6 1508.1 471.2 1515 472.3 1516.4 472.1 1517.8 472.7 1518.5 472.4 1519.9 473 1520.5 472.6 1521.9 473 1523.3 465.4 1524 471.8 1524.7 473.6 1526.8 473.5 1528.9 472.3 1529.6 471.5 1533 474.7 1534.4 474.7 1535.1 475.2 1544.1 476.5 1545.5 473.9 1546.9 476.9 1549.7 477.1 1553.1 477.9 1554.5 477.7 1558 478.6 1560.8 478.8 1563.5 479.4 1564.9 479.3 1567 480 1571.2 480.2 1573.2 480.8 1588.5 482.9 1588.8 483.2 1242.1 432.2Z"/>
<path d="M1235.2 431.3 1235.7 430.9 1236.1 434.5 1236.5 434.6 1236.9 434 1237.3 434.8 1237.7 432.3 1238.6 434.7 1239 433.4 1239.4 434.5 1239.8 431.8 1240.2 432.2 1240.6 428.3 1241.1 431.6 1241.9 434.3 1242.3 434.8 1242.7 433.6 1243.1 435.9 1243.6 435.7 1244 432.8 1244.4 435.3 1245.2 432.6 1245.6 436 1246.1 436.5 1246.5 435.9 1246.9 436.2 1247.3 432.1 1248.1 433 1248.6 432.2 1249.4 435.6 1249.8 435.7 1250.2 434.2 1250.6 435.9 1251.5 432.3 1252.3 437.5 1252.7 437.5 1253.1 436.4 1254.4 436.7 1254.8 435 1255.2 437.3 1255.6 436.1 1256.5 438.2 1256.9 437.8 1257.3 438 1258.1 436.5 1258.5 438 1259.8 435.4 1261 438.1 1261.5 437 1261.9 438.1 1262.7 438.7 1263.1 438.4 1263.5 438.9 1263.9 438.7 1264.8 439.4 1266 437.9 1266.4 439.5 1267.7 439.8 1268.1 439.3 1268.5 439.7 1268.9 439.4 1269.8 439.9 1271 440.1 1271.4 439.3 1272.3 440.3 1272.7 440 1273.5 440.1 1273.9 440.6 1274.8 440.3 1275.2 440.7 1276.4 440.7 1276.8 441.2 1277.3 440.8 1278.9 441.2 1279.3 441.7 1280.2 441.3 1281 441.8 1282.7 441.7 1284.3 442.3 1285.2 441.5 1286.4 442.6 1286.8 442.3 1288.9 442.9 1289.3 442.2 1289.7 430 1290.6 239.3 1291.4 407.7 1291.8 440.7 1292.2 443 1293.9 443.3 1294.7 443.9 1295.6 444 1296.4 443.5 1296.8 444.1 1298.1 444.1 1299.7 444.7 1302.2 444.6 1305.1 445.4 1306 445.1 1306.4 445.6 1308.9 445.6 1309.7 446.2 1312.2 446.2 1315.1 446.9 1316 446.5 1317.2 447.2 1318 447.1 1319.7 447.5 1320.1 447.3 1324.3 448.3 1326.4 448.2 1328 448.9 1328.8 448.5 1330.5 449.2 1336.3 450 1336.8 449.7 1338 450.3 1340.1 450.2 1340.5 450.7 1342.2 450.7 1343 451.1 1344.2 450.8 1345.9 451.5 1351.3 452.2 1351.7 452 1352.1 452.4 1352.6 452.1 1354.2 452.7 1357.6 452.9 1358 453.3 1358.4 453 1364.2 454.2 1366.7 454.6 1367.5 454.3 1368 454.8 1369.2 454.5 1370 455 1370.5 454.8 1373.4 455.5 1373.8 455.3 1377.1 456.1 1377.9 455.8 1379.6 456.5 1380 456.1 1380.9 456.7 1382.1 456.2 1382.5 456.7 1383.4 456.6 1384.6 457.2 1385.4 456.7 1385.8 457.4 1387.5 457.2 1388.8 457.8 1393.8 458.3 1395.8 458.8 1397.1 458.7 1397.5 459.1 1397.9 458.8 1398.7 459.2 1399.2 458.8 1399.6 459.3 1404.2 460 1406.2 459.6 1406.9 437.7 1407.6 430.4 1408.3 458.9 1409 460.3 1409.7 460.7 1411.8 460.8 1412.5 460.3 1413.2 457.8 1414.6 461 1415.2 461.6 1420.1 462.3 1420.8 462.1 1428.4 463.6 1429.8 463.5 1430.5 463.9 1436 464.4 1437.4 465 1440.2 464.9 1444.4 463.3 1447.8 466.2 1452 467 1452.7 466.3 1453.4 461 1454.1 460.4 1454.8 466 1455.5 467.6 1468.6 469.3 1470 466 1470.7 469.1 1471.4 469.9 1476.3 470.6 1477 470.4 1477.7 470.8 1479.7 470.8 1480.4 471.2 1484.6 471.9 1486 471.8 1492.2 473 1492.9 472.8 1493.6 473.2 1494.3 472.4 1495 468.2 1495.7 467.6 1496.4 472.8 1497.1 473.6 1503.3 474.3 1504 474.7 1505.4 474.5 1507.5 475.3 1509.5 475.2 1512.3 476 1516.5 476.3 1517.2 476.7 1521.3 477 1522.7 477.5 1523.4 477 1524.1 477.7 1525.5 477.9 1526.2 477.6 1528.3 478.3 1538.7 479.6 1540.1 480.1 1540.8 479.8 1543.5 480.6 1545.6 480.6 1549.1 481.4 1560.9 483 1561.6 482.8 1562.2 483.3 1567.8 483.9 1569.2 484.4 1569.9 484.1 1571.3 484.5 1573.3 484.5 1574 485 1581.7 486.1 1581.9 486.2 1235.2 435.2Z"/>
<path d="M1228.4 437.1 1228.8 437.8 1229.6 434.7 1230.1 434.5 1230.5 437 1230.9 431.5 1231.3 437.9 1231.7 438.2 1232.1 435.2 1233.8 438.7 1234.2 437.3 1234.6 438.1 1236.3 433.2 1237.6 439.2 1238.4 436.7 1238.8 438.9 1239.6 438.7 1240 439.7 1241.3 437 1242.5 440.1 1243.8 440.2 1244.2 438.6 1244.6 438.4 1245 439.2 1245.5 438.9 1246.3 440.8 1246.7 439.6 1248.8 441.1 1249.6 439.7 1250 440.3 1250.5 440.1 1251.3 438.6 1251.7 441.4 1252.1 440.4 1252.9 441.1 1253.8 440.6 1254.6 441.8 1255 441.6 1255.4 440.1 1256.3 441.7 1256.7 441.3 1257.5 442.1 1257.9 441.9 1258.8 442.4 1259.6 441.6 1260.4 442.7 1260.9 442.3 1261.3 442.8 1261.7 442 1262.5 443.1 1263.3 442.4 1263.8 443.2 1264.6 442.8 1265 443 1265.4 442.2 1266.3 443.6 1267.1 443.6 1267.5 442.7 1268.3 444.1 1269.2 444.2 1269.6 443.3 1270 444.3 1270.4 444 1270.8 444.4 1272.1 444.1 1273.3 444.6 1274.6 444.3 1275 444.8 1275.4 444.5 1275.8 445.2 1276.7 444.7 1280 445.7 1280.8 445.5 1282.9 445.9 1283.3 441.7 1283.7 406.4 1284.1 331 1284.6 338 1285.4 442.7 1285.8 437 1286.6 346.7 1287.5 434.7 1287.9 446.1 1288.3 446.9 1289.6 446.8 1290.8 447.4 1291.2 447.1 1292.5 447.7 1294.6 447.5 1295 448 1296.2 448.2 1296.6 447.8 1297.9 448.5 1300.4 448.8 1301.6 448.4 1302 449 1302.9 448.9 1304.1 448.1 1304.5 448.1 1307 445.8 1308.7 446.7 1310.8 449.4 1312.4 450.5 1313.7 450.7 1314.5 450.6 1316.2 451.2 1316.6 450.9 1319.1 451.6 1319.5 451.3 1320.8 451.8 1323.7 451.9 1324.9 452.5 1328.2 452.7 1330.3 453.3 1332.4 453.2 1334.1 453.8 1339.1 454.2 1339.5 454.6 1344.5 455.1 1346.1 455.6 1348.2 455.5 1353.6 456.7 1355.3 456.6 1355.7 457 1356.1 456.7 1359 457.4 1362.4 457.6 1362.8 458.1 1364 458.3 1366.9 458.6 1367.4 458.3 1367.8 458.8 1368.6 458.6 1369.9 459 1370.3 458.8 1370.7 459.2 1371.1 458.8 1371.5 459.3 1379 460.4 1381.5 460.4 1383.2 461 1384 460.7 1385.7 461.4 1387.3 461.3 1387.7 461.7 1389 461.6 1391.9 462.3 1392.3 462 1392.7 462.5 1394 462.6 1394.8 462.1 1395.9 455.2 1397.3 462.5 1398 463.2 1399.4 463.2 1400.8 424.8 1401.5 458.7 1402.2 463.8 1407.7 464.3 1414.6 465.5 1416 465.5 1416.7 463.3 1417.4 463.3 1418.1 465.6 1418.8 466.1 1430.6 468.1 1432 467.9 1433.4 468.5 1436.1 468.5 1436.8 468.9 1437.5 468.6 1441 469.5 1441.7 469.1 1442.4 469.7 1446.5 470 1447.2 470.3 1448.6 469.7 1449.3 470 1452.1 468.3 1453.5 468 1457.6 471.5 1460.4 472.4 1466.7 473.3 1467.3 473.1 1468.7 473.6 1469.4 473.2 1470.1 473.7 1475.7 474.3 1476.4 474.7 1477.1 474.4 1477.7 474.8 1478.4 474.6 1479.1 475.1 1492.3 477.1 1493 476.6 1494.4 477.2 1497.2 477.4 1497.9 477.9 1498.5 477.8 1499.9 473.9 1500.6 477.3 1502 478.6 1504.1 478.5 1527 482.2 1528.4 481.9 1529.1 482.4 1530.4 482.3 1533.2 483.1 1550.6 485.4 1551.9 485.9 1556.1 486.1 1561.6 487.2 1562.3 487 1563.7 481 1564.4 486.3 1565.8 487.7 1574.8 489.2 1575.1 489.3 1228.4 438.3Z"/>
<path d="M1221.6 437.1 1222 435.6 1222.8 440.9 1223.2 440.7 1224.5 433.4 1225.3 436.6 1226.1 437.2 1226.6 438.2 1227 440.2 1228.2 435.6 1228.6 438.6 1229.5 438.1 1229.9 438.4 1230.7 442.3 1231.5 437.2 1232.4 441.7 1233.2 439.7 1233.6 440 1234 442.1 1234.5 439.5 1234.9 439.8 1235.3 443.3 1235.7 443.2 1236.1 442.6 1237 443.3 1237.4 441.9 1237.8 443.5 1238.2 442.2 1238.6 443.7 1239 442.9 1239.4 443.2 1239.9 442.1 1240.7 443.7 1241.1 443.2 1241.5 443.7 1241.9 443 1242.8 444.1 1243.2 443.5 1243.6 444.4 1244.9 442.6 1245.3 443.9 1246.1 444.8 1246.9 444.6 1247.4 445.1 1247.8 444.6 1248.6 444.8 1249 444.1 1249.4 444.9 1249.9 444.5 1250.3 445 1250.7 444.6 1251.9 445.4 1252.8 445 1253.2 445.7 1254.4 445.3 1254.8 446.2 1255.3 445.7 1258.2 446.5 1259.8 445.8 1261.5 446.9 1263.2 446.3 1264.4 447.4 1265.2 447 1266.5 447.8 1266.9 447.4 1267.7 447.9 1268.6 447.6 1269.4 448.3 1271.1 448.1 1271.9 448.7 1273.6 448.9 1276.1 448.6 1276.5 437.1 1277.3 319.2 1278.1 433.8 1278.6 448.5 1279.4 449.7 1280.6 449.9 1281.1 449.6 1283.1 450.3 1283.5 450.1 1288.1 451 1289.4 450.9 1289.8 451.3 1291 451.2 1292.7 451.8 1294 451.6 1294.4 451.9 1300.2 452.6 1300.6 453 1301.9 452.5 1303.5 453.3 1306 452.9 1308.9 449.4 1309.8 449.4 1313.1 453.9 1313.5 453.9 1314.3 454.8 1316 455.2 1318.1 455.5 1319.7 455.3 1320.2 455.8 1321.4 456 1322.7 455.9 1323.9 456.4 1324.3 456.1 1325.2 456.6 1331.8 457.6 1332.2 457.3 1333.9 457.9 1334.3 457.5 1334.7 457.9 1336.4 457.9 1336.8 458.2 1337.2 457.9 1339.3 458.7 1340.1 458.4 1340.5 458.8 1342.2 458.8 1343.5 459.3 1344.7 459.1 1345.5 459.6 1346 459.3 1346.4 459.7 1349.3 460.1 1350.1 459.8 1350.5 460.2 1353 460.7 1353.9 460.3 1355.1 461 1355.9 460.9 1356.4 460.4 1356.8 461.3 1357.6 461 1358.4 461.5 1363.8 462 1364.3 462.4 1368 462.9 1368.4 462.5 1369.3 463.1 1370.5 462.9 1371.3 463.4 1371.8 463.1 1373.8 463.8 1375.1 463.9 1375.5 463.7 1378.8 464.5 1379.2 464.1 1379.7 464.6 1381.7 464.6 1383.4 465.1 1384.6 464.9 1385.9 465.5 1386.3 465.1 1387.6 465.8 1388 465.5 1388.4 465.9 1389.8 465.7 1391.2 466.3 1392.6 466.3 1393.2 460.2 1393.9 426.9 1394.6 455.9 1395.3 466.6 1396 466.9 1399.5 467.5 1400.2 467.2 1402.3 467.9 1403.6 467.8 1405.7 468.4 1406.4 468.1 1407.1 468.7 1407.8 468.3 1408.5 468.9 1418.9 470.1 1419.6 470.5 1421 470.3 1424.4 471.2 1428.6 471.4 1430 472 1430.7 471.8 1436.9 473 1437.6 472.4 1438.3 470.1 1439 469.5 1439.7 472.6 1441.8 473.7 1451.5 475.1 1452.2 474.9 1458.4 476.1 1461.2 476 1461.9 476.6 1464 477 1464.7 476.7 1466.1 477.1 1466.7 476.8 1468.8 477.7 1469.5 477.5 1475.8 478.8 1478.5 478.6 1480.6 479.5 1482 479.6 1483.4 479 1484.1 477.8 1486.2 476.4 1488.2 479.4 1489.6 480.5 1500 482.3 1505.6 482.9 1507.7 483.5 1511.1 483.6 1516 484.6 1517.4 484.2 1518.8 485 1520.8 485.2 1521.5 485.3 1522.2 484.2 1522.9 479.4 1524.3 485.4 1525 485.9 1527.8 486 1529.8 486.7 1532.6 486.8 1537.5 487.8 1539.6 487.7 1540.2 488.2 1541.6 487.9 1543.7 488.6 1545.1 488.3 1549.3 486.3 1551.3 487.4 1553.4 489.5 1555.5 490.4 1568 492.1 1568.3 492.4 1221.6 441.4Z"/>
<path d="M1214.7 443.4 1215.1 443.7 1215.6 442.3 1216.4 444.4 1217.6 442 1218 443.7 1218.5 438.8 1218.9 442.1 1219.3 442.3 1220.1 445 1220.5 443.5 1221 444.4 1221.8 441.4 1222.2 445.2 1223 441.2 1223.5 441 1224.3 445.6 1224.7 442.4 1225.1 443.7 1225.5 443.8 1226 440.7 1226.4 443.4 1226.8 443.9 1227.2 443.2 1227.6 445.1 1228.4 443.5 1228.9 444.7 1229.7 445.3 1230.1 444.3 1230.9 446.3 1231.4 445.9 1232.2 446.5 1233 444.2 1233.9 446.9 1234.7 445.7 1235.1 447.4 1235.9 442.8 1236.8 446.7 1238 447.5 1240.5 446.8 1241.3 448.2 1241.8 447.7 1242.6 447.9 1243 448.5 1244.3 446.9 1245.1 448.7 1246.8 448.5 1247.2 449.1 1248.4 449.2 1248.8 448.2 1249.3 448.2 1249.7 449.1 1250.5 448.2 1252.2 449.8 1253.8 448.5 1255.1 450.2 1255.5 449.9 1255.9 450.3 1257.2 450.1 1258 450.6 1258.4 450.2 1261.3 451.3 1261.7 450.8 1263 450.9 1263.8 451.4 1264.2 451.1 1266.3 451.8 1269.2 452.2 1269.6 448 1270.1 413.2 1270.5 336.2 1270.9 339.3 1271.7 448.5 1272.1 451.6 1273 451.6 1275.9 448.5 1277.1 448.8 1281.3 453.6 1283 454.2 1283.4 454 1283.8 454.5 1285.9 454.5 1286.3 454.2 1286.7 454.9 1288.8 455.2 1289.2 454.7 1290.4 455.6 1291.7 455 1292.1 455.6 1292.5 455.4 1293.8 456.1 1297.1 456.1 1297.5 456.6 1297.9 456.3 1298.3 456.7 1301.3 456.8 1302.5 457.3 1303.3 457 1310.8 458.6 1311.7 458.4 1316.2 459.3 1316.6 459 1318.3 459.7 1319.6 459.4 1321.2 460.1 1322.9 460 1323.7 460.4 1324.6 460.2 1325.8 460.8 1337 462.1 1343.3 463.4 1344.5 463.2 1344.9 463.6 1350.3 464.4 1353.3 464.5 1355.8 465.2 1356.6 464.9 1357 465.3 1360.8 465.6 1363.7 466.4 1364.9 466.2 1366.6 466.8 1372 467.3 1372.4 467.6 1375.7 467.7 1376.6 468.2 1378.2 468.3 1378.6 467.9 1379.1 468.6 1381.1 468.3 1381.6 468.9 1385.7 469.4 1386.4 467.1 1387.1 436.4 1388.5 469.3 1389.2 470 1394 470.5 1395.4 471 1397.5 470.9 1400.3 471.7 1403 471.7 1404.4 472.3 1405.1 472 1407.9 472.8 1408.6 472.5 1410.7 473.2 1414.8 473.5 1415.5 474 1416.9 473.9 1420.4 474.7 1424.5 475.2 1425.2 474.9 1427.3 475.7 1434.9 476.8 1435.6 476.5 1437.7 477.2 1439.1 477 1443.3 478.1 1449.5 478.6 1452.3 479.4 1454.4 479.3 1456.4 479.9 1462 480.8 1463.4 480.7 1470.3 482 1471 481.7 1471.7 482.2 1473.8 482.5 1474.5 482.2 1476.5 482.9 1478.6 483.1 1480 480.1 1481.4 483.5 1486.9 484.4 1488.3 484.3 1489.7 476.5 1490.4 482.9 1491.1 485 1499.4 486 1500.1 486.4 1510.5 487.6 1514 488.4 1514.7 488.2 1522.3 489.7 1527.9 490.1 1529.2 490.7 1532 490.5 1533.4 491.3 1539 491.8 1541.7 492.5 1543.1 492.3 1543.8 492.8 1551.4 493.9 1552.8 494.1 1553.5 493.6 1554.2 494.3 1561.1 495.2 1561.4 495.4 1214.7 444.4Z"/>
<path d="M1207.9 442.6 1208.3 446.6 1208.7 443.9 1209.5 447.3 1210 444.8 1210.4 446.4 1210.8 444.3 1211.2 446.3 1211.6 443.8 1212 446.2 1212.5 445 1212.9 447.4 1213.3 447.8 1213.7 447.7 1214.5 444.2 1215 448.2 1215.8 447.1 1216.2 448.7 1217.4 446.9 1217.9 448.7 1218.3 447.6 1219.1 448.8 1219.9 446.4 1220.4 448.9 1220.8 445.7 1221.6 448 1222 447.4 1222.4 449.1 1222.9 447.5 1223.3 449.1 1224.1 449.2 1224.5 447.2 1225.4 449.6 1225.8 448.4 1226.2 448.4 1226.6 446.8 1227 448.7 1227.4 448.4 1228.7 449.2 1229.5 450.3 1230.8 449 1231.6 450.6 1232.4 450.5 1232.8 449.3 1233.3 451.2 1233.7 450.8 1234.5 451.3 1235.3 450.6 1236.6 451.7 1237 451 1238.7 451.6 1239.5 451.5 1239.9 451.9 1240.7 451.8 1241.2 451 1242 452.2 1242.8 452 1243.2 451.3 1244.5 452.7 1245.7 452.5 1246.2 452.8 1247 452.4 1247.8 453.2 1248.7 452.8 1251.1 453.8 1252 453.4 1253.2 454.1 1254.9 454 1255.7 454.5 1256.1 454.2 1256.6 454.6 1257.4 454.4 1259.9 455.1 1260.3 454.8 1262.4 455.3 1262.8 454.1 1263.2 438 1264 326.5 1264.9 445.2 1265.3 455.3 1265.7 455.8 1267 455.6 1267.8 456.2 1272 456.8 1273.6 456.6 1274.4 457.2 1275.7 457 1277.8 457.8 1283.2 458.1 1284.4 458.7 1286.9 458.8 1287.3 459.1 1287.8 458.8 1291.1 459.7 1295.2 460.3 1295.7 460 1298.2 460.7 1298.6 460.4 1299.8 461 1301.9 460.9 1302.7 461.4 1304.4 461.3 1306.5 462 1308.6 462.3 1309 461.9 1309.4 462.3 1311.1 462.7 1313.1 462.7 1318.1 463.7 1320.2 463.6 1320.6 464.1 1321.5 463.8 1324.4 464.6 1326 464.7 1326.5 464 1326.9 464.9 1330.2 465.5 1330.6 465.2 1334.4 466 1334.8 465.6 1335.6 466.1 1337.3 465.6 1339.8 463.5 1341.4 463.5 1345.6 467.2 1349.3 468.2 1351 467.7 1353.5 465.7 1355.2 465.7 1356 463 1357.2 468.4 1357.7 469.1 1358.9 469.7 1360.2 469.6 1368.5 471.1 1369.3 470.9 1370.1 471.3 1371.8 471.1 1373.5 471.8 1378.9 472.5 1379.6 471.7 1380.3 443.9 1381 434.7 1381.6 470.5 1382.3 472.8 1403.1 476.2 1405.2 476.5 1405.9 476.1 1409.4 477.1 1413.5 477.4 1417 478.3 1418.4 478 1420.5 478.8 1423.3 478.7 1426.7 479.7 1433 480.3 1434.3 480.8 1438.5 481.4 1439.9 481.2 1441.3 481.8 1442.7 481.5 1444.7 482.3 1447.5 482.7 1448.2 482.4 1452.4 483.5 1455.8 483.4 1456.5 484 1459.3 484.1 1461.4 484.8 1464.2 485.1 1465.5 484.8 1466.2 485.4 1469.7 486 1474.6 486.4 1478 487.2 1478.7 487 1489.8 488.9 1491.2 488.8 1492.6 489.4 1496.1 489.5 1497.4 490 1498.8 489.9 1501.6 490.7 1502.3 490.4 1503.7 491 1507.2 491.2 1514.1 492.5 1516.2 492.4 1517.6 493 1525.2 493.9 1537 495.9 1538.4 495.9 1539 494 1539.7 493.3 1540.4 495.7 1541.1 496.4 1554.3 498.3 1554.6 498.5 1207.9 447.5Z"/>
<path d="M1201 449.5 1201.5 449.8 1201.9 449.4 1202.3 450.1 1202.7 448.2 1204 449.1 1204.4 446.6 1204.8 447.1 1205.2 450.9 1206 450.6 1206.4 449 1206.9 450.6 1207.7 448 1208.5 449.6 1208.9 449 1209.4 450.5 1209.8 448.8 1210.6 448.1 1211 449.8 1211.9 446.5 1212.7 449.4 1213.1 449.6 1213.5 447.4 1213.9 452.3 1214.4 451.3 1215.2 452.3 1215.6 452.3 1216 450.5 1216.4 452 1217.3 452.6 1217.7 450.6 1218.9 452.8 1219.8 450.8 1221 452.7 1222.3 453.6 1222.7 452.5 1223.5 453.4 1223.9 451.8 1224.3 452.8 1224.8 452.3 1226.4 453.7 1226.8 453 1227.3 453.8 1227.7 453.4 1228.1 454.2 1228.5 453.8 1229.3 454.6 1230.6 453 1231 454.1 1231.4 453.9 1232.2 455 1233.1 454.2 1233.5 455.1 1234.3 454.3 1234.7 454.3 1235.2 455.5 1235.6 454.8 1236.4 454.7 1237.2 455.6 1240.1 455.6 1242.6 456.5 1243.1 455.8 1243.9 456.6 1244.7 456.5 1245.6 457 1246 456.4 1246.4 457.1 1247.6 457 1248.1 457.4 1248.9 457.2 1250.1 457.5 1250.5 456.9 1251 457.6 1253 457.5 1255.1 455.4 1255.5 453 1256 429.7 1256.8 335 1257.6 446.9 1258 453.8 1260.1 457.6 1262.6 459.5 1263 459.1 1263.9 459.6 1265.1 459.8 1265.5 459.5 1265.9 460 1267.6 459.8 1269.7 460.6 1270.1 460.1 1270.5 460.6 1273 461 1273.4 460.7 1274.3 461.3 1277.2 461.3 1280.5 462.2 1283 462.2 1284.2 462.7 1284.7 462.4 1285.9 463 1287.6 462.9 1288 463.3 1289.7 463.3 1292.2 464 1293.4 464.1 1293.8 463.7 1294.2 464.3 1295.1 464.1 1298.4 464.9 1299.2 464.5 1300.5 465.1 1301.7 465 1308.4 466.4 1320 467.8 1320.4 468.1 1320.9 467.7 1321.3 468.2 1322.5 468.4 1328.8 469 1330.4 469.6 1331.3 469.2 1331.7 469.7 1334.2 470.2 1335.8 470.4 1336.3 470 1336.7 470.5 1342.1 471.2 1342.9 471 1343.3 471.4 1344.2 471.1 1345 471.3 1346.7 470.5 1349.2 467.3 1350.4 467.7 1352.1 470.1 1352.5 469.7 1353.3 464 1353.7 464.8 1354.1 469.2 1355 472.8 1355.8 473.3 1359.1 473.8 1359.6 473.1 1360 465.9 1360.8 436.9 1361.6 472.2 1362 474.1 1362.5 474 1362.9 474.4 1364.5 474.2 1371.3 475.6 1374.1 476 1374.8 475.8 1376.2 476.2 1376.9 476 1379 476.8 1381 476.8 1385.2 477.7 1385.9 477.5 1398.4 479.5 1402.5 477.1 1403.9 478 1406 480.4 1408.1 481 1409.5 480.9 1413.6 481.9 1414.3 481.6 1419.2 482.6 1425.4 483.1 1427.5 483.9 1429.6 483.9 1436.5 485.2 1437.2 484.9 1438.6 485.5 1440.7 485.5 1442.8 486.1 1444.8 486 1446.2 486.6 1456.6 488.2 1457.3 487.7 1458 488.3 1458.7 488.1 1460.1 488.6 1463.6 488.7 1464.9 489.4 1467 489.6 1467.7 489.1 1468.4 489.8 1469.1 489.6 1469.8 490 1476 490.8 1476.7 491.1 1483.7 492.1 1486.4 492 1488.5 492.8 1489.2 492.6 1494.8 493.8 1496.2 493.6 1496.8 494 1498.9 494 1499.6 494.5 1504.5 495.2 1507.9 495.3 1509.3 495.9 1512.1 496.1 1514.9 496.7 1517 496.6 1517.6 497 1518.3 496.7 1519 497.3 1519.7 497.1 1523.9 498 1524.6 497.8 1525.3 498.2 1535 499.7 1535.7 498.7 1536.4 493.6 1537.1 493.5 1537.8 499.3 1538.4 500.1 1539.1 500.1 1540.5 492.5 1541.2 498 1541.9 500.5 1544.7 500.7 1545.4 501.1 1547.5 501.1 1547.7 501.6 1201.0 450.6Z"/>
<path d="M1194.2 449.5 1195 452.7 1195.4 451.9 1195.9 452.4 1196.3 451.5 1196.7 448.9 1198.4 453.2 1198.8 452.8 1199.2 453.6 1199.6 453 1200 454.2 1200.4 451.9 1200.9 454.1 1201.3 452 1201.7 451.9 1202.5 453.3 1202.9 453.1 1203.4 454.8 1203.8 453.7 1204.2 454.6 1205 451.7 1205.4 452.1 1205.8 454.5 1206.3 453.2 1206.7 453.3 1207.5 455.4 1207.9 453.8 1208.8 454.2 1209.2 455.4 1210.4 453.1 1211.7 454 1212.1 455.5 1212.9 456.3 1213.3 453.4 1213.8 455.9 1215 456.5 1215.4 455.9 1216.7 456.6 1217.1 456.3 1217.5 457 1218.3 455.6 1219.2 456.9 1220 457.2 1222.1 456.1 1223.3 457.2 1223.7 457.1 1224.2 457.8 1225 457.3 1225.4 456.2 1225.8 457.4 1226.7 458.1 1227.1 457.6 1228.7 458 1229.6 458.7 1231.6 458.1 1232.5 459.1 1232.9 458.5 1234.6 459.6 1235 459.2 1235.4 459.6 1235.8 459.2 1237.5 459.8 1238.7 459.5 1240 460 1240.4 459.8 1240.8 460.3 1242.9 459.9 1243.3 460.7 1244.1 460.4 1246.2 461.1 1247 460.7 1249.1 461.6 1249.5 461.3 1250.4 461.8 1252.9 462.2 1253.3 461.9 1257 462.9 1258.7 462.7 1259.5 463.2 1260.4 462.9 1260.8 463.4 1261.2 463.1 1261.6 463.4 1262.8 463.2 1263.3 463.7 1264.9 464 1265.8 463.7 1269.9 464.7 1274.9 465.1 1277 465.8 1279.9 465.9 1281.2 466.4 1281.6 466.2 1282.4 466.6 1282.8 466.4 1286.1 467.2 1287.4 467.3 1287.8 467 1290.3 467.7 1293.2 467.8 1293.6 468.3 1298.2 468.6 1298.6 469 1305.3 469.7 1309.9 470.6 1310.7 470.4 1311.5 470.9 1314.9 471 1318.2 471.9 1321.1 471.9 1321.5 472.4 1324.4 472.8 1324.8 472.5 1328.6 473.4 1330.7 473.6 1331.1 472.9 1331.9 473.9 1336.5 474.5 1336.9 474.3 1337.7 474.7 1338.1 474.5 1341.1 475.2 1342.3 475.1 1346.9 476.1 1347.7 475.6 1348.1 476.2 1349 476 1350.6 476.6 1352.7 476.7 1353.1 474 1354 441.8 1354.8 472.4 1355.2 477 1355.6 477.3 1359.4 477.9 1359.8 477.6 1360.2 478 1362.4 478 1370.7 479.6 1372.1 479.2 1372.8 479.9 1378.4 480.7 1381.1 480.6 1382.5 481.3 1383.9 481.2 1386 481.8 1386.7 481.4 1387.4 482.1 1390.8 482.1 1392.2 482.7 1395 483.2 1396.4 482.8 1397.1 481.3 1397.8 480.9 1398.5 483 1399.2 483.6 1402.6 483.8 1404.7 484.6 1410.3 485.4 1411.7 485.2 1415.1 486.1 1416.5 486 1417.2 486.4 1417.9 486 1418.6 486.5 1422.7 487.2 1424.8 487.1 1426.9 487.8 1444.9 490.2 1447 490.8 1449.1 490.7 1449.8 491.2 1453.9 491.5 1458.8 492.6 1459.5 492.1 1460.9 492.9 1462.3 492.8 1463 493.2 1463.7 492.9 1464.3 493.3 1467.8 493.9 1472 494.1 1472.7 494.6 1481 495.8 1481.7 495.5 1485.8 496.5 1486.5 496.2 1493.5 497.6 1494.2 497 1494.9 497.6 1495.6 497 1496.2 493 1496.9 492.6 1497.6 497.2 1498.3 498.4 1501.1 498.8 1501.8 498.6 1512.2 500.4 1512.9 500 1515 500.7 1517.7 499.8 1519.1 498.1 1521.2 497.3 1524.7 501.3 1526.1 502.1 1528.1 502.7 1528.8 502.2 1529.5 499.9 1530.2 500.3 1530.9 502.8 1531.6 503.2 1533 503.1 1534.4 503.6 1540.6 504.5 1540.9 504.7 1194.2 453.7Z"/>
<path d="M1187.4 453.8 1187.8 451.5 1188.2 455.6 1189 450.6 1189.9 453.6 1190.3 454.4 1190.7 454.5 1191.5 456.6 1191.9 456.2 1192.4 457.1 1192.8 456.4 1193.2 457.3 1193.6 454.8 1194 457.2 1194.4 457.3 1194.8 456.4 1195.3 457.7 1195.7 457.3 1196.1 454.6 1196.5 457.8 1197.3 457.1 1197.8 456 1198.2 457.9 1198.6 458.1 1199.8 457.2 1201.1 457.3 1201.5 458.7 1201.9 457.6 1202.3 458.7 1203.2 457.6 1203.6 458.8 1204.4 457 1204.8 457.7 1205.7 456.9 1206.1 457.9 1207.3 458.7 1207.7 459.6 1208.2 459.1 1208.6 459.3 1209 457.7 1209.4 457.9 1210.2 459.8 1211.5 459.9 1211.9 459.3 1212.7 460.3 1213.6 459.5 1214 460.6 1214.4 459.4 1215.7 460.8 1216.9 460.5 1217.3 460.9 1218.6 460.5 1219.4 461.4 1219.8 460.3 1220.2 461.2 1220.6 460.7 1221.5 460.8 1221.9 461.3 1222.3 460.7 1222.7 461.7 1223.1 461.8 1223.6 461 1224 461.9 1225.2 461.5 1226.5 462.2 1226.9 461.8 1227.3 462.2 1228.5 462.2 1229 462.6 1231 463 1232.7 462.5 1235.2 463.6 1236.9 463.4 1237.3 464 1237.7 463.7 1238.9 464.1 1240.2 463.8 1241 464.5 1242.3 464.2 1242.7 464.8 1243.5 464.5 1247.3 465.1 1248.1 465.5 1248.9 465.4 1253.5 466.4 1255.2 466.2 1255.6 466.6 1256.4 466.1 1256.8 466.9 1261.4 467.2 1263.5 467.9 1264.3 467.6 1268.1 468.5 1268.5 468.2 1268.9 468.6 1269.3 468.2 1270.2 468.9 1272.6 468.9 1274.3 469.4 1276.4 468.9 1277.6 467.7 1279.7 467 1282.2 469.8 1283.5 470.5 1283.9 470.3 1284.3 470.9 1285.1 470.6 1287.2 471.4 1288 471 1288.5 471.5 1288.9 471.2 1289.3 471.6 1293.9 472.3 1294.7 471.9 1295.1 472.5 1296.8 472.4 1299.3 473.1 1300.1 472.7 1300.9 473.4 1301.4 473.1 1303 473.7 1303.9 473.5 1304.3 473.9 1306.3 474.1 1306.8 473.9 1313.8 475.3 1314.3 475 1314.7 475.4 1318.4 475.9 1318.8 475.7 1319.2 476.1 1320.1 476 1320.5 476.3 1323.4 476.3 1324.2 476.8 1326.3 477.1 1326.7 476.9 1327.6 477.3 1329.6 477.3 1333 478.1 1333.4 477.8 1334.2 478.3 1335.1 477.9 1335.5 478.4 1337.1 478.7 1337.6 478.3 1338 478.9 1339.2 478.6 1339.6 479 1340 478.6 1340.5 479.2 1345 479.8 1345.5 479.3 1345.9 475.3 1346.7 446.7 1347.5 477.1 1348 479.6 1348.4 479.8 1349.6 478.8 1350 477.7 1352.1 475.4 1352.5 475.4 1354.9 479.2 1356.3 480.6 1357.7 481.5 1359 481.5 1359.7 482 1362.5 481.9 1363.2 482.4 1364.6 482.7 1367.4 482.8 1379.8 484.9 1380.5 484.7 1392.3 486.8 1396.5 487 1397.2 487.5 1397.9 487.3 1401.3 488.2 1404.1 487.7 1405.5 488.7 1406.2 488.6 1412.4 489.8 1413.1 489.6 1415.2 490.1 1416.6 490 1417.3 490.5 1423.5 491.1 1424.2 491.6 1426.3 491.6 1432.5 492.7 1433.2 492.4 1433.9 492.9 1434.6 492.7 1437.4 493.4 1438.1 493.1 1438.8 493.7 1440.9 494 1441.6 493.9 1442.9 488 1444.3 494.2 1445.7 494.6 1457.5 496.4 1458.2 495.6 1458.9 491.7 1459.6 492.9 1460.3 496.4 1461 496.7 1461.7 496.8 1463.1 493.5 1463.7 496.3 1464.4 497.2 1465.8 497.3 1466.5 497.7 1467.2 497 1467.9 493.8 1468.6 494.8 1469.3 497.5 1470 498.2 1471.4 498.2 1472.1 498.6 1472.8 498.2 1474.8 499 1485.2 500.5 1485.9 500.3 1492.9 501.6 1494.3 501.3 1495.6 502 1498.4 502.4 1499.8 502.3 1501.2 502.9 1504.7 503.1 1510.9 504.2 1512.3 504 1513 504.5 1515.8 504.6 1519.2 505.5 1521.3 505.3 1522.7 506 1533.8 507.5 1534.1 507.7 1187.4 456.7Z"/>
<path d="M1180.5 459.6 1180.9 459 1181.4 455.7 1182.2 459.4 1183.4 459.1 1183.8 456.9 1184.3 459.8 1184.7 458.7 1185.1 459.4 1185.5 459.4 1185.9 457.4 1186.8 460.6 1187.6 458.7 1188 460.3 1189.3 460.5 1189.7 459.3 1190.1 459.6 1190.9 457.1 1191.8 459.8 1192.6 461.1 1193.4 461.2 1193.8 460.6 1194.7 461.8 1195.5 458.8 1196.3 461.1 1196.7 460.6 1197.6 461.7 1198 460.5 1199.7 462.1 1200.1 461.4 1200.5 461.9 1200.9 461.3 1201.7 462.2 1202.6 460.5 1203 461.8 1203.4 461.1 1204.2 462.5 1204.7 461.2 1205.1 462.4 1205.5 462.1 1206.3 463.3 1207.1 463.6 1208 462.5 1208.8 463.5 1209.2 463.1 1210.9 464.1 1211.7 463.5 1212.6 464.2 1213 463.3 1214.2 464.4 1215.5 464.1 1215.9 464.7 1216.7 464.4 1217.1 464.9 1218.8 465.3 1220 464.8 1220.9 465.6 1221.3 465.2 1224.2 466.1 1224.6 465.5 1225.9 466.4 1226.7 466.1 1227.5 466.6 1228.4 466.3 1230.9 467.1 1231.3 466.8 1233.4 467.2 1234.2 467.6 1235.9 467.4 1240 468.5 1240.4 468.1 1240.8 468.5 1241.3 468.3 1241.7 468.7 1242.5 468.4 1249.2 469.9 1252.9 469.9 1253.3 470.4 1257.5 471.1 1259.2 470.9 1259.6 471.4 1263.3 471.9 1265 471.7 1266.2 472.4 1269.1 472.7 1269.6 472.4 1270.4 473 1272.9 472.9 1273.3 473.3 1275 473.4 1275.4 473.7 1275.8 473.7 1276.2 473.1 1276.6 473.7 1277.5 474 1277.9 473.7 1278.7 474.2 1279.1 474 1280.4 474.4 1280.8 474.1 1285.4 475.2 1285.8 474.8 1286.6 475.4 1287.4 475 1287.9 475.4 1291.6 476.1 1292 475.8 1292.9 476.3 1293.3 475.7 1294.1 476.4 1295.8 476.7 1297.8 476.6 1299.5 477.3 1299.9 477 1300.3 477.4 1300.8 477.1 1302 477.7 1304.9 478.1 1305.7 478.1 1306.2 477.8 1306.6 478.2 1309.5 478.6 1309.9 478.3 1310.7 478.9 1312.4 479.1 1312.8 478.8 1313.2 479.2 1313.7 478.9 1314.1 479.4 1315.7 479.6 1316.1 479.3 1317 479.9 1318.6 479.7 1319.9 480.3 1321.6 480.1 1322 480.5 1323.6 480.3 1324.1 480.9 1327.4 481 1328.2 481.5 1330.7 481.8 1331.1 481.6 1331.5 481.9 1334 482.4 1334.5 482.1 1336.1 482.5 1337 482.3 1338.2 482.8 1338.6 482.7 1339 481.7 1339.9 454.3 1340.7 476.6 1341.1 482.5 1341.5 483.3 1341.9 482.9 1342.8 478.3 1343.2 478.3 1344 483.1 1345.3 484 1350.1 484.4 1355.7 485.5 1357.1 485.4 1358.4 485.9 1361.9 486.2 1362.6 486.6 1366.1 486.7 1367.5 487.2 1368.8 487.1 1371.6 487.7 1372.3 487.5 1373 488 1373.7 486.9 1374.4 484.3 1375.8 488.2 1378.6 488.5 1379.2 489 1379.9 488.8 1413.2 494 1413.9 493.7 1416 494.4 1416.7 494.1 1417.4 494.6 1418.1 494.4 1420.2 495 1421.5 494.6 1422.2 495.3 1425 495.3 1427.1 496 1427.8 495.7 1428.5 496.2 1433.3 496.7 1436.8 497.5 1437.5 497.2 1438.9 497.8 1439.6 497.5 1447.2 499 1447.9 498.6 1448.6 499.2 1450 499 1450.7 499.5 1452.1 499.4 1461.1 501 1462.5 501 1463.8 501.4 1464.5 501.2 1472.2 502.6 1472.9 502.4 1473.6 502.8 1479.1 503.5 1479.8 503.3 1481.9 503.6 1483.3 502.9 1485.3 500.2 1486.7 495.8 1488.1 503.2 1489.5 504.7 1490.2 503.5 1490.9 499.4 1492.3 505.4 1493 505.7 1501.3 507 1502 506.6 1504.1 507.3 1504.8 507 1506.8 507.6 1508.2 507.4 1509.6 508.2 1522.1 509.7 1522.8 510.1 1526.9 510.7 1527.2 510.8 1180.5 459.8Z"/>
<path d="M1173.7 462.1 1174.1 458.4 1174.5 461.5 1174.9 461.4 1175.3 462.6 1176.2 459.8 1176.6 461.8 1177 460.7 1177.4 460.8 1177.8 462.2 1178.3 459.4 1179.1 462.5 1179.5 462.2 1180.3 463.2 1180.8 462.2 1181.2 463.5 1181.6 463.5 1182 460.6 1182.4 463.3 1182.8 462 1183.2 463.7 1183.7 462 1184.1 463.9 1184.5 464.2 1185.3 462.4 1185.7 464.3 1186.6 464.6 1187 464.1 1188.2 464.4 1189.1 463.9 1189.5 465 1190.7 463.4 1191.2 464.6 1192 464.3 1192.4 465.1 1192.8 464.6 1193.2 465.4 1193.6 465 1194.1 465.5 1194.9 464.7 1195.3 465.3 1196.6 464.8 1197.8 466.2 1198.2 465.8 1198.6 466.4 1199.9 465.6 1201.1 466.7 1201.6 466.1 1203.6 466.2 1204.1 467.3 1207 467.1 1207.4 467.6 1208.6 467.4 1209.9 468.1 1210.3 467.8 1213.6 468.4 1214.5 467.7 1215.7 468.7 1217.4 469.1 1218.2 468.7 1219 469.2 1221.5 469.7 1221.9 469 1222.4 462.7 1223.2 324.1 1224 436.3 1224.4 467 1224.9 470 1225.3 469.8 1225.7 470.4 1226.1 470.2 1226.9 470.5 1229.4 470.4 1230.3 471 1231.1 470.8 1233.2 471.5 1235.3 471.4 1235.7 471.9 1239 472.5 1239.8 472 1244 473.2 1247.7 473.4 1248.2 473.8 1250.2 473.7 1255.6 474.9 1256.1 474.4 1257.3 475 1257.7 474.6 1259 475.3 1261.5 475.3 1262.3 475.9 1262.7 475.6 1269.4 476.9 1270.2 476.6 1271 477.2 1271.9 476.8 1274.4 477.6 1276 477.6 1279.4 478.4 1280.2 478.1 1281 478.6 1281.9 478.4 1283.1 478.9 1290.2 480 1291 479.8 1292.7 480.3 1293.9 480.2 1295.2 480.7 1295.6 480.5 1296.8 480.9 1298.5 480.8 1299.7 481.4 1300.6 481.2 1301 481.6 1304.7 482.1 1305.1 481.8 1305.6 482.2 1306.8 482.1 1307.6 482.6 1310.1 482.5 1311.4 483.1 1312.6 483 1313.5 483.4 1315.1 483.6 1315.5 483.3 1316 483.7 1320.5 484.4 1321 483.9 1322.6 484.7 1323.9 484.6 1324.3 485 1325.1 484.6 1325.5 485.2 1326.4 485.3 1327.2 485 1328 485.5 1328.4 485 1328.9 485.6 1333.4 486.3 1334.3 486.1 1335.1 486.5 1336.4 486.4 1337.6 479.8 1338.4 485.4 1338.8 486.8 1339.3 487.1 1342.6 487.6 1343.3 487.4 1344 487.9 1346.8 488 1348.1 488.5 1349.5 488.3 1354.4 489.4 1355.8 489.3 1364.8 491 1366.2 490.8 1366.9 491.2 1374.5 492.1 1378.6 493 1380.7 493.3 1381.4 493 1382.8 493.5 1383.5 493.3 1384.2 493.8 1391.1 494.8 1391.8 494 1393.2 488.1 1393.9 493.4 1394.6 495.2 1396 495.5 1396.7 495.3 1401.5 496.3 1402.9 496.1 1403.6 496.6 1414 498.2 1414.7 497.9 1416.8 498.6 1418.2 498.2 1419.6 499 1422.3 499.4 1428.6 500.3 1430 500.1 1430.7 500.6 1434.1 500.8 1434.8 501.3 1441.7 501.8 1446.6 502.9 1447.3 502.6 1448 503.1 1448.7 502.9 1455.6 504.3 1457.7 504.1 1458.4 504.7 1460.5 505 1461.9 504.6 1462.6 505.3 1464.6 505.2 1465.3 505.6 1468.1 505.6 1470.2 504.2 1471.6 504.3 1475 507 1482 508.1 1483.4 507.8 1484.7 508.6 1488.9 508.9 1491.7 509.6 1493.1 509.6 1494.4 508.9 1497.2 505.2 1497.9 505.4 1500.7 510.5 1503.5 511.3 1520.1 513.5 1520.4 513.9 1173.7 462.9Z"/>
<path d="M1166.8 465.5 1167.3 464.5 1167.7 465.6 1168.1 465.5 1168.5 463.6 1168.9 465.8 1169.3 461.7 1169.8 462 1170.2 460.4 1170.6 464 1171 463.9 1171.8 465 1172.2 464.7 1172.7 466.4 1173.1 465 1174.3 466.7 1175.2 465.2 1176.4 467 1176.8 466.2 1177.2 466.1 1177.7 467.2 1178.1 466.8 1178.5 467.2 1178.9 467 1179.3 466.4 1180.2 467.4 1181 467.2 1181.8 467.9 1182.2 467.1 1183.1 467.8 1183.5 467 1184.3 467.1 1185.1 467.5 1185.6 468.5 1186 466.3 1187.2 468.8 1187.6 468 1188.1 468.5 1188.5 468.2 1190.1 468.9 1190.6 467.2 1191.8 469 1193.1 469.3 1193.5 468.5 1194.7 469.7 1195.5 469.5 1197.2 470.1 1199.7 470.1 1200.5 470.5 1201 470.1 1202.2 470.9 1203.5 470.6 1205.1 471.3 1205.5 470.9 1205.9 471.4 1207.2 471.4 1207.6 471.9 1208 471.3 1210.1 472.3 1211.4 472 1213 472.3 1213.4 472.7 1217.2 473.2 1217.6 472.9 1218.8 473.4 1219.3 473 1219.7 473.4 1221.8 472.4 1222.6 471.5 1224.7 470.3 1225.5 470.8 1228.4 474.4 1235.1 475.9 1241.3 476.7 1241.7 476.2 1242.6 476.9 1247.6 477.7 1248 477.4 1250 478.1 1252.1 477.9 1252.5 478.5 1256.7 478.8 1258.8 479.4 1260.4 479.3 1261.7 479.8 1262.1 479.5 1264.2 480.2 1272.9 481.5 1274.2 481.3 1275.4 481.9 1280.8 482.6 1281.3 482.4 1281.7 482.8 1282.5 482.6 1282.9 483 1284.6 482.9 1285.4 483.4 1289.2 483.6 1300 485.5 1301.6 485.4 1302.9 485.9 1306.6 486.5 1312.9 486.9 1314.1 487.6 1317.4 487.9 1317.9 487.5 1319.1 488.2 1319.5 488 1319.9 488.4 1322.9 488.8 1323.3 488.4 1324.1 489 1337.8 491 1340.6 490.5 1343.4 488.6 1345.5 489.3 1347.5 491.3 1349.6 492.5 1351.7 493.1 1352.4 492.9 1353.1 493.3 1355.9 493.4 1358.6 494 1359.3 493.8 1361.4 494.5 1362.1 494.2 1363.5 494.8 1368.3 495.6 1370.4 495.5 1376 496.6 1378 496.6 1378.7 497 1379.4 496.8 1382.9 497.6 1383.6 497.4 1386.4 498.2 1388.5 498.2 1400.2 500.2 1403.7 500.3 1412.7 502.1 1413.4 501.9 1414.8 502.3 1417.6 501.6 1418.3 501.1 1421 496.9 1421.7 497.1 1423.1 498.5 1423.8 497.9 1424.5 498.9 1425.2 502.2 1425.9 503.3 1428.7 504.4 1433.5 504.9 1434.9 500 1435.6 504.2 1436.3 505.3 1437.7 505.7 1439.8 505.5 1441.1 506 1441.8 505.9 1442.5 506.5 1444.6 506.4 1446.7 507.1 1450.9 507.4 1464 509.6 1468.9 509.9 1471.7 510.8 1480.7 511.7 1481.4 512.1 1482.1 511.4 1483.4 504.1 1484.1 510.6 1484.8 512.5 1491.8 513.5 1492.5 513.8 1498.7 514.3 1499.4 514.8 1513.3 516.7 1513.5 516.9 1166.8 465.9Z"/>
<path d="M1160 467.4 1160.4 467.8 1161.2 466.6 1161.7 467.2 1162.1 466.6 1162.5 469 1163.3 467.1 1164.2 417.4 1164.6 423.4 1165.4 467.4 1166.7 469.5 1167.1 466.8 1167.5 467 1168.3 469.7 1170 469.6 1170.4 470.4 1170.8 470.1 1171.6 470.5 1172.5 469.2 1172.9 470.5 1173.7 470.8 1174.1 469.7 1175 469.4 1175.4 469.6 1175.8 471 1176.6 470.8 1177.1 471.2 1177.5 469.8 1177.9 469.9 1178.7 471.1 1179.1 470.1 1179.6 471.3 1180 471.8 1180.4 471.2 1180.8 471.9 1181.6 471.3 1182.5 471.8 1182.9 471.2 1183.3 472.1 1183.7 471.2 1184.5 472.2 1185 471.6 1185.4 472.3 1186.2 472 1187 472.8 1187.5 471.8 1187.9 472.4 1190.8 472.9 1191.6 473.5 1192 472.9 1192.5 473.5 1193.3 472.9 1193.7 473.8 1194.1 473.5 1195.8 474.1 1196.2 473.8 1198.3 474.6 1199.5 474.4 1201.2 474.9 1201.6 474.6 1202.9 474.8 1203.3 475.2 1204.1 475 1205.3 475.6 1205.8 475.3 1209.9 476.1 1210.8 475.8 1211.6 476.5 1212.8 476.2 1213.3 476.5 1214.5 476.4 1214.9 476.9 1215.3 476.6 1215.7 477.1 1219.1 477.7 1219.9 477 1220.3 477.8 1220.7 477.5 1222 478.1 1222.8 477.8 1223.2 478.2 1226.6 478.6 1227.4 478.3 1228.2 479 1229.1 478.8 1232 479.5 1233.2 479.2 1234.5 479.9 1237 480.2 1237.8 479.9 1238.2 480.4 1241.5 481 1242.8 480.8 1244.9 481.4 1245.3 481 1246.1 481.6 1248.6 481.7 1250.3 482.2 1251.1 482.3 1251.5 481.9 1252.8 482.6 1254 482.4 1254.4 482.8 1256.9 482.8 1259 483.5 1259.4 483.2 1261.1 483.9 1268.2 484.6 1275.7 486 1277.7 486.2 1278.2 485.7 1278.6 486.3 1279.4 486.5 1280.2 486.2 1281.1 486.7 1282.7 487 1283.1 486.7 1284.8 487.4 1286.1 487.3 1302.3 489.9 1303.1 489.6 1306.9 490.6 1308.1 490.5 1309.4 484.6 1310.6 490.6 1312.3 491.4 1312.7 491.2 1314.8 491.7 1315.2 491.5 1315.6 491.9 1316.4 491.4 1316.8 491.9 1317.3 491.7 1318.5 492.3 1320.6 492.6 1321.4 492.3 1323.5 493 1323.9 492.7 1324.3 493.1 1325.2 492.9 1326 493.3 1326.4 493 1327.5 493.5 1330.3 492.8 1331 492.1 1333.1 491.2 1337.9 494.8 1340 495.5 1342.8 495.4 1344.2 496 1347.6 496.5 1348.3 496.1 1349.7 496.9 1366.4 499 1367.7 499.5 1378.8 500.9 1380.9 501.4 1382.3 501.2 1383.7 498.4 1384.4 501 1385.1 502 1386.5 502 1392.7 503.2 1393.4 502.9 1394.1 503.4 1398.3 503.7 1400.3 504.3 1403.1 504.3 1406.6 505.2 1408 505 1410.7 505.9 1411.4 505.4 1412.8 506.2 1413.5 506 1419.7 507.2 1421.1 507 1422.5 507.6 1426 508.1 1427.4 507.9 1431.5 508.8 1432.2 508.5 1434.3 509.3 1440.5 510.2 1442.6 510.2 1444 510.8 1447.5 511 1453 512.1 1453.7 511.8 1455.8 512.5 1460.7 512.9 1471.8 514.8 1473.1 514.7 1480.8 516.2 1482.2 516 1482.8 516.5 1487.7 516.9 1494.6 518.2 1495.3 517.9 1496.7 511.2 1497.4 516.9 1498.1 518.7 1501.6 519.2 1502.3 519 1503 519.4 1504.3 519.4 1506.4 519.9 1506.7 520.0 1160.0 469.0Z"/>
</g>
<g stroke="#c0c3c7" stroke-width="1" stroke-dasharray="2 5" fill="none"><path d="M83.1 700.7 H957.1"/><path d="M83.1 749.5 H957.1"/><path d="M83.1 798.3 H957.1"/><path d="M170.5 676.3 V847.0"/><path d="M257.9 676.3 V847.0"/><path d="M345.3 676.3 V847.0"/><path d="M432.7 676.3 V847.0"/><path d="M520.1 676.3 V847.0"/><path d="M607.5 676.3 V847.0"/><path d="M694.9 676.3 V847.0"/><path d="M782.3 676.3 V847.0"/><path d="M869.7 676.3 V847.0"/><path d="M957.1 676.3 V847.0"/></g>
<path d="M83.1 676.3 V847.0 H957.1" stroke="#b9c0c7" stroke-width="1.2" fill="none"/>
<text transform="translate(80.5,701.4) scale(0.88,1)" font-size="10.5" text-anchor="end" fill="#3a4452" stroke="#3a4452" stroke-width="0.28" font-weight="normal" font-style="normal">1.5</text>
<text transform="translate(80.5,750.2) scale(0.88,1)" font-size="10.5" text-anchor="end" fill="#3a4452" stroke="#3a4452" stroke-width="0.28" font-weight="normal" font-style="normal">1</text>
<text transform="translate(80.5,799.0) scale(0.88,1)" font-size="10.5" text-anchor="end" fill="#3a4452" stroke="#3a4452" stroke-width="0.28" font-weight="normal" font-style="normal">0.5</text>
<text transform="translate(80.5,847.8) scale(0.88,1)" font-size="10.5" text-anchor="end" fill="#3a4452" stroke="#3a4452" stroke-width="0.28" font-weight="normal" font-style="normal">0</text>
<clipPath id="cp3"><rect x="47" y="640" width="916" height="250"/></clipPath><g clip-path="url(#cp3)">
<text transform="translate(83.1,858.6) scale(0.87,1)" font-size="10.5" text-anchor="middle" fill="#3a4452" stroke="#3a4452" stroke-width="0.28" font-weight="normal" font-style="normal">0</text>
<text transform="translate(170.5,858.6) scale(0.87,1)" font-size="10.5" text-anchor="middle" fill="#3a4452" stroke="#3a4452" stroke-width="0.28" font-weight="normal" font-style="normal">200</text>
<text transform="translate(257.9,858.6) scale(0.87,1)" font-size="10.5" text-anchor="middle" fill="#3a4452" stroke="#3a4452" stroke-width="0.28" font-weight="normal" font-style="normal">400</text>
<text transform="translate(345.3,858.6) scale(0.87,1)" font-size="10.5" text-anchor="middle" fill="#3a4452" stroke="#3a4452" stroke-width="0.28" font-weight="normal" font-style="normal">600</text>
<text transform="translate(432.7,858.6) scale(0.87,1)" font-size="10.5" text-anchor="middle" fill="#3a4452" stroke="#3a4452" stroke-width="0.28" font-weight="normal" font-style="normal">800</text>
<text transform="translate(520.1,858.6) scale(0.87,1)" font-size="10.5" text-anchor="middle" fill="#3a4452" stroke="#3a4452" stroke-width="0.28" font-weight="normal" font-style="normal">1000</text>
<text transform="translate(607.5,858.6) scale(0.87,1)" font-size="10.5" text-anchor="middle" fill="#3a4452" stroke="#3a4452" stroke-width="0.28" font-weight="normal" font-style="normal">1200</text>
<text transform="translate(694.9,858.6) scale(0.87,1)" font-size="10.5" text-anchor="middle" fill="#3a4452" stroke="#3a4452" stroke-width="0.28" font-weight="normal" font-style="normal">1400</text>
<text transform="translate(782.3,858.6) scale(0.87,1)" font-size="10.5" text-anchor="middle" fill="#3a4452" stroke="#3a4452" stroke-width="0.28" font-weight="normal" font-style="normal">1600</text>
<text transform="translate(869.7,858.6) scale(0.87,1)" font-size="10.5" text-anchor="middle" fill="#3a4452" stroke="#3a4452" stroke-width="0.28" font-weight="normal" font-style="normal">1800</text>
<text transform="translate(957.1,858.6) scale(0.87,1)" font-size="10.5" text-anchor="middle" fill="#3a4452" stroke="#3a4452" stroke-width="0.28" font-weight="normal" font-style="normal">2000</text>
</g>
<text transform="translate(54.0,879.4) scale(0.87,1)" font-size="12.2" text-anchor="start" fill="#3a4452" stroke="#3a4452" stroke-width="0.28" font-weight="normal" font-style="normal">Displacement (µm RMS)</text>
<text transform="translate(956.6,880.2) scale(0.87,1)" font-size="12.2" text-anchor="end" fill="#3a4452" stroke="#3a4452" stroke-width="0.28" font-weight="normal" font-style="normal">Freq. (Hz)</text>
<path d="M83.1 847.1 84 692.9 84.8 809.8 85.4 803.4 85.9 806.8 86.4 744 86.9 797.8 87.5 802.9 88 828.3 88.5 796 89 825.8 89.6 826.1 90.1 782.1 90.6 803.8 91.1 786.4 91.7 842 92.2 842.9 92.7 841.7 93.8 805.2 94.3 798.1 94.8 830.6 95.3 836.8 95.9 813.2 96.4 831.8 96.9 810.7 97.4 843.5 98 843 98.5 841.2 99 829.2 99.5 845.2 100.6 828.5 101.1 826.8 101.6 835.5 102.2 827.8 102.7 829.1 103.2 824.7 103.7 841.8 104.3 841.9 104.8 833.2 105.8 834.3 106.3 826.5 106.9 827.1 107.4 840.3 107.9 832.3 108.4 831.1 109 836 110 837.6 110.5 835 111.1 837.4 111.6 833.3 112.1 834.4 112.6 833.7 113.2 836.3 113.7 832.7 114.2 833.9 114.7 833.3 115.3 840.3 115.8 841.6 116.3 835.7 116.8 834.4 117.4 837.1 117.9 836.5 118.4 836.7 118.9 836 119.5 837 120 841.2 121.6 845.7 122.1 841.7 122.6 842.2 123.1 838.4 123.7 840.1 124.2 838.5 124.7 838.5 125.2 841.9 126.3 841 126.8 844.8 127.3 842.6 127.8 845.6 128.4 840.3 128.9 846.1 129.4 840.6 129.9 846.3 130.5 840.9 131 846 132 842.4 133.1 845.3 134.1 844.6 134.7 845.8 135.2 845.8 135.7 840.2 136.2 841.9 136.8 839.7 137.3 844.7 137.8 842.5 138.3 844 138.9 842.8 139.4 844 140.4 843 141 841.7 141.5 843.1 142 841.5 142.5 844.8 143.1 843.9 143.6 844.2 144.1 841.6 144.6 842.1 145.2 842 145.7 845.1 146.2 845.4 147.3 843.3 147.8 846.1 148.3 845.7 148.8 843.8 149.3 845.6 149.9 842.7 150.4 842.9 150.9 841.2 152 842.2 152.5 844.2 153 843.5 153.5 845.7 154.1 842.8 154.6 843.4 155.1 841.9 155.6 844.1 156.2 843.2 156.7 845.1 157.2 843.1 157.7 845.1 158.3 843.9 158.8 843.6 159.8 844 160.9 842.9 161.4 844.5 161.9 844.5 162.5 843.9 163 845.6 163.5 843.1 164 843.2 164.6 845.1 165.6 843.3 166.7 846 167.2 845.9 167.7 843.5 168.2 846.1 168.8 842.5 169.3 845.6 169.8 846.1 170.3 843.3 170.8 846 171.4 843.6 171.9 843.7 172.4 844 172.9 846.9 173.5 843.2 174.5 843.7 175 842.7 175.6 845 176.6 843.6 177.1 845.5 177.7 843.2 178.2 846.5 178.7 843.2 179.2 844.4 179.8 843.5 180.3 845.9 180.8 843.7 181.3 843.8 181.9 843.4 182.4 845.8 182.9 845.6 183.4 843.6 184 844.6 184.5 844.7 185 843.9 186.1 844.9 186.6 846.2 187.1 843.9 187.6 845.4 188.2 844.7 188.7 845.6 189.2 844.5 189.7 846 190.3 846.2 190.8 844.4 191.3 844.9 191.8 844.3 192.9 844.1 193.4 846.8 193.9 845.7 194.4 846 195.5 844.2 196 844.3 196.5 846 197.1 846 197.6 844.8 198.1 846.5 199.2 843.9 200.2 844.5 200.7 843.9 201.3 846.3 201.8 846.9 202.3 844.8 202.8 844.8 203.4 846.1 203.9 844.8 204.4 846.1 204.9 845.5 205.5 846.2 206 845.8 206.5 844.3 207 846 207.6 845.2 208.1 846.1 208.6 845.2 209.7 846.2 210.2 845.9 210.7 844.6 211.8 845.2 212.3 844.7 212.8 846.7 213.3 846.4 213.9 844.8 214.4 845.7 218.4 844.5 219.4 846.1 221.4 845.4 222.4 844.6 223.4 846.7 224.4 844.5 228.4 846.1 229.5 845 231.5 845.3 232.5 846.2 234.5 845.4 235.5 846.8 236.5 845.5 237.5 845.6 239.5 845 241.5 846.2 242.5 845.1 243.5 846.4 245.5 845.2 246.5 846 247.5 845.3 248.5 846.5 249.6 844.8 251.6 846 252.6 845.7 254.6 846.4 255.6 845.2 257.6 845.8 259.6 845.4 262.6 846.3 264.6 845.4 265.6 845.8 267.6 845.1 269.7 846.6 270.7 846.2 271.7 845.1 272.7 845.1 273.7 846.1 274.7 845.6 275.7 846 278.7 845.7 279.7 846.9 280.7 845.4 282.7 846.1 283.7 845.4 284.7 846.4 285.7 845.5 289.8 846.3 290.8 845.3 291.8 846.5 292.8 846.7 293.8 845.7 294.8 845.7 295.8 846.3 296.8 845.6 297.8 846.1 298.8 845.3 302.8 846.9 304.8 845.6 306.8 846.8 308.9 845.9 309.9 846.3 313.9 845.7 314.9 846.9 318.9 845.3 320.9 846.4 321.9 845.9 323.9 846.7 324.9 845.3 326.9 846.3 329 846 330 845.3 331 846.5 332 846 335 846.3 336 845.8 337 846.4 339 846 340 846.7 341 845.6 343 846.6 344 846.2 345 846.8 346 846 348.1 846.2 350.1 845.6 351.1 846.2 352.1 846 353.1 846.7 354.1 845.6 355.1 846.3 357.1 845.7 363.1 846.6 364.1 845.5 365.1 846.5 367.1 845.8 369.2 846.5 370.2 845.5 371.2 846.3 372.2 845.7 373.2 846.8 374.2 846.2 375.2 846.6 376.2 846 377.2 846.6 379.2 845.8 381.2 846.5 386.2 845.9 387.3 846.8 390.3 846.4 391.3 845.9 392.3 846.9 396.3 845.8 398.3 845.9 400.3 846.6 402.3 846.1 403.3 846.8 404.3 846 407.4 846.1 408.4 846.5 410.4 845.7 411.4 846.5 413.4 846.9 415.4 846.2 416.4 846.8 417.4 846.1 419.4 846.6 422.4 846.3 424.4 846.6 425.4 846 428.5 846.3 429.5 847 430.5 845.6 431.5 846.3 432.5 845.8 434.5 846.8 437.5 846 441.5 846.2 444.5 845.7 445.5 846.3 447.6 845.8 448.6 846.5 449.6 846.5 453.6 846.1 454.6 846.5 455.6 846 457.6 846.6 458.6 845.8 459.6 846.5 461.6 846.7 462.6 846.3 463.6 846.8 464.6 845.8 465.6 846.5 468.7 846.2 470.7 846.6 473.7 846.2 475.7 846.6 476.7 845.6 477.7 846.6 478.7 845.7 479.7 846.9 480.7 846 485.8 846.7 488.8 845.9 489.8 846.4 490.8 845.7 492.8 846.8 493.8 846 494.8 846.7 497.8 846.1 499.8 846.6 501.8 846 503.8 846.7 505.9 845.9 506.9 846.9 507.9 845.9 509.9 846.5 510.9 846 511.9 846.5 512.9 846 516.9 846.6 522.9 846.5 523.9 847 525 846.2 526 846.6 527 846 528 846.7 529 846.8 530 846.2 533 846.2 534 845.7 537 846.4 538 845.9 540 846.7 541 846.1 542 846.6 545.1 846 547.1 846.4 548.1 846 549.1 846.7 551.1 846.1 555.1 846.7 556.1 846.6 557.1 845.9 558.1 846.2 559.1 846 561.1 846.7 565.2 846.4 566.2 846.9 567.2 846.4 569.2 846.7 570.2 846.3 573.2 846.2 574.2 846.8 575.2 846 576.2 846 577.2 847 583.2 846.5 585.3 846.9 587.3 846.1 588.3 846.5 589.3 845.9 590.3 846.3 591.3 845.9 592.3 846.8 593.3 846.1 594.3 846.1 596.3 846.8 597.3 845.9 598.3 846.8 601.3 846.5 602.3 846.8 603.3 846.2 605.4 846.2 606.4 846.7 608.4 846.7 609.4 846.2 610.4 846.7 611.4 845.9 612.4 846.6 615.4 846.3 616.4 846.8 618.4 846.1 619.4 846.9 620.4 846 622.4 846.6 625.5 846.4 626.5 846.8 627.5 846.3 629.5 846.3 631.5 846.8 632.5 846.7 633.5 846.1 634.5 846.7 636.5 846 638.5 846.8 639.5 846.2 640.5 846.8 641.5 846.3 642.5 846.7 643.6 846 645.6 846 646.6 846.5 648.6 846 649.6 847 651.6 846 655.6 846.7 657.6 846.1 658.6 846.8 659.6 846.5 661.6 846.7 662.6 846 663.7 847 664.7 846.1 667.7 846.9 670.7 846.2 672.7 846.6 676.7 846.2 678.7 846.9 679.7 846 681.7 847 684.8 846.5 686.8 846.7 687.8 846 688.8 846.8 689.8 846.5 690.8 846.7 691.8 846.3 692.8 846.9 693.8 846.4 695.8 846.5 696.8 847 697.8 846.3 698.8 846.7 699.8 846.2 701.8 846.7 702.9 846.2 707.9 846.8 708.9 846 711.9 846.7 712.9 846.3 714.9 846.5 715.9 847 716.9 846.3 717.9 846.9 719.9 846.2 720.9 847 722 846.1 725 846.8 726 846.3 727 846.6 728 846.1 733 846.8 734 846 736 846.7 737 846.2 738 846.9 739 846.2 742.1 846.7 743.1 846.2 744.1 846.8 745.1 846.9 746.1 846 747.1 847.1 748.1 846.6 749.1 847 750.1 846.2 751.1 846.7 753.1 846.8 754.1 846.3 757.1 846.8 758.1 846.5 759.1 846.7 760.1 846.1 761.1 846.1 764.2 846.6 765.2 846.1 767.2 846.2 771.2 846.8 773.2 845.9 776.2 846.8 779.2 846.1 780.2 846.8 781.3 846.2 782.3 846.8 783.3 846.1 784.3 846.1 786.3 846.9 787.3 846.6 788.3 847 789.3 846.3 790.3 847 792.3 846.4 793.3 846.9 795.3 846.9 797.3 846.4 799.3 846.7 800.3 846.4 801.4 846.8 805.4 846 806.4 846.9 807.4 846.8 808.4 846 809.4 846.7 811.4 847 812.4 846.2 813.4 846.9 815.4 845.9 816.4 846.8 818.4 846.5 819.4 846 820.5 846.6 821.5 846.1 822.5 846.7 823.5 846.3 824.5 846.7 828.5 846.2 829.5 846.7 833.5 847 834.5 846.1 835.5 846.8 838.5 846.7 840.6 846.1 841.6 846.8 842.6 846.3 844.6 847 847.6 846 848.6 846.9 849.6 846.4 850.6 846.7 853.6 846.2 854.6 846.5 856.6 846.1 857.6 846.8 861.7 846 864.7 846.9 865.7 846.1 866.7 846.6 869.7 846.9 870.7 846.3 872.7 846.1 873.7 846.6 874.7 846.1 877.7 846.7 878.7 846 879.8 847 881.8 847 883.8 846.3 887.8 846.1 888.8 846.9 890.8 846.2 891.8 846.8 893.8 846.6 894.8 846 897.8 846.9 900.9 846.3 905.9 846.6 906.9 846.2 907.9 846.9 909.9 846.1 912.9 846.6 913.9 846 914.9 846.6 915.9 846.3 917.9 846.9 923 846.5 924 846.9 925 846.2 926 846.5 927 846.1 928 846.9 929 846.3 931 846.4 932 846.8 934 846.3 936 847 938 846.5 939.1 846.9 940.1 846.3 942.1 846.1 944.1 846.7 945.1 846 946.1 846.7 947.1 846.2 948.1 846.8 949.1 846.2 950.1 846.9 956.1 846.4" stroke="#40579a" stroke-width="1" fill="none"/>
<rect x="83.5" y="676.3" width="31" height="15.7" fill="#dcc6f0"/>
<text transform="translate(99.0,688.0) scale(0.87,1)" font-size="10.5" text-anchor="middle" fill="#3a3452" stroke="#3a3452" stroke-width="0.28" font-weight="normal" font-style="normal">Speed</text>
<g stroke="#c0c3c7" stroke-width="1" stroke-dasharray="2 5" fill="none"><path d="M83.1 1004.6 H955.8"/><path d="M83.1 1059.3 H955.8"/><path d="M83.1 1114.0 H955.8"/><path d="M192.4 955.7 V1126.1"/><path d="M301.7 955.7 V1126.1"/><path d="M411.0 955.7 V1126.1"/><path d="M520.3 955.7 V1126.1"/><path d="M629.6 955.7 V1126.1"/><path d="M738.9 955.7 V1126.1"/><path d="M848.2 955.7 V1126.1"/></g>
<path d="M83.1 955.7 V1126.1 H955.8" stroke="#b9c0c7" stroke-width="1.2" fill="none"/>
<text transform="translate(80.5,1005.2) scale(0.88,1)" font-size="10.5" text-anchor="end" fill="#3a4452" stroke="#3a4452" stroke-width="0.28" font-weight="normal" font-style="normal">-1235</text>
<text transform="translate(80.5,1059.9) scale(0.88,1)" font-size="10.5" text-anchor="end" fill="#3a4452" stroke="#3a4452" stroke-width="0.28" font-weight="normal" font-style="normal">-1240</text>
<text transform="translate(80.5,1114.6) scale(0.88,1)" font-size="10.5" text-anchor="end" fill="#3a4452" stroke="#3a4452" stroke-width="0.28" font-weight="normal" font-style="normal">-1245</text>
<text transform="translate(83.1,1137.9) scale(0.87,1)" font-size="10.5" text-anchor="middle" fill="#3a4452" stroke="#3a4452" stroke-width="0.28" font-weight="normal" font-style="normal">0</text>
<text transform="translate(192.4,1137.9) scale(0.87,1)" font-size="10.5" text-anchor="middle" fill="#3a4452" stroke="#3a4452" stroke-width="0.28" font-weight="normal" font-style="normal">100</text>
<text transform="translate(301.7,1137.9) scale(0.87,1)" font-size="10.5" text-anchor="middle" fill="#3a4452" stroke="#3a4452" stroke-width="0.28" font-weight="normal" font-style="normal">200</text>
<text transform="translate(411.0,1137.9) scale(0.87,1)" font-size="10.5" text-anchor="middle" fill="#3a4452" stroke="#3a4452" stroke-width="0.28" font-weight="normal" font-style="normal">300</text>
<text transform="translate(520.3,1137.9) scale(0.87,1)" font-size="10.5" text-anchor="middle" fill="#3a4452" stroke="#3a4452" stroke-width="0.28" font-weight="normal" font-style="normal">400</text>
<text transform="translate(629.6,1137.9) scale(0.87,1)" font-size="10.5" text-anchor="middle" fill="#3a4452" stroke="#3a4452" stroke-width="0.28" font-weight="normal" font-style="normal">500</text>
<text transform="translate(738.9,1137.9) scale(0.87,1)" font-size="10.5" text-anchor="middle" fill="#3a4452" stroke="#3a4452" stroke-width="0.28" font-weight="normal" font-style="normal">600</text>
<text transform="translate(848.2,1137.9) scale(0.87,1)" font-size="10.5" text-anchor="middle" fill="#3a4452" stroke="#3a4452" stroke-width="0.28" font-weight="normal" font-style="normal">700</text>
<text transform="translate(53.8,1159.2) scale(0.87,1)" font-size="12.2" text-anchor="start" fill="#3a4452" stroke="#3a4452" stroke-width="0.28" font-weight="normal" font-style="normal">Displacement (µm)</text>
<text transform="translate(955.8,1159.2) scale(0.87,1)" font-size="12.2" text-anchor="end" fill="#3a4452" stroke="#3a4452" stroke-width="0.28" font-weight="normal" font-style="normal">Time (ms)</text>
<path d="M83.1 982.9 83.8 992.2 84.2 984.7 84.5 990.7 84.9 989.1 85.3 993.7 85.6 990.8 86.7 1004.4 87.1 1001.5 87.4 1004.9 88.1 994.1 88.5 995.1 88.9 1003.7 89.2 989.6 89.6 987.4 90 989.2 90.3 986.9 90.7 994.3 91 985.1 91.4 984.4 91.8 987.2 92.1 985.4 92.5 980 92.8 980.4 93.2 971.4 93.9 979 94.3 969 94.6 975.9 95.7 981.5 96.4 994.1 96.8 994.5 97.2 990.8 97.5 996.1 97.9 990.9 99 1005.2 99.3 1005.4 99.7 999.7 100.4 999.8 100.8 1009.4 101.1 997 101.5 1001.1 102.6 989.4 102.9 991.9 103.3 988.1 103.7 988.9 104 986.3 104.4 988.6 104.7 985.2 105.1 986.6 105.5 982.6 106.2 987.3 106.5 983 106.9 984.3 107.3 993.5 107.6 983.7 108.3 988.3 109.8 984.9 110.2 985 110.5 987.6 110.9 984 111.6 992.1 112 989.7 112.3 990.4 112.7 981.2 113 984.8 113.4 983.7 114.1 975.3 114.5 975.3 114.8 973.3 115.6 957.2 115.9 962.4 116.3 961.3 117 970.4 117.4 959.8 117.7 973.4 118.4 970 118.8 975.7 119.5 966.4 119.9 980.9 120.3 975.2 121 983.2 121.3 980.1 121.7 990.8 122.4 988.7 122.8 992.3 123.1 988.8 123.5 995.3 123.9 986.5 124.2 992.4 124.6 993.5 124.9 992.4 125.3 993.2 125.7 992.3 126 986.1 126.4 987 126.7 986.5 127.1 982.7 127.5 986 127.8 982.7 128.2 986.2 128.5 983.5 129.3 984.3 130.4 975.1 130.7 976.6 131.1 975.9 131.4 976.2 131.8 980.2 132.5 973.4 132.9 974.4 133.2 973 133.6 976.2 134 971.5 134.7 979.6 135 973.9 135.4 977.6 136.1 966.6 137.2 982 137.6 971.9 137.9 980.8 138.3 978.8 138.6 978.9 139 984.2 139.7 982.5 140.1 990.9 140.4 984.8 140.8 989.2 141.2 981.9 141.5 990.7 142.3 985.1 143.3 992.7 144.1 985.8 144.4 993.7 144.8 992.8 145.5 1000.1 146.6 993.4 147.3 1000.5 147.7 997.3 148.7 1007.4 149.1 1002.7 149.8 1005.5 150.9 1002.2 151.3 1003 151.6 1000.2 152 1008.6 153.1 1004.4 153.4 1009.8 154.2 1000.5 154.5 1007.6 154.9 998.4 155.2 1009.7 155.6 1009.4 156 1005.4 156.7 1012.6 157 1010.9 157.4 1012.5 157.8 1007.7 158.1 1010.3 158.5 1009.9 159.6 1005 159.9 1007.9 161 1001.5 161.4 1003.6 162.5 999.5 162.8 1000.4 163.5 994.3 163.9 1003.1 164.3 998.9 164.6 1001.3 165.3 986.1 165.7 997 166.4 988.6 167.1 990 167.5 992.1 167.9 986.9 168.2 995.9 168.9 982.9 169.3 987.2 169.7 985.7 170 991.8 170.4 985.3 170.7 998.3 171.1 994.7 171.5 1001.5 171.8 1000.6 172.2 1001.3 172.6 1009.9 172.9 1003.2 173.3 1012.2 173.6 1013.1 174 1009.3 174.7 1014.9 175.1 1004.4 175.4 1011.8 175.8 1002.2 176.5 1005.1 176.9 998.2 177.2 998.1 177.6 999.1 178 993.7 178.3 1005.7 179 994 179.4 995.6 180.5 995.5 180.8 994.8 181.2 984.7 181.6 993.5 181.9 994 182.3 986.1 182.7 985.3 183 991.6 183.4 992.3 184.1 984.6 185.2 997 185.5 994.2 186.6 1009.4 187 1004.9 188.1 1018.2 188.4 1015.8 188.8 1018 189.1 1017.8 189.5 1025.7 189.9 1021.8 190.2 1027.4 190.6 1025.8 191.3 1041.4 191.7 1032.4 192.4 1036.2 193.1 1033.2 193.5 1022.7 193.8 1036.6 194.6 1020.2 194.9 1020 195.3 1020.7 196 1018.6 196.4 1022.6 196.7 1010.6 197.1 1009.4 197.4 1013.3 198.2 1008.1 199.2 1024.7 199.6 1026.1 200 1022.9 200.3 1029.4 200.7 1024.2 201 1030.3 201.4 1023.6 201.8 1034.9 202.1 1034.7 202.8 1029.7 203.9 1034.9 204.7 1041.8 205.4 1033.7 205.7 1032.8 206.1 1034.3 206.5 1032.9 207.2 1038.7 207.5 1033 207.9 1034.4 208.3 1032.4 209 1039.3 209.3 1035.7 209.7 1036.7 210.1 1030.8 210.8 1039.9 211.1 1031.7 211.5 1045.1 212.6 1031.1 212.9 1035.7 213.3 1031.3 214.4 1040.5 214.8 1038.1 215.1 1043.5 215.5 1032.1 215.8 1037.5 216.6 1034.6 217.3 1043.5 218 1029.2 218.4 1038.9 218.7 1040.5 219.1 1040.1 219.8 1032.4 220.2 1036.3 220.5 1033.4 221.2 1043.8 222 1033.9 222.3 1039.5 222.7 1035 223.4 1039.8 223.8 1034.9 224.1 1034.7 224.5 1037.4 224.9 1033.8 225.6 1038.1 225.9 1032.7 226.3 1041.4 227 1035.4 227.4 1038.2 227.7 1032.2 228.5 1028.4 229.2 1039.2 229.5 1031.6 230.6 1034.1 231 1041.5 231.3 1032.7 232.1 1040.3 232.4 1031.6 233.5 1040.5 234.6 1038.1 235.3 1043.8 235.7 1040 236 1042 236.4 1040.7 237.5 1050.2 237.8 1046.9 238.6 1060.4 239.3 1053.4 239.6 1052.2 240 1053.3 240.4 1053.1 240.7 1050.7 241.1 1061.5 241.8 1054.7 242.2 1064 242.5 1063.5 242.9 1066 243.2 1058.9 243.6 1063.1 244.3 1046.7 245 1044.5 247.2 1025.6 247.9 1035.3 248.3 1030.4 248.7 1035.7 249.4 1034.5 249.7 1035.5 250.1 1040 250.5 1035.9 251.2 1045.6 251.9 1042.8 252.6 1050.9 253 1041.9 253.3 1048.2 253.7 1046.9 254.1 1056.1 254.4 1051.9 254.8 1061.2 255.1 1056 255.5 1068 256.2 1053 256.6 1060.9 257 1054.7 257.3 1058.2 257.7 1055.8 258 1058.9 258.8 1047.6 259.1 1057.1 259.8 1052.5 260.6 1058.5 260.9 1055.3 261.3 1054.8 261.6 1057.8 262 1052.2 263.1 1054 263.4 1056.2 263.8 1054.2 264.2 1054.4 264.5 1050.2 264.9 1056.3 265.2 1054.1 265.6 1057.6 266.7 1052.2 267.1 1057.1 267.4 1056.5 267.8 1039.9 268.5 1051.2 269.6 1045 269.9 1044.3 270.3 1045.3 270.7 1042.6 271 1046 271.4 1041.5 271.7 1046.5 272.1 1046.3 272.5 1044.4 272.8 1045.9 273.2 1054 273.5 1040.9 273.9 1043.9 274.6 1039 275 1040.3 275.3 1049.8 275.7 1039.2 276.1 1037.4 276.4 1041.4 276.8 1035.9 277.5 1040.2 277.9 1036.3 278.2 1038 279.3 1037.4 279.7 1037.6 280.4 1025.1 281.1 1036.2 281.8 1035.2 282.2 1041.9 282.6 1034.9 283.3 1041.8 283.6 1041.2 284 1043.9 285.1 1036.1 285.4 1044.6 286.2 1042 286.9 1034.4 287.3 1040.1 287.6 1038.2 288 1039.5 288.3 1051.1 288.7 1040.8 289.1 1048.8 289.8 1036.5 290.1 1050.2 290.5 1041.2 290.9 1044 291.2 1043.6 291.9 1040 292.3 1042.1 292.7 1040.6 293 1045.7 293.4 1043.5 293.7 1055.8 294.1 1045.9 294.8 1052.7 295.5 1045.3 296.3 1053.2 296.6 1055 297 1054.7 297.3 1044.6 297.7 1048.6 298.1 1047.5 298.8 1052.3 299.2 1052.7 299.5 1051.8 299.9 1057.4 300.6 1053.6 301 1058.4 301.3 1054.8 301.7 1063.6 302.4 1050.8 302.8 1063.9 303.1 1062.4 303.8 1065.3 304.9 1056 305.3 1057.2 305.6 1064.3 306.4 1059 308.2 1070.9 308.5 1070.7 308.9 1066.5 309.3 1070.6 310 1058.3 310.7 1060.3 311.4 1053.3 311.8 1058.2 312.5 1052.3 312.9 1055.4 313.2 1043.4 313.6 1047.7 313.9 1044.6 314.3 1047.7 314.7 1040.9 315.4 1046.3 315.7 1043.2 316.1 1050.4 316.5 1047.8 317.2 1045.9 317.5 1051.1 317.9 1048.4 318.3 1058.4 319 1054 319.7 1061.5 320.1 1054.7 320.4 1055.4 320.8 1065.4 321.5 1066.6 321.9 1070.2 323 1055.6 323.3 1060.9 324 1049.7 324.8 1062.4 325.1 1055.5 325.8 1067.9 326.2 1060.7 326.6 1060.1 327.3 1052.2 327.6 1053.8 328.4 1044.8 329.1 1049.7 329.5 1048.1 329.8 1049.9 330.2 1048.6 330.9 1036.8 331.3 1043.8 331.6 1043.6 332 1041.4 332.7 1029.9 333.8 1047.9 334.1 1040.5 336.3 1060.9 336.7 1052.6 337.4 1068.1 337.7 1066 338.1 1068.1 338.5 1067 338.8 1072.1 339.2 1072.6 339.6 1064.2 339.9 1066.9 340.3 1058 340.6 1055 341 1058.1 341.4 1054.7 341.7 1045.7 342.4 1055.6 342.8 1054.2 343.5 1045.1 344.2 1044.2 344.6 1041.6 345.7 1029.1 346 1037 346.4 1037.5 347.5 1049.8 347.8 1052.1 348.2 1051.1 348.6 1051 349.6 1067 350 1057.7 351.1 1071 351.8 1065.8 352.5 1076.2 353.3 1062 354 1079.7 354.3 1075.6 354.7 1078.2 355.4 1077.4 356.5 1069.7 356.9 1074.1 357.2 1068.7 357.6 1068.6 357.9 1066.9 358.3 1067 359 1071 359.4 1077.5 360.1 1062.3 361.2 1079.1 361.6 1071.8 361.9 1077.6 362.3 1078.4 362.6 1068.7 363 1074.4 363.4 1065.8 363.7 1076.1 364.4 1068 364.8 1072 365.2 1064.9 365.5 1067.6 365.9 1065.9 366.6 1076.8 367 1065.3 367.3 1066 367.7 1064.4 369.1 1053.3 369.5 1053.2 369.8 1054.2 370.6 1036.4 370.9 1046.6 371.3 1036.2 371.7 1037.6 372.7 1027.2 373.1 1030.9 373.5 1029.2 374.5 1012.6 375.3 1019.6 375.6 1020.8 376 1016.9 376.3 1018.9 376.7 1025.1 377.1 1019.3 378.1 1034.3 378.5 1025.4 379.2 1033.9 379.6 1027.9 380.7 1041.6 381 1037.8 382.1 1052.8 382.8 1045.2 383.2 1046.9 383.6 1046.3 384.3 1062.2 384.6 1050.8 385.4 1060.5 385.7 1057.3 386.1 1060.3 386.4 1056.7 386.8 1066.3 387.2 1065.8 387.5 1081.4 387.9 1063.9 388.2 1070.7 388.6 1070.7 389 1082.2 389.7 1066.1 390.4 1073.2 390.8 1067.8 391.1 1071.8 391.9 1068.4 392.2 1069.2 392.6 1075.3 392.9 1066.8 393.7 1076.8 394 1074.3 394.4 1074.1 394.7 1069.2 395.8 1067.6 396.2 1064.4 396.5 1064.5 396.9 1071.2 397.3 1069.2 397.6 1074.9 398 1075.3 398.7 1064.4 399.4 1070.1 399.8 1078.1 400.1 1070.9 401.2 1082.5 401.6 1076.5 401.9 1077.8 402.3 1077.2 402.7 1074.1 403 1082.6 403.4 1075.7 404.1 1078.9 404.5 1077 404.8 1076.8 405.6 1068.2 405.9 1075.7 406.3 1067.3 406.6 1070.6 407.4 1061.7 407.7 1063.2 408.4 1061.6 408.8 1062.4 409.5 1053.5 410.2 1057.5 410.6 1054.3 411 1054 411.3 1046.8 411.7 1052.6 412 1050.9 412.8 1058.8 413.1 1057.8 413.5 1051.6 413.9 1057.1 414.9 1043.1 415.3 1048 415.7 1047 416 1048.2 416.4 1047.2 416.7 1048.1 417.1 1055.5 417.5 1045.2 417.8 1046.9 418.5 1037.7 418.9 1038.2 419.3 1041.6 419.6 1038.3 420 1040.4 420.7 1052.4 421.4 1047.6 422.1 1061.2 422.5 1055.2 422.9 1062.3 423.2 1062.6 423.6 1058.9 424.3 1072.6 424.7 1065.2 425 1070.9 425.4 1067.3 425.8 1082.2 426.1 1079.6 426.5 1085 427.2 1075.6 428.3 1091.7 428.6 1084.5 429 1088.1 429.4 1083.7 429.7 1093.2 430.1 1082.4 430.4 1088.6 430.8 1077.5 431.2 1079.5 431.5 1074.7 431.9 1078.4 432.2 1070.3 433 1078.4 433.3 1072.1 433.7 1077.8 434.1 1070.6 434.4 1070.2 435.5 1084.3 435.9 1069.6 436.2 1079 436.6 1077 436.9 1084.8 437.3 1078.8 438 1076.3 438.4 1083.7 438.7 1077.2 439.1 1086.9 439.5 1084.1 439.8 1087.1 440.2 1084.1 440.5 1084.3 440.9 1087.7 441.6 1083.9 442.7 1095.5 443.1 1088.5 443.8 1092.1 444.2 1090.5 444.5 1090.9 444.9 1088.1 445.6 1090 446 1087.5 446.7 1099.1 447 1100.4 447.8 1101.6 448.1 1095 448.5 1095.8 448.8 1103.1 449.6 1095.6 449.9 1104.3 450.3 1103 450.6 1107.9 451 1101.4 451.4 1105.9 451.7 1103.7 452.4 1117.2 453.2 1111.2 453.5 1112.3 453.9 1111.6 454.3 1113.6 454.6 1111.6 455 1114.9 455.3 1113 455.7 1113.9 456.4 1114.3 457.1 1116.8 457.9 1105.6 458.2 1106.2 458.6 1105.5 458.9 1108 459.7 1101.1 460.4 1101.4 460.7 1095.1 461.5 1097.7 461.8 1097 462.5 1091.7 462.9 1094.6 463.3 1084.7 464 1096.6 464.3 1093.5 464.7 1098.4 465.1 1098.6 465.4 1098 466.2 1107.5 466.5 1102.1 466.9 1106.8 467.2 1105.2 467.6 1107.8 468 1104.7 468.7 1120.2 469.8 1102.5 470.1 1100.7 470.5 1106 470.8 1094.8 471.2 1098.9 471.9 1082.1 472.3 1099.1 473 1083.6 473.7 1096.5 474.1 1078 475.2 1086.9 475.5 1085.2 475.9 1074.1 476.3 1082.3 477 1077.2 477.7 1081.3 478.1 1091.3 478.4 1078.1 478.8 1078.8 479.1 1083.4 479.5 1077.4 479.9 1083.9 480.2 1079.2 480.6 1083.6 480.9 1080.7 481.3 1087.6 482 1080.9 482.4 1083 483.1 1077.5 483.5 1085.4 483.8 1075.1 484.2 1076.2 484.5 1076.1 484.9 1081.3 485.6 1084.4 486.4 1076.5 486.7 1084.9 487.1 1073.8 487.4 1075.1 487.8 1074.9 489.2 1065.5 489.6 1064.9 490 1066.2 490.3 1062 490.7 1067 491 1065.9 491.4 1066.3 491.8 1064.8 492.1 1072 492.8 1063.4 493.2 1074.1 493.6 1062.7 493.9 1073 494.6 1071 495 1064.4 496.1 1073.1 496.5 1065.5 496.8 1075.8 497.2 1068.6 497.5 1075.1 497.9 1061.9 498.3 1074.2 498.6 1074.3 499.3 1080.7 500.1 1072.6 500.8 1069.1 501.1 1069.5 501.5 1075 501.9 1066.1 502.6 1068.3 502.9 1068.4 503.3 1064.5 503.7 1068.6 504 1061.8 504.4 1061.7 504.7 1066.1 505.5 1053.9 505.8 1058.1 506.2 1047.8 506.6 1056.3 507.3 1045.1 508.4 1049 509.4 1040.9 509.8 1048 510.2 1045.8 510.5 1046.8 510.9 1039.5 511.6 1048.6 512 1041.8 512.7 1039.3 513 1043.2 513.8 1034.7 514.5 1048.9 514.8 1042.2 515.6 1039.1 515.9 1047.8 516.3 1040.7 516.6 1043.8 517 1042.7 517.4 1049.5 517.7 1039.8 518.1 1047.7 519.5 1032.9 520.3 1036.2 520.6 1031.6 521 1040.5 521.3 1035.4 521.7 1037.3 522.1 1026.4 522.4 1031.9 523.1 1024.8 523.5 1030.8 523.9 1031.7 524.2 1025.5 524.6 1028.1 524.9 1022.4 526 1025.5 526.4 1017.5 526.7 1020.6 527.5 1015.4 527.8 1021.6 528.9 1013.3 529.3 1018 530 1008.6 530.4 1010.1 530.7 1008 531.1 1008.1 531.4 1004.7 531.8 1006.9 532.2 1005.3 532.5 1006.7 532.9 998.9 533.2 1002.8 533.6 993.7 534 995.6 534.3 994.2 534.7 1001.2 535 995.1 535.4 999.3 535.8 990.7 536.1 995.7 536.5 992.7 536.8 983.5 537.2 986.8 537.6 983.7 537.9 986.6 538.3 976.9 538.7 980.5 539.4 974.5 540.1 989.4 540.8 983.8 541.5 990.6 541.9 986.6 542.3 994.1 542.6 991.3 543 992.7 543.3 1005.4 543.7 1003.7 544.4 1009.9 546.2 1041.1 546.9 1044 547.3 1040.2 547.7 1059.2 548 1058 548.4 1073.5 548.8 1063.9 549.1 1062.6 550.2 1087.1 551.6 1097.2 552.4 1084.8 552.7 1089.3 553.8 1080 554.2 1071.4 554.9 1074.8 555.2 1061 555.6 1068 556 1066.6 556.3 1068 556.7 1060.9 557 1063.6 557.8 1048.6 558.1 1055.2 558.5 1041.8 558.9 1051.4 559.2 1040.7 559.6 1044.9 559.9 1042.5 560.7 1048.5 561 1038.3 561.4 1047.2 562.1 1047 562.5 1054.5 562.8 1048.5 563.5 1056.8 563.9 1056.3 564.3 1058.1 565 1051.1 565.3 1052.8 565.7 1064.2 566.1 1065.5 566.4 1054.8 566.8 1057 567.1 1056.5 567.5 1060.4 567.9 1056.1 568.2 1057.8 568.9 1046.1 569.3 1050 569.7 1049.4 570.4 1042 570.8 1047.1 572.2 1029.5 572.6 1034.2 572.9 1025.6 573.3 1033 573.6 1034.5 574 1033.5 574.4 1034.1 574.7 1046.7 575.1 1048.5 575.8 1046.8 576.9 1060 577.2 1055.2 577.6 1055.3 578 1062.6 578.3 1059.3 579 1067.1 579.4 1062.8 579.8 1067.3 580.1 1064.3 580.5 1065.9 580.9 1070.6 581.6 1056 581.9 1064.4 582.3 1058.2 582.7 1063.1 583 1053.2 583.4 1053.8 583.7 1049.8 584.1 1055.4 584.8 1043.1 585.2 1047 586.3 1042.1 587 1045 587.7 1030.4 588.1 1033.7 588.4 1028.2 588.8 1030.4 589.1 1027.9 589.5 1028.3 590.2 1019.8 590.6 1027.3 591.3 1020.1 591.7 1023.2 592 1013.5 592.4 1017.9 592.8 1017.9 593.1 1012.6 593.5 1014.2 594.2 1011.1 594.9 1011 595.3 1006.5 595.6 1013.7 596.4 1010.5 596.7 1003.2 597.1 1007.9 597.4 1004.1 597.8 1008.6 599.6 1000 600 1001.4 600.3 996.6 600.7 997.9 601.4 987.5 601.8 988 602.1 990.9 602.5 986.3 602.9 988.4 603.6 987.1 603.9 980.1 604.3 980.1 604.7 986.3 605 979.2 605.4 982 605.7 980.6 606.1 984.9 606.5 976.9 606.8 978 607.2 974.6 607.9 983.8 608.6 970.7 609.3 988.2 609.7 986.9 610.1 978.8 610.8 990.8 611.2 986.6 611.5 993.9 611.9 991.2 612.6 993.5 613 987.3 613.3 995.6 613.7 993.3 614.8 997.9 615.1 994.2 615.8 1004.5 616.2 999.9 616.6 1001.7 616.9 1011.3 617.3 999.6 618 1008.1 618.4 1000.5 618.7 1007.3 619.1 997.7 619.4 998.1 619.8 996.6 620.2 996.4 620.9 991.7 621.2 994 621.6 991.2 622 999.2 622.7 985 623.8 994 624.1 986.4 624.5 984.1 624.9 985.7 625.2 977.1 625.6 987.3 626.3 981.5 626.7 989.6 627 979.8 628.1 988.2 628.8 979.2 629.5 983.1 629.9 982.3 630.3 977.1 630.6 984.1 631.3 975.4 631.7 975.7 632.1 981.4 632.4 975.7 632.8 976.7 633.2 968.1 633.5 969.1 633.9 964.7 634.2 968.9 634.6 969 635 962.8 635.7 977.6 636 973.7 636.4 979.9 636.8 971.8 637.1 971.6 637.8 979.8 638.2 975.6 639.6 988.8 640 985.2 640.4 987.9 640.7 984.1 641.1 988.1 641.8 990.3 642.2 996.5 642.9 984.3 643.6 986.9 644 986.8 644.7 976.4 645.8 983.2 646.5 977.4 646.9 978.3 647.2 974.5 647.6 980.5 647.9 973.4 648.7 980.4 649 971.5 649.4 974.5 650.1 970.4 650.5 975.2 650.8 972.1 651.2 981.7 651.9 968.8 652.3 974.3 653 968.3 653.7 972.2 654.4 965.5 654.8 972.5 655.2 971.8 655.5 967.4 656.2 972.1 656.6 970.8 657 962.8 657.3 975.2 658 981.7 658.8 972.5 660.2 985.5 660.6 984.8 660.9 980.3 661.3 986.4 661.6 986.2 662 995.7 662.4 989.4 662.7 989.5 663.1 987 663.8 994.4 664.2 983.6 664.5 988 664.9 984 665.3 984.3 665.6 992 666.7 983.6 667.8 992.2 668.1 980.2 668.5 984.7 668.9 982 669.2 983 669.6 993.6 669.9 981.2 670.3 988 670.7 981.6 671.4 994.9 671.7 986 672.1 987.3 672.5 980.5 672.8 984.3 673.2 981.4 673.5 983.3 673.9 980.9 674.6 984.1 675 984.4 675.4 988.5 675.7 983.3 676.1 988.6 677.9 980.6 678.2 972 679 982.4 679.7 979.4 680.4 986 680.8 983.6 681.5 988.8 681.8 989.8 682.2 988 682.9 994.9 683.3 994.9 685.8 1007.7 686.2 1007.7 686.5 1005.8 686.9 1001 687.3 1005.8 687.6 1006.4 688 1010.5 688.3 1010.5 688.7 1002.9 689.4 1007.2 690.1 1002.2 690.5 1006.3 691.2 1001.4 691.9 1006.8 692.3 1006.9 692.7 1009.4 693 1006.6 693.4 1008.4 693.7 1005.3 694.5 1016 694.8 1011.5 695.2 1011.3 695.6 1014.8 696.6 1005.4 697 1013.6 697.4 1000.1 698.1 1010.8 698.4 1000.4 698.8 1004.2 699.2 1004.4 699.5 1013.8 699.9 1008.8 700.2 1009.5 700.6 1008.3 701 1002.7 701.3 1010 701.7 1009.2 702 1009.7 702.4 1012.9 702.8 1000.7 703.1 1010.5 703.5 1007.7 704.2 1007 704.6 1017.4 704.9 1009.4 705.3 1010.8 705.7 1009.8 706 1015.5 706.7 994.5 707.1 1007.1 707.8 995.6 708.2 999.8 708.9 999.2 709.6 990.3 710 1001.2 710.3 998.7 710.7 1000.5 711.1 998.7 711.8 1012.4 712.5 1009.1 712.9 1014.6 713.6 1017.5 713.9 1011.7 714.3 1018.4 715 1011.4 716.1 1008.5 716.5 1011.9 716.8 1007.3 717.6 1008.7 717.9 999.4 718.6 1008.8 719 998.2 719.7 999.6 720.1 1004.4 720.4 992.7 721.2 1002.1 721.5 995.1 721.9 994.2 722.6 997.7 723.3 994.6 723.7 999.5 724 1000 724.8 996.3 725.1 1003.7 725.5 1000.7 725.8 1006 726.6 999.4 726.9 1015.1 727.3 1010.1 727.7 1011.4 728.4 1024.1 728.7 1025.4 729.1 1018.3 729.5 1028.4 729.8 1029.1 730.2 1025.8 730.5 1034.9 730.9 1035.1 731.3 1027.5 731.6 1039.8 732 1036.9 732.3 1038.1 733.1 1048.5 733.8 1047.1 734.1 1052.4 734.9 1039.4 735.2 1045 736.7 1024.6 737.4 1022.7 737.8 1016.7 738.5 1013.9 739.2 1019.5 739.9 1011 740.6 1020.8 741.4 1024.2 741.7 1020.3 742.1 1019.9 742.8 1029.7 743.2 1027 743.5 1029.5 743.9 1023.1 744.6 1020.1 745 1026.6 745.3 1027 745.7 1023.5 746 1023.8 746.4 1026.9 746.8 1018.6 747.5 1029 747.9 1023.4 748.2 1022.4 748.6 1027.3 749.3 1029.8 750 1023.6 751.8 1038.9 752.5 1038 752.9 1029.1 753.6 1038.3 754 1037.6 754.3 1031.8 755.1 1041.2 755.4 1035.8 755.8 1034.7 756.1 1038.1 756.9 1035.9 757.2 1036.1 757.6 1031.6 758 1043.7 758.3 1031.9 758.7 1030.7 759.4 1041.2 760.1 1033.9 760.5 1032.6 760.8 1035.4 761.2 1029.4 761.6 1038.9 761.9 1032.3 762.3 1034 762.6 1030.4 763 1033.1 763.7 1028.8 764.1 1035.6 764.4 1027.9 764.8 1032.6 765.5 1025.1 766.6 1033.2 767.3 1025.7 767.7 1029.1 768.1 1026.9 768.4 1027.5 769.1 1023.5 769.5 1037 769.9 1035.8 770.2 1027.3 770.6 1035.9 770.9 1035.2 771.3 1027.9 772.7 1036.2 773.1 1041.3 773.5 1037.5 773.8 1037.7 774.2 1029.7 774.9 1040 775.3 1033 775.6 1036.4 776 1035.1 776.3 1041.5 777.4 1047.9 778.1 1043.7 778.9 1046.3 779.2 1045 780 1051.7 780.7 1044.3 781.4 1055.2 782.1 1050.4 782.5 1061.6 782.8 1051.2 783.2 1058.5 783.9 1043.9 784.3 1043.5 784.6 1047.6 785.4 1032 785.7 1042 786.4 1030.1 786.8 1032.7 787.2 1028.3 787.5 1033.1 787.9 1030.5 788.2 1036.2 788.6 1028.3 789 1033.9 789.3 1033.9 789.7 1027.7 790.1 1035.4 790.4 1027.3 790.8 1033.8 791.1 1026.5 792.2 1037 792.6 1028.6 792.9 1037.1 793.3 1035.6 794 1040.8 794.7 1032.6 795.5 1041 795.8 1034.7 796.5 1044.6 796.9 1040.3 797.3 1046 797.6 1039.6 799.4 1048.8 799.8 1041.3 800.2 1050.7 800.9 1043.2 801.6 1055.4 802 1047.1 802.3 1054.5 803 1047.2 803.8 1054.9 804.1 1045.2 804.5 1049.6 804.8 1035.4 805.2 1050.6 805.9 1044.4 806.3 1046.8 806.6 1041.3 807.4 1039.4 808.1 1053.5 808.4 1044 808.8 1046 809.2 1043.7 809.5 1045.8 809.9 1041.9 811 1049 811.3 1048.4 811.7 1049.2 812.4 1039.5 812.8 1044.8 813.1 1042.8 813.9 1047.5 814.6 1039.4 815.3 1043.6 815.7 1040.7 816 1040.4 816.4 1044.7 816.7 1036.6 817.5 1049 817.8 1050.3 818.2 1049.4 818.5 1044.1 819.3 1052.1 820.4 1037.4 821.1 1042.8 821.4 1043 821.8 1052.8 822.5 1047.7 822.9 1050 823.2 1045.1 823.6 1053.2 824.3 1041 824.7 1047.8 825 1038.9 825.4 1043.6 826.1 1042.3 826.8 1042.6 827.2 1040.1 827.6 1048.4 827.9 1049.7 828.6 1047 829 1050 829.4 1044.5 829.7 1053.7 830.4 1043.6 831.2 1044.3 832.6 1055.6 833 1049.2 833.3 1053.9 833.7 1044.4 834.1 1052.6 834.4 1042.5 834.8 1051 835.1 1049.4 835.9 1056.8 837.3 1052.2 837.7 1057.5 838 1056.9 838.4 1051.5 838.7 1060.6 839.1 1055.7 839.5 1055.9 840.2 1059.3 840.5 1057 840.9 1060.5 841.3 1055.6 841.6 1062.5 842 1057.6 842.4 1058.5 842.7 1065.2 843.1 1065.8 843.4 1059.1 844.2 1066.3 844.5 1058.3 844.9 1064 845.2 1063.2 845.6 1058 846 1061.6 846.3 1059.2 846.7 1068.4 847 1068.4 847.4 1054.6 847.8 1062.2 848.1 1058.7 848.5 1060 848.8 1051.4 849.6 1058.6 850.3 1049.8 850.6 1049.7 851 1051.5 851.4 1051 851.7 1053 852.1 1044.9 852.8 1053.8 853.9 1043 854.6 1045.5 855 1038.8 855.3 1048.2 855.7 1040.1 856.4 1044.4 856.8 1036.1 857.1 1048.3 857.9 1041.1 858.2 1045.9 858.6 1039 858.9 1043.1 859.3 1038.2 860 1057.8 860.4 1049.4 860.7 1058 861.1 1052 861.8 1064.1 862.2 1050.3 863.3 1067.6 864 1061.5 864.7 1066.9 865.1 1066.5 865.4 1057 865.8 1056.9 866.5 1061.9 868 1045.4 868.3 1051.7 868.7 1052.1 869 1049.4 869.4 1051.3 869.8 1050 870.1 1042.3 870.5 1047.1 870.8 1043 871.2 1049.9 871.6 1043.2 872.3 1039.8 872.7 1044.6 873.4 1035.2 874.5 1042.3 874.8 1037.2 875.2 1046.5 875.9 1044.1 876.3 1047 876.6 1037.6 877 1047.6 877.7 1054.2 878.1 1047.9 878.8 1057.1 879.1 1055.3 879.5 1063.5 879.9 1055.9 880.2 1057.5 880.9 1057.9 881.7 1049.8 882 1048 882.4 1048.3 882.7 1043.9 883.5 1045.6 883.8 1036.5 884.2 1041.8 884.9 1034.1 885.6 1032 886 1034.1 887.1 1022.2 887.8 1041.6 888.5 1035.2 889.6 1053.4 890 1049 890.3 1053.5 890.7 1053 891 1062 891.8 1052.4 892.1 1067.6 892.5 1064.9 892.8 1073.6 893.2 1068.2 893.6 1068.3 893.9 1073 894.7 1068.8 895 1076.9 895.4 1068 896.1 1074.8 896.5 1066.3 896.8 1071.8 897.2 1059.9 897.5 1076.3 897.9 1075.8 898.3 1076.6 898.6 1068.8 899 1078.4 899.3 1069.8 900.1 1067.7 900.4 1069.8 901.1 1067.5 901.5 1072.1 901.9 1069.2 902.2 1071.6 902.6 1068.2 903.3 1073.1 903.7 1073.4 904 1069.1 904.8 1074.2 905.1 1066.6 906.2 1073.3 906.9 1069.3 907.6 1082 908 1073.2 908.7 1082 910.2 1052.7 910.5 1061.9 911.2 1052.6 911.6 1052.6 912.3 1048.5 913 1049.4 913.8 1037.7 914.1 1040.5 914.5 1033.1 914.9 1039.1 915.6 1018.1 915.9 1027.1 916.7 1019 917 1028 917.4 1017.3 918.1 1029.4 918.5 1029.7 918.8 1021.6 919.2 1035 919.5 1031.5 919.9 1039.2 920.3 1030.7 921 1036.8 921.3 1035.5 921.7 1036.9 922.4 1047.8 922.8 1046.9 923.1 1057.1 923.9 1049.5 924.6 1059.9 925 1052 925.3 1057.4 925.7 1058.7 926 1057.4 926.4 1062.7 926.8 1058.3 927.1 1059.1 927.8 1070.5 928.2 1069.6 928.6 1073.9 928.9 1069.3 929.3 1079.5 929.6 1077.9 930 1083 930.7 1072.6 931.1 1085.7 931.4 1072.7 931.8 1077.9 932.2 1070.6 932.5 1076.4 933.2 1073.3 933.6 1066.6 934 1079.2 934.7 1071 935.4 1079.7 935.8 1076.8 936.1 1080.6 936.5 1078.7 936.9 1081.5 937.2 1076.5 937.9 1080.7 938.3 1075.9 938.7 1081.6 939.4 1073.2 939.7 1080.9 940.1 1078.9 940.5 1080.3 941.2 1077.1 941.5 1072.2 941.9 1079.2 942.6 1072.2 943 1079.6 943.3 1067.5 943.7 1078.6 944.1 1073.2 944.4 1075.5 944.8 1068.4 945.1 1067.5 945.5 1074.6 945.9 1068.3 946.2 1069.9 946.6 1069.8 947.3 1058.6 948.4 1069.8 949.5 1057.3 949.8 1064.7 950.6 1055 950.9 1059.6 951.6 1062.1 952 1048.9 952.4 1055.6 952.7 1053.1 953.1 1053.7 953.4 1063 953.8 1056.3 954.2 1056 954.5 1046.8 955.6 1064.9 956 1056.7 956.7 1064.4" stroke="#40579a" stroke-width="1.35" fill="none" stroke-linejoin="round"/>
<path d="M314.3 956 V1126" stroke="#8fd3ec" stroke-width="1"/>
<path d="M317.5 956 V1126" stroke="#f0a6c8" stroke-width="1"/>
<path d="M855.2 956 V1126" stroke="#8fd3ec" stroke-width="1"/>
<path d="M858.3 956 V1126" stroke="#f0a6c8" stroke-width="1"/>
<path d="M309.6 955.7 L318.8 955.7 L314.3 963.5 Z" fill="#8fd3ec"/>
<path d="M313.5 964.5 L321.6 964.5 L317.5 956.5 Z" fill="#f0a6c8"/>
<rect x="984.5" y="656.4" width="10.3" height="13.2" rx="2" fill="#dfe2e5"/>
<text transform="translate(989.6,667.0) scale(0.9,1)" font-size="11" text-anchor="middle" fill="#222" stroke="#222" stroke-width="0.28" font-weight="normal" font-style="normal">X</text>
<text transform="translate(1000.4,667.0) scale(0.885,1)" font-size="11" text-anchor="start" fill="#3a4452" stroke="#3a4452" stroke-width="0.28" font-weight="normal" font-style="normal">LP_Turbine / MAD31CY005 / AM1</text>
<rect x="1161.6" y="656.4" width="10.6" height="13.2" rx="2" fill="#dfe2e5"/>
<text transform="translate(1166.9,667.0) scale(0.9,1)" font-size="11" text-anchor="middle" fill="#222" stroke="#222" stroke-width="0.28" font-weight="normal" font-style="normal">Y</text>
<text transform="translate(1178.0,667.0) scale(0.885,1)" font-size="11" text-anchor="start" fill="#3a4452" stroke="#3a4452" stroke-width="0.28" font-weight="normal" font-style="normal">LP_Turbine / MAD31CY010 / AM1</text>
<g stroke="#c0c3c7" stroke-width="1" stroke-dasharray="2 5" fill="none"><path d="M1008.7 777.2 H1425.3"/><path d="M1008.7 900.2 H1425.3"/><path d="M1008.7 1024.3 H1425.3"/><path d="M1094.6 677.4 V1126.6"/><path d="M1217.7 677.4 V1126.6"/><path d="M1341.5 677.4 V1126.6"/></g>
<path d="M1008.7 677.4 V1126.6 H1425.3" stroke="#b9c0c7" stroke-width="1.2" fill="none"/>
<text transform="translate(1006.0,778.0) scale(0.88,1)" font-size="10.5" text-anchor="end" fill="#3a4452" stroke="#3a4452" stroke-width="0.28" font-weight="normal" font-style="normal">2</text>
<text transform="translate(1006.0,901.0) scale(0.88,1)" font-size="10.5" text-anchor="end" fill="#3a4452" stroke="#3a4452" stroke-width="0.28" font-weight="normal" font-style="normal">0</text>
<text transform="translate(1006.0,1025.1) scale(0.88,1)" font-size="10.5" text-anchor="end" fill="#3a4452" stroke="#3a4452" stroke-width="0.28" font-weight="normal" font-style="normal">-2</text>
<text transform="translate(1094.6,1138.3) scale(0.87,1)" font-size="10.5" text-anchor="middle" fill="#3a4452" stroke="#3a4452" stroke-width="0.28" font-weight="normal" font-style="normal">-2</text>
<text transform="translate(1217.7,1138.3) scale(0.87,1)" font-size="10.5" text-anchor="middle" fill="#3a4452" stroke="#3a4452" stroke-width="0.28" font-weight="normal" font-style="normal">0</text>
<text transform="translate(1341.5,1138.3) scale(0.87,1)" font-size="10.5" text-anchor="middle" fill="#3a4452" stroke="#3a4452" stroke-width="0.28" font-weight="normal" font-style="normal">2</text>
<text transform="translate(980.7,1159.2) scale(0.87,1)" font-size="12.2" text-anchor="start" fill="#3a4452" stroke="#3a4452" stroke-width="0.28" font-weight="normal" font-style="normal">Displacement (µm)</text>
<path d="M1053.4 701.9 A15.2 15.2 0 1 0 1045.9 713.8" stroke="#cbcbcb" stroke-width="3.4" fill="none"/><circle cx="1038.3" cy="700.6" r="4" fill="#cbcbcb"/><path d="M1046.9 701.0 L1060.6 701.0 L1053.9 708.1 Z" fill="#cbcbcb"/>
<path d="M1411.7 949.4 1411.4 939.4 1410.6 929.3 1409.3 919.1 1407.5 908.9 1402.2 888.5 1396.3 871.5 1389 854.8 1378.6 835.2 1368.5 819.4 1354.9 801.2 1342.4 786.9 1326.2 771 1308.8 756.4 1293.6 745.4 1277.7 735.7 1258.1 725.6 1238.1 717.5 1217.8 711.4 1207.7 709.1 1197.5 707.3 1180.8 705.6 1164.4 705.3 1154.7 705.9 1145.2 707 1129.8 710 1120.8 712.5 1112.2 715.5 1103.8 719 1095.8 723 1088.1 727.5 1080.7 732.5 1069.3 741.8 1062.9 748 1057 754.6 1051.6 761.5 1046.6 768.9 1039.3 782 1033.4 796 1030.5 804.8 1028.1 813.8 1026.3 823.1 1025 832.6 1024.2 842.3 1023.9 852.1 1024.2 862.1 1025 872.2 1026.3 882.4 1028.1 892.6 1033.4 913 1039.3 930 1048.2 950 1057 966.3 1067.1 982.1 1080.7 1000.3 1095.8 1017.3 1109.4 1030.5 1126.8 1045.1 1142 1056.1 1157.9 1065.8 1177.5 1075.9 1197.5 1084 1217.8 1090.1 1227.9 1092.4 1238.1 1094.2 1254.8 1095.9 1271.2 1096.2 1280.9 1095.6 1290.4 1094.5 1299.7 1092.9 1308.8 1090.8 1317.7 1088.1 1326.2 1084.9 1334.5 1081.2 1342.4 1077.1 1354.9 1069 1361.9 1063.6 1368.5 1057.7 1378.6 1046.9 1387.4 1035.1 1392.1 1027.5 1396.3 1019.5 1402.2 1005.5 1405.1 996.7 1407.5 987.7 1409.3 978.4 1410.6 968.9 1411.4 959.2 1411.7 949.4Z" stroke="#40579a" stroke-width="1.1" fill="none"/>
<circle cx="1404.6" cy="896.7" r="3" fill="#40579a"/>
<circle cx="1030.2" cy="1107.2" r="16" fill="none" stroke="#d5dff0" stroke-width="1"/>
<path d="M1023 1100.5 L1030 1107.5" stroke="#e23a2a" stroke-width="1.3"/>
<path d="M1030 1107.5 L1037.5 1100.5" stroke="#5cc14a" stroke-width="1.3"/>
<text transform="translate(1017.5,1099.5) scale(0.9,1)" font-size="9.5" text-anchor="middle" fill="#777" stroke="#777" stroke-width="0.28" font-weight="normal" font-style="normal">X</text>
<text transform="translate(1043.0,1099.5) scale(0.9,1)" font-size="9.5" text-anchor="middle" fill="#777" stroke="#777" stroke-width="0.28" font-weight="normal" font-style="normal">Y</text>
<g stroke="#c0c3c7" stroke-width="1" stroke-dasharray="2 5" fill="none"><path d="M1465.4 724.0 H1882.6"/><path d="M1465.4 775.8 H1882.6"/><path d="M1465.4 827.6 H1882.6"/><path d="M1569.8 676.3 V876.1"/><path d="M1674.2 676.3 V876.1"/><path d="M1778.6 676.3 V876.1"/></g>
<path d="M1465.4 676.3 V876.1 H1882.6" stroke="#b9c0c7" stroke-width="1.2" fill="none"/>
<text transform="translate(1462.8,724.8) scale(0.88,1)" font-size="10.5" text-anchor="end" fill="#3a4452" stroke="#3a4452" stroke-width="0.28" font-weight="normal" font-style="normal">2</text>
<text transform="translate(1462.8,776.6) scale(0.88,1)" font-size="10.5" text-anchor="end" fill="#3a4452" stroke="#3a4452" stroke-width="0.28" font-weight="normal" font-style="normal">0</text>
<text transform="translate(1462.8,828.4) scale(0.88,1)" font-size="10.5" text-anchor="end" fill="#3a4452" stroke="#3a4452" stroke-width="0.28" font-weight="normal" font-style="normal">-2</text>
<text transform="translate(1465.4,887.6) scale(0.87,1)" font-size="10.5" text-anchor="middle" fill="#3a4452" stroke="#3a4452" stroke-width="0.28" font-weight="normal" font-style="normal">0</text>
<text transform="translate(1569.8,887.6) scale(0.87,1)" font-size="10.5" text-anchor="middle" fill="#3a4452" stroke="#3a4452" stroke-width="0.28" font-weight="normal" font-style="normal">200</text>
<text transform="translate(1674.2,887.6) scale(0.87,1)" font-size="10.5" text-anchor="middle" fill="#3a4452" stroke="#3a4452" stroke-width="0.28" font-weight="normal" font-style="normal">400</text>
<text transform="translate(1778.6,887.6) scale(0.87,1)" font-size="10.5" text-anchor="middle" fill="#3a4452" stroke="#3a4452" stroke-width="0.28" font-weight="normal" font-style="normal">600</text>
<text transform="translate(1883.0,908.9) scale(0.87,1)" font-size="12.2" text-anchor="end" fill="#3a4452" stroke="#3a4452" stroke-width="0.28" font-weight="normal" font-style="normal">Time (ms)</text>
<path d="M1577.5 676.3 V876" stroke="#f2a9cb" stroke-width="1.1"/>
<path d="M1835.9 676.3 V876" stroke="#f2a9cb" stroke-width="1.1"/>
<path d="M1465.4 697.9 1471.4 691.8 1476.4 688.1 1482.4 685.4 1487.4 684.6 1492.4 685.2 1498.4 687.7 1503.4 691.3 1509.4 697.2 1514.4 703.4 1519.4 710.7 1530.4 730 1540.4 750.4 1568.4 811.5 1576.4 827.2 1583.4 839.3 1592.4 852 1596.4 856.5 1600.4 860.3 1604.4 863.2 1608.4 865.3 1612.4 866.6 1616.4 867 1620.4 866.5 1624.4 865.1 1628.4 862.9 1632.4 859.9 1636.4 856 1640.4 851.4 1649.4 838.4 1656.4 826.2 1664.4 810.5 1691.4 751.5 1700.4 732.9 1709.4 716.4 1718.4 702.7 1723.4 696.6 1727.4 692.6 1731.4 689.3 1735.4 686.9 1740.4 685.1 1744.4 684.6 1748.4 685 1752.4 686.3 1755.4 687.8 1759.4 690.5 1766.4 697.3 1773.4 706.3 1780.4 717.4 1787.4 730.2 1794.4 744.3 1819.4 799.1 1828.4 817.8 1837.4 834.5 1846.4 848.3 1851.4 854.5 1855.4 858.6 1860.4 862.6 1864.4 864.9 1869.4 866.6 1873.4 867 1877.4 866.5 1882.4 864.6" stroke="#40579a" stroke-width="1.1" fill="none"/>
<rect x="1470.3" y="669.5" width="11.3" height="15.8" rx="2" fill="#dfe2e5"/>
<text transform="translate(1476.0,681.4) scale(0.9,1)" font-size="11" text-anchor="middle" fill="#222" stroke="#222" stroke-width="0.28" font-weight="normal" font-style="normal">X</text>
<g stroke="#c0c3c7" stroke-width="1" stroke-dasharray="2 5" fill="none"><path d="M1465.4 926.4 H1882.6"/><path d="M1465.4 959.6 H1882.6"/><path d="M1465.4 992.8 H1882.6"/><path d="M1465.4 1026.0 H1882.6"/><path d="M1465.4 1059.2 H1882.6"/><path d="M1465.4 1092.4 H1882.6"/><path d="M1569.8 926.6 V1125.8"/><path d="M1674.2 926.6 V1125.8"/><path d="M1778.6 926.6 V1125.8"/></g>
<path d="M1465.4 926.6 V1125.8 H1882.6" stroke="#b9c0c7" stroke-width="1.2" fill="none"/>
<text transform="translate(1462.8,927.2) scale(0.88,1)" font-size="10.5" text-anchor="end" fill="#3a4452" stroke="#3a4452" stroke-width="0.28" font-weight="normal" font-style="normal">3</text>
<text transform="translate(1462.8,960.4) scale(0.88,1)" font-size="10.5" text-anchor="end" fill="#3a4452" stroke="#3a4452" stroke-width="0.28" font-weight="normal" font-style="normal">2</text>
<text transform="translate(1462.8,993.6) scale(0.88,1)" font-size="10.5" text-anchor="end" fill="#3a4452" stroke="#3a4452" stroke-width="0.28" font-weight="normal" font-style="normal">1</text>
<text transform="translate(1462.8,1026.8) scale(0.88,1)" font-size="10.5" text-anchor="end" fill="#3a4452" stroke="#3a4452" stroke-width="0.28" font-weight="normal" font-style="normal">0</text>
<text transform="translate(1462.8,1060.0) scale(0.88,1)" font-size="10.5" text-anchor="end" fill="#3a4452" stroke="#3a4452" stroke-width="0.28" font-weight="normal" font-style="normal">-1</text>
<text transform="translate(1462.8,1093.2) scale(0.88,1)" font-size="10.5" text-anchor="end" fill="#3a4452" stroke="#3a4452" stroke-width="0.28" font-weight="normal" font-style="normal">-2</text>
<text transform="translate(1462.8,1126.4) scale(0.88,1)" font-size="10.5" text-anchor="end" fill="#3a4452" stroke="#3a4452" stroke-width="0.28" font-weight="normal" font-style="normal">-3</text>
<text transform="translate(1465.4,1138.0) scale(0.87,1)" font-size="10.5" text-anchor="middle" fill="#3a4452" stroke="#3a4452" stroke-width="0.28" font-weight="normal" font-style="normal">0</text>
<text transform="translate(1569.8,1138.0) scale(0.87,1)" font-size="10.5" text-anchor="middle" fill="#3a4452" stroke="#3a4452" stroke-width="0.28" font-weight="normal" font-style="normal">200</text>
<text transform="translate(1674.2,1138.0) scale(0.87,1)" font-size="10.5" text-anchor="middle" fill="#3a4452" stroke="#3a4452" stroke-width="0.28" font-weight="normal" font-style="normal">400</text>
<text transform="translate(1778.6,1138.0) scale(0.87,1)" font-size="10.5" text-anchor="middle" fill="#3a4452" stroke="#3a4452" stroke-width="0.28" font-weight="normal" font-style="normal">600</text>
<text transform="translate(1883.3,1159.1) scale(0.87,1)" font-size="12.2" text-anchor="end" fill="#3a4452" stroke="#3a4452" stroke-width="0.28" font-weight="normal" font-style="normal">Time (ms)</text>
<path d="M1577.7 926.6 V1125.8" stroke="#f2a9cb" stroke-width="1.1"/>
<path d="M1835.9 926.6 V1125.8" stroke="#f2a9cb" stroke-width="1.1"/>
<path d="M1465.4 1073.1 1476.4 1050.8 1503.4 991.9 1511.4 976.1 1518.4 963.9 1526.4 952.2 1530.4 947.3 1534.4 943.2 1538.4 939.9 1542.4 937.5 1546.4 935.9 1550.4 935.1 1553.4 935.1 1557.4 935.9 1561.4 937.5 1565.4 939.9 1569.4 943.2 1573.4 947.3 1581.4 957.7 1589.4 970.7 1597.4 985.8 1606.4 1004.6 1630.4 1057.1 1637.4 1071.2 1644.4 1084 1652.4 1096.5 1660.4 1106.4 1667.4 1112.4 1671.4 1114.8 1674.4 1116 1678.4 1116.9 1682.4 1116.9 1686.4 1116 1691.4 1113.7 1695.4 1110.9 1699.4 1107.3 1703.4 1102.9 1708.4 1096.4 1716.4 1083.8 1725.4 1067.1 1734.4 1048.4 1759.4 993.7 1766.4 979.7 1773.4 967.1 1781.4 954.7 1788.4 946.1 1795.4 939.9 1799.4 937.4 1802.4 936.1 1806.4 935.2 1810.4 935.1 1814.4 935.9 1819.4 938.1 1823.4 940.8 1827.4 944.3 1831.4 948.6 1836.4 955 1845.4 969.1 1854.4 986 1863.4 1004.8 1882.4 1046.7" stroke="#40579a" stroke-width="1.1" fill="none"/>
<rect x="1470" y="919.8" width="11.8" height="15.9" rx="2" fill="#dfe2e5"/>
<text transform="translate(1475.9,931.7) scale(0.9,1)" font-size="11" text-anchor="middle" fill="#222" stroke="#222" stroke-width="0.28" font-weight="normal" font-style="normal">Y</text>
<g fill="#5a5a5a"><rect x="1827.2" y="648.5" width="3.8" height="4" rx="0.5" transform="rotate(0 1829.1 656.8)"/><rect x="1827.2" y="648.5" width="3.8" height="4" rx="0.5" transform="rotate(60 1829.1 656.8)"/><rect x="1827.2" y="648.5" width="3.8" height="4" rx="0.5" transform="rotate(120 1829.1 656.8)"/><rect x="1827.2" y="648.5" width="3.8" height="4" rx="0.5" transform="rotate(180 1829.1 656.8)"/><rect x="1827.2" y="648.5" width="3.8" height="4" rx="0.5" transform="rotate(240 1829.1 656.8)"/><rect x="1827.2" y="648.5" width="3.8" height="4" rx="0.5" transform="rotate(300 1829.1 656.8)"/><circle cx="1829.1" cy="656.8" r="6.1"/></g><circle cx="1829.1" cy="656.8" r="3" fill="#fff"/>
<path d="M1846.8 651.6 L1857.5 662.2 M1857.5 651.6 L1846.8 662.2" stroke="#555" stroke-width="1.5"/>
<path d="M1870.5 662.5 L1875 658 M1877.2 655.8 L1881.7 651.3" stroke="#5a5a5a" stroke-width="1.6" fill="none"/><path d="M1883.7 649.3 L1878.6 649.6 L1883.4 654.4 Z M1868.5 664.5 L1868.8 659.4 L1873.6 664.2 Z" fill="#5a5a5a"/>
<path d="M986.8 1177 L996.2 1182.3 L986.8 1187.6 Z" fill="#45494e"/>
<path d="M1008.6 1182.0 A6.5 6.5 0 1 1 1011.2 1187.3" stroke="#45494e" stroke-width="1.6" fill="none"/><path d="M1004.7 1181.8 L1012.5 1181.8 L1008.6 1186.5 Z" fill="#45494e"/><path d="M1015.0 1178.4 V1182.3 L1018.0 1184.6" stroke="#45494e" stroke-width="1.4400000000000002" fill="none"/>
<path d="M1029.3 1182 Q1038.3 1172.5 1047.3 1182 Q1038.3 1191.5 1029.3 1182 Z" fill="#a3a6aa"/><circle cx="1038.3" cy="1182" r="3.4" fill="#e2e4e6"/><circle cx="1038.3" cy="1182" r="2.1" fill="#a3a6aa"/>
<rect x="1052.6" y="1175.3" width="17.2" height="13.6" rx="1.5" fill="none" stroke="#45494e" stroke-width="1.6"/>
<path d="M1055.6 1181.8 V1178.4 H1059 M1066.8 1182.2 V1185.6 H1063.4" stroke="#45494e" stroke-width="1.3" fill="none"/>
<rect x="1074" y="1172" width="22.2" height="20" rx="2.5" fill="#fff"/>
<path d="M1077.5 1179.5 V1175.2 H1081.3 M1093 1179.5 V1175.2 H1089.2 M1077.5 1184.7 V1189 H1081.3 M1093 1184.7 V1189 H1089.2" stroke="#3b8fe0" stroke-width="1.6" fill="none"/>
<path d="M1080.2 1186.3 H1082.3 L1085.2 1178 L1088.1 1186.3 H1090.2" stroke="#3b8fe0" stroke-width="1.1" fill="none"/>
<path d="M1107.7 1175 H1110.9 V1180.3 H1114.2 L1109.3 1185.3 L1104.4 1180.3 H1107.7 Z" fill="#45494e"/><rect x="1103.4" y="1187.3" width="11.8" height="1.8" fill="#45494e"/>
</svg>
</body></html>
